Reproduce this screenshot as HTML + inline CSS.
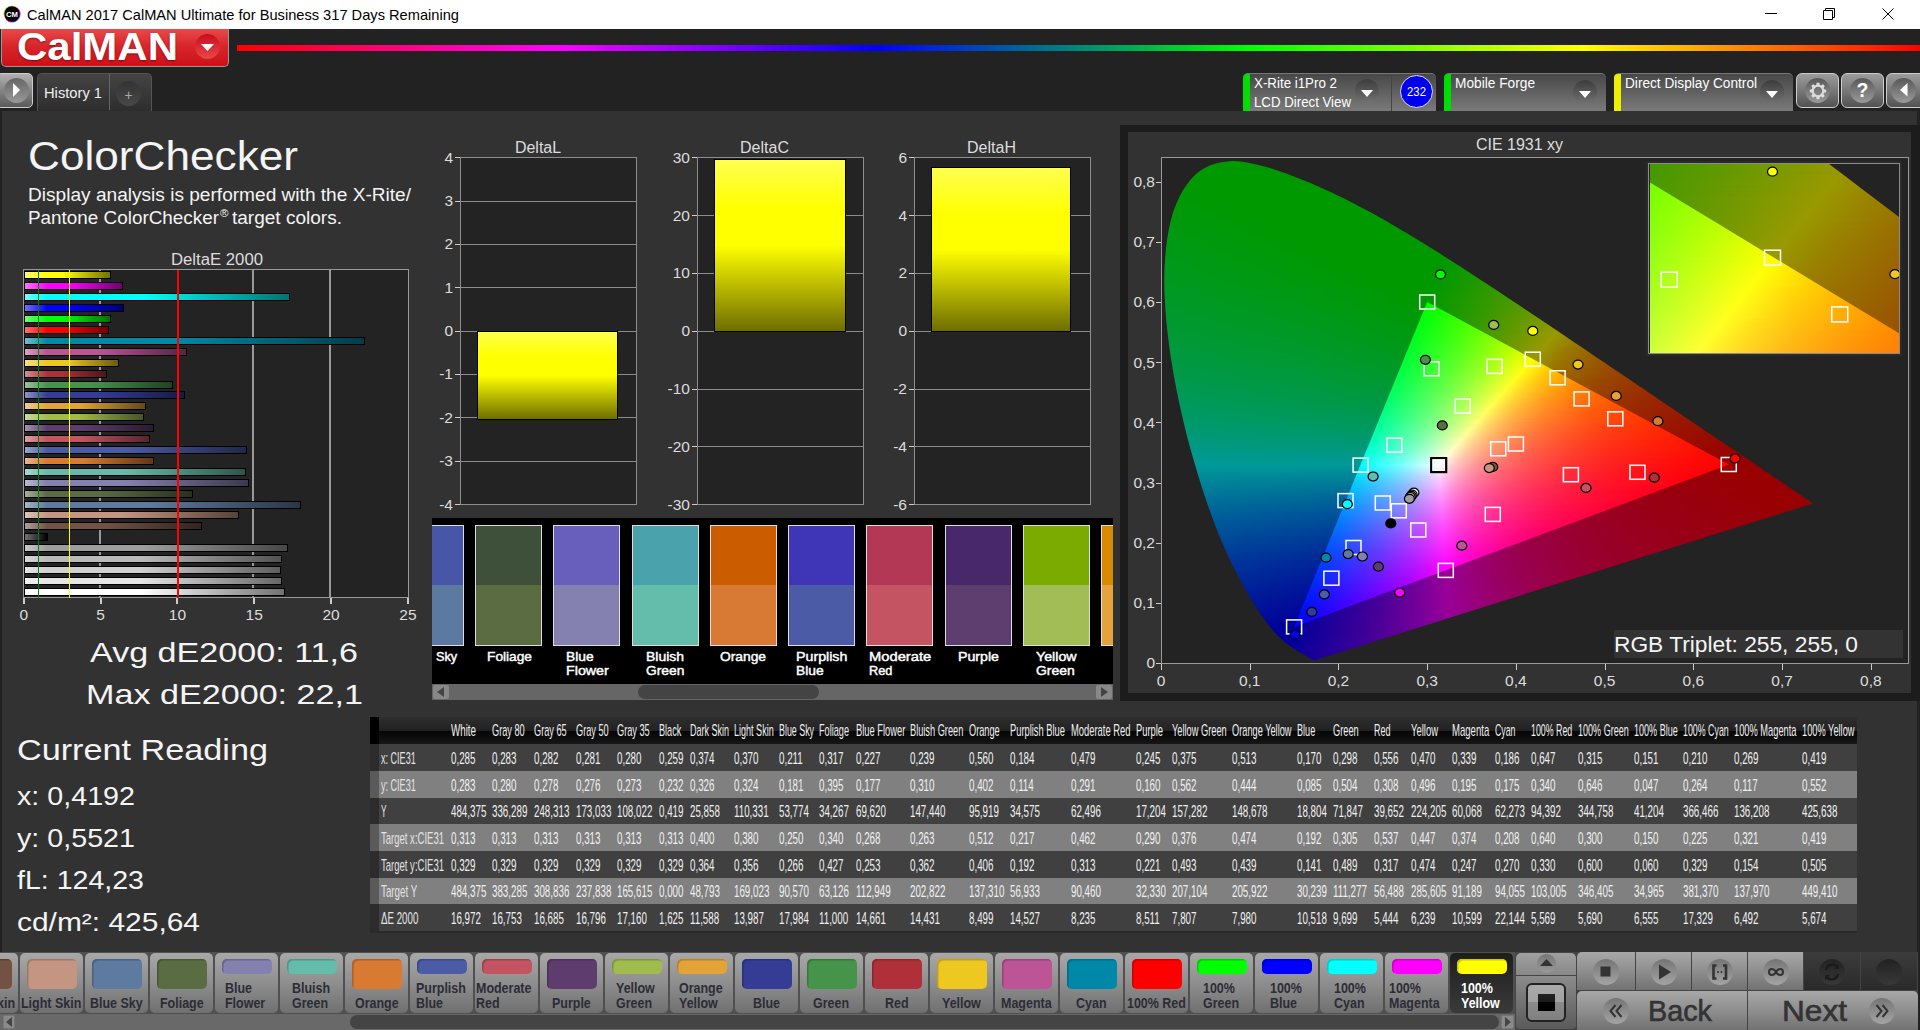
<!DOCTYPE html>
<html><head><meta charset="utf-8"><title>CalMAN</title><style>
html,body{margin:0;padding:0}
body{width:1920px;height:1030px;overflow:hidden;position:relative;background:#323232;font-family:"Liberation Sans",sans-serif}
div,span,svg{position:absolute;box-sizing:border-box}
.t{white-space:pre;line-height:1;transform-origin:0 0}
</style></head><body>
<div style="left:0px;top:0px;width:1920px;height:29px;background:#fff"></div>
<svg style="left:3px;top:5px" width="18" height="18" viewBox="0 0 21 21"><defs><linearGradient id="ic" x1="0" y1="0" x2="1" y2="1"><stop offset="0" stop-color="#3c3"/><stop offset=".35" stop-color="#ff0"/><stop offset=".6" stop-color="#f0f"/><stop offset="1" stop-color="#06f"/></linearGradient></defs><circle cx="10.5" cy="10.5" r="10" fill="url(#ic)"/><circle cx="10.5" cy="10.5" r="9" fill="#000"/><text x="10.5" y="14" font-family="Liberation Sans,sans-serif" font-size="9" font-weight="700" fill="#fff" text-anchor="middle">CM</text></svg>
<span class="t" style="left:27.00px;top:6.80px;font-size:15px;color:#000;transform:scaleX(0.9759);">CalMAN 2017 CalMAN Ultimate for Business 317 Days Remaining</span>
<svg style="left:1760px;top:0" width="160" height="29" viewBox="0 0 160 29"><g stroke="#000" stroke-width="1" fill="none"><path d="M5 13.5h12"/><path d="M63.5 10.5h9v9h-9z M65.5 10.5v-2h9v9h-2" /><path d="M122.500 8.5l11 11 M133.5 8.5l-11 11"/></g></svg>
<div style="left:0px;top:29px;width:1920px;height:82px;background:#222"></div>
<div style="left:237px;top:45px;width:1683px;height:6px;background:linear-gradient(90deg,#f00 0%,#f0f 19%,#00f 38%,#00a060 52%,#0f0 60%,#ff0 80%,#f00 100%)"></div>
<div style="left:1px;top:29px;width:228px;height:38px;background:linear-gradient(180deg,#e84a4a 0%,#d8262c 45%,#cc1118 100%);border:1px solid #999;border-top:none;border-radius:0 0 5px 5px"></div>
<span class="t" style="left:16.50px;top:28.41px;font-size:38.5px;color:#fff;font-weight:700;transform:scaleX(1.0908);text-shadow:0 1px 2px rgba(80,0,0,.6);">CalMAN</span>
<div style="left:195px;top:34px;width:25px;height:25px;border-radius:50%;background:linear-gradient(180deg,#c80d1c,#e8484a)"></div>
<svg style="left:201px;top:44px" width="13" height="8"><path d="M0 0h13l-6.500 7z" fill="#fff"/></svg>
<div style="left:-4px;top:73px;width:37px;height:35px;background:linear-gradient(180deg,#b0b0b0,#5a5a5a);border:1px solid #ccc;border-radius:5px"></div>
<div style="left:4px;top:78px;width:25px;height:25px;border-radius:50%;background:linear-gradient(180deg,#666,#999)"></div>
<svg style="left:13px;top:83px" width="8" height="14"><path d="M0 0l7 7-7 7z" fill="#fff"/></svg>
<div style="left:37px;top:73px;width:115px;height:38px;background:linear-gradient(180deg,#444,#2d2d2d);border:1px solid #555;border-bottom:none;border-radius:5px 5px 0 0"></div>
<div style="left:109px;top:74px;width:1px;height:36px;background:#666"></div>
<span class="t" style="left:44.00px;top:85.30px;font-size:15px;color:#eee;transform:scaleX(0.9799);">History 1</span>
<div style="left:116px;top:81px;width:25px;height:25px;border-radius:50%;background:linear-gradient(180deg,#333,#484848)"></div>
<span class="t" style="left:124.41px;top:88.15px;font-size:14px;color:#aaa;">+</span>
<div style="left:1243px;top:73px;width:193px;height:38px;background:linear-gradient(180deg,#484848 0%,#7a7a7a 100%);border-top:1px solid #777;border-radius:5px 5px 0 0;overflow:hidden"></div>
<div style="left:1243px;top:74px;width:7px;height:37px;background:#0d0;border-radius:4px 0 0 0"></div>
<span class="t" style="left:1254.00px;top:76.15px;font-size:14px;color:#fff;transform:scaleX(0.9523);">X-Rite i1Pro 2</span>
<span class="t" style="left:1254.00px;top:95.15px;font-size:14px;color:#fff;transform:scaleX(0.9469);">LCD Direct View</span>
<div style="left:1355px;top:79px;width:24px;height:24px;border-radius:50%;background:linear-gradient(180deg,#3c3c3c,#727272)"></div>
<svg style="left:1361px;top:90px" width="12" height="7"><path d="M0 0h12l-6 7z" fill="#fff"/></svg>
<div style="left:1391px;top:76px;width:1px;height:35px;background:#444"></div>
<div style="left:1400px;top:75px;width:33px;height:33px;border-radius:50%;background:#0000f0;border:1.500px solid #ddd"></div>
<span class="t" style="left:1407.00px;top:85.84px;font-size:12px;color:#fff;transform:scaleX(0.9485);">232</span>
<div style="left:1444px;top:73px;width:162px;height:38px;background:linear-gradient(180deg,#484848 0%,#7a7a7a 100%);border-top:1px solid #777;border-radius:5px 5px 0 0;overflow:hidden"></div>
<div style="left:1444px;top:74px;width:7px;height:37px;background:#0d0;border-radius:4px 0 0 0"></div>
<span class="t" style="left:1455.00px;top:76.15px;font-size:14px;color:#fff;transform:scaleX(0.9792);">Mobile Forge</span>
<div style="left:1573px;top:80px;width:24px;height:24px;border-radius:50%;background:linear-gradient(180deg,#3c3c3c,#727272)"></div>
<svg style="left:1579px;top:91px" width="12" height="7"><path d="M0 0h12l-6 7z" fill="#fff"/></svg>
<div style="left:1614px;top:73px;width:179px;height:38px;background:linear-gradient(180deg,#484848 0%,#7a7a7a 100%);border-top:1px solid #777;border-radius:5px 5px 0 0;overflow:hidden"></div>
<div style="left:1614px;top:74px;width:7px;height:37px;background:#ee0;border-radius:4px 0 0 0"></div>
<span class="t" style="left:1625.00px;top:76.15px;font-size:14px;color:#fff;transform:scaleX(0.9751);">Direct Display Control</span>
<div style="left:1760px;top:80px;width:24px;height:24px;border-radius:50%;background:linear-gradient(180deg,#3c3c3c,#727272)"></div>
<svg style="left:1766px;top:91px" width="12" height="7"><path d="M0 0h12l-6 7z" fill="#fff"/></svg>
<div style="left:1796px;top:72.5px;width:43px;height:35.5px;background:linear-gradient(180deg,#9c9c9c,#787878 50%,#525252);border:1px solid #ccc;border-radius:6px"></div>
<div style="left:1805px;top:78px;width:25px;height:25px;border-radius:50%;background:linear-gradient(180deg,#585858,#9a9a9a)"></div>
<div style="left:1841px;top:72.5px;width:43px;height:35.5px;background:linear-gradient(180deg,#9c9c9c,#787878 50%,#525252);border:1px solid #ccc;border-radius:6px"></div>
<div style="left:1850px;top:78px;width:25px;height:25px;border-radius:50%;background:linear-gradient(180deg,#585858,#9a9a9a)"></div>
<div style="left:1886px;top:72.5px;width:43px;height:35.5px;background:linear-gradient(180deg,#9c9c9c,#787878 50%,#525252);border:1px solid #ccc;border-radius:6px"></div>
<div style="left:1891.2px;top:78px;width:25px;height:25px;border-radius:50%;background:linear-gradient(180deg,#585858,#9a9a9a)"></div>
<svg style="left:1807.500px;top:80.500px" width="20" height="20" viewBox="-10 -10 20 20"><g fill="#ddd"><path d="M-1.300 -8.200h2.600l.7 3h-4z" transform="rotate(0)"/><path d="M-1.300 -8.200h2.600l.7 3h-4z" transform="rotate(45)"/><path d="M-1.300 -8.200h2.600l.7 3h-4z" transform="rotate(90)"/><path d="M-1.300 -8.200h2.600l.7 3h-4z" transform="rotate(135)"/><path d="M-1.300 -8.200h2.600l.7 3h-4z" transform="rotate(180)"/><path d="M-1.300 -8.200h2.600l.7 3h-4z" transform="rotate(225)"/><path d="M-1.300 -8.200h2.600l.7 3h-4z" transform="rotate(270)"/><path d="M-1.300 -8.200h2.600l.7 3h-4z" transform="rotate(315)"/></g><circle r="5.200" fill="none" stroke="#ddd" stroke-width="2"/></svg>
<span class="t" style="left:1856.54px;top:80.99px;font-size:19.5px;color:#fff;font-weight:700;">?</span>
<svg style="left:1900px;top:83px" width="8" height="14"><path d="M7.500 0v13.500l-7.500-6.500z" fill="#fff"/></svg>
<div style="left:0px;top:111px;width:1920px;height:919px;background:#323232"></div>
<div style="left:0px;top:110px;width:2px;height:920px;background:#222"></div>
<div style="left:1917px;top:110px;width:3px;height:15px;background:#222"></div>
<div style="left:1917px;top:700px;width:3px;height:330px;background:#222"></div>
<span class="t" style="left:28.00px;top:135.79px;font-size:41px;color:#f4f4f4;transform:scaleX(1.0772);">ColorChecker</span>
<span class="t" style="left:28.00px;top:185.76px;font-size:18px;color:#f4f4f4;transform:scaleX(1.0605);">Display analysis is performed with the X-Rite/</span>
<span class="t" style="left:28.00px;top:208.76px;font-size:18px;color:#f4f4f4;transform:scaleX(1.0488);">Pantone ColorChecker</span>
<span class="t" style="left:219.50px;top:208.53px;font-size:10px;color:#f4f4f4;transform:scaleX(1.1525);">®</span>
<span class="t" style="left:232.00px;top:208.76px;font-size:18px;color:#f4f4f4;transform:scaleX(1.0572);">target colors.</span>
<span class="t" style="left:170.50px;top:252.46px;font-size:16px;color:#ddd;transform:scaleX(1.0447);">DeltaE 2000</span>
<div style="left:23px;top:269px;width:386px;height:329px;background:#232323;border:1px solid #999"></div>
<div style="left:99.4px;top:270px;width:1.6px;height:327px;background:#999"></div>
<div style="left:252.4px;top:270px;width:1.6px;height:327px;background:#999"></div>
<div style="left:329.4px;top:270px;width:1.6px;height:327px;background:#999"></div>
<div style="left:24px;top:271px;width:86.7px;height:8px;background:#000"></div><div style="left:25px;top:272px;width:84.7px;height:6px;background:linear-gradient(90deg,rgb(255, 255, 114) 0,rgb(255, 255, 0) 22px,rgb(255, 255, 0) 45%,rgb(114, 114, 0) 100%)"></div>
<div style="left:24px;top:282px;width:99.3px;height:8px;background:#000"></div><div style="left:25px;top:283px;width:97.3px;height:6px;background:linear-gradient(90deg,rgb(255, 114, 255) 0,rgb(255, 0, 255) 22px,rgb(255, 0, 255) 45%,rgb(114, 0, 114) 100%)"></div>
<div style="left:24px;top:293px;width:266.4px;height:8px;background:#000"></div><div style="left:25px;top:294px;width:264.4px;height:6px;background:linear-gradient(90deg,rgb(114, 255, 255) 0,rgb(0, 255, 255) 22px,rgb(0, 255, 255) 45%,rgb(0, 114, 114) 100%)"></div>
<div style="left:24px;top:304px;width:100.3px;height:8px;background:#000"></div><div style="left:25px;top:305px;width:98.3px;height:6px;background:linear-gradient(90deg,rgb(114, 114, 255) 0,rgb(0, 0, 255) 22px,rgb(0, 0, 255) 45%,rgb(0, 0, 114) 100%)"></div>
<div style="left:24px;top:315px;width:86.9px;height:8px;background:#000"></div><div style="left:25px;top:316px;width:84.9px;height:6px;background:linear-gradient(90deg,rgb(114, 255, 114) 0,rgb(0, 255, 0) 22px,rgb(0, 255, 0) 45%,rgb(0, 114, 0) 100%)"></div>
<div style="left:24px;top:326px;width:85.1px;height:8px;background:#000"></div><div style="left:25px;top:327px;width:83.1px;height:6px;background:linear-gradient(90deg,rgb(255, 114, 114) 0,rgb(255, 0, 0) 22px,rgb(255, 0, 0) 45%,rgb(114, 0, 0) 100%)"></div>
<div style="left:24px;top:337px;width:340.7px;height:8px;background:#000"></div><div style="left:25px;top:338px;width:338.7px;height:6px;background:linear-gradient(90deg,rgb(114, 189, 207) 0,rgb(0, 136, 168) 22px,rgb(0, 136, 168) 45%,rgb(0, 61, 75) 100%)"></div>
<div style="left:24px;top:348px;width:162.6px;height:8px;background:#000"></div><div style="left:25px;top:349px;width:160.6px;height:6px;background:linear-gradient(90deg,rgb(218, 160, 197) 0,rgb(188, 84, 150) 22px,rgb(188, 84, 150) 45%,rgb(84, 37, 67) 100%)"></div>
<div style="left:24px;top:359px;width:95.4px;height:8px;background:#000"></div><div style="left:25px;top:360px;width:93.4px;height:6px;background:linear-gradient(90deg,rgb(245, 224, 132) 0,rgb(238, 200, 32) 22px,rgb(238, 200, 32) 45%,rgb(107, 90, 14) 100%)"></div>
<div style="left:24px;top:370px;width:83.1px;height:8px;background:#000"></div><div style="left:25px;top:371px;width:81.1px;height:6px;background:linear-gradient(90deg,rgb(211, 141, 146) 0,rgb(176, 48, 58) 22px,rgb(176, 48, 58) 45%,rgb(79, 21, 26) 100%)"></div>
<div style="left:24px;top:381px;width:148.8px;height:8px;background:#000"></div><div style="left:25px;top:382px;width:146.8px;height:6px;background:linear-gradient(90deg,rgb(153, 196, 156) 0,rgb(70, 148, 76) 22px,rgb(70, 148, 76) 45%,rgb(31, 66, 34) 100%)"></div>
<div style="left:24px;top:391px;width:161.4px;height:8px;background:#000"></div><div style="left:25px;top:392px;width:159.4px;height:6px;background:linear-gradient(90deg,rgb(143, 147, 197) 0,rgb(52, 60, 150) 22px,rgb(52, 60, 150) 45%,rgb(23, 27, 67) 100%)"></div>
<div style="left:24px;top:402px;width:122.3px;height:8px;background:#000"></div><div style="left:25px;top:403px;width:120.3px;height:6px;background:linear-gradient(90deg,rgb(240, 204, 145) 0,rgb(228, 163, 56) 22px,rgb(228, 163, 56) 45%,rgb(102, 73, 25) 100%)"></div>
<div style="left:24px;top:413px;width:119.6px;height:8px;background:#000"></div><div style="left:25px;top:414px;width:117.6px;height:6px;background:linear-gradient(90deg,rgb(202, 218, 157) 0,rgb(160, 188, 78) 22px,rgb(160, 188, 78) 45%,rgb(72, 84, 35) 100%)"></div>
<div style="left:24px;top:424px;width:130.4px;height:8px;background:#000"></div><div style="left:25px;top:425px;width:128.4px;height:6px;background:linear-gradient(90deg,rgb(166, 147, 175) 0,rgb(94, 60, 110) 22px,rgb(94, 60, 110) 45%,rgb(42, 27, 49) 100%)"></div>
<div style="left:24px;top:435px;width:126.2px;height:8px;background:#000"></div><div style="left:25px;top:436px;width:124.2px;height:6px;background:linear-gradient(90deg,rgb(222, 160, 168) 0,rgb(196, 84, 98) 22px,rgb(196, 84, 98) 45%,rgb(88, 37, 44) 100%)"></div>
<div style="left:24px;top:446px;width:223.2px;height:8px;background:#000"></div><div style="left:25px;top:447px;width:221.2px;height:6px;background:linear-gradient(90deg,rgb(156, 164, 206) 0,rgb(76, 91, 166) 22px,rgb(76, 91, 166) 45%,rgb(34, 40, 74) 100%)"></div>
<div style="left:24px;top:457px;width:130.3px;height:8px;background:#000"></div><div style="left:25px;top:458px;width:128.3px;height:6px;background:linear-gradient(90deg,rgb(234, 181, 142) 0,rgb(217, 122, 50) 22px,rgb(217, 122, 50) 45%,rgb(97, 54, 22) 100%)"></div>
<div style="left:24px;top:468px;width:221.7px;height:8px;background:#000"></div><div style="left:25px;top:469px;width:219.7px;height:6px;background:linear-gradient(90deg,rgb(169, 218, 208) 0,rgb(100, 189, 170) 22px,rgb(100, 189, 170) 45%,rgb(45, 85, 76) 100%)"></div>
<div style="left:24px;top:479px;width:225.3px;height:8px;background:#000"></div><div style="left:25px;top:480px;width:223.3px;height:6px;background:linear-gradient(90deg,rgb(187, 185, 211) 0,rgb(132, 128, 176) 22px,rgb(132, 128, 176) 45%,rgb(59, 57, 79) 100%)"></div>
<div style="left:24px;top:490px;width:168.8px;height:8px;background:#000"></div><div style="left:25px;top:491px;width:166.8px;height:6px;background:linear-gradient(90deg,rgb(164, 174, 151) 0,rgb(90, 108, 66) 22px,rgb(90, 108, 66) 45%,rgb(40, 48, 29) 100%)"></div>
<div style="left:24px;top:501px;width:276.5px;height:8px;background:#000"></div><div style="left:25px;top:502px;width:274.5px;height:6px;background:linear-gradient(90deg,rgb(165, 181, 202) 0,rgb(93, 122, 160) 22px,rgb(93, 122, 160) 45%,rgb(41, 54, 72) 100%)"></div>
<div style="left:24px;top:511px;width:214.9px;height:8px;background:#000"></div><div style="left:25px;top:512px;width:212.9px;height:6px;background:linear-gradient(90deg,rgb(222, 197, 186) 0,rgb(196, 150, 130) 22px,rgb(196, 150, 130) 45%,rgb(88, 67, 58) 100%)"></div>
<div style="left:24px;top:522px;width:177.9px;height:8px;background:#000"></div><div style="left:25px;top:523px;width:175.9px;height:6px;background:linear-gradient(90deg,rgb(178, 159, 152) 0,rgb(115, 82, 68) 22px,rgb(115, 82, 68) 45%,rgb(51, 36, 30) 100%)"></div>
<div style="left:24px;top:533px;width:24.3px;height:8px;background:#000"></div><div style="left:25px;top:534px;width:22.3px;height:6px;background:linear-gradient(90deg,rgb(114, 114, 114) 0,rgb(0, 0, 0) 22px,rgb(0, 0, 0) 45%,rgb(0, 0, 0) 100%)"></div>
<div style="left:24px;top:544px;width:263.8px;height:8px;background:#000"></div><div style="left:25px;top:545px;width:261.8px;height:6px;background:linear-gradient(90deg,rgb(201, 201, 201) 0,rgb(158, 158, 158) 22px,rgb(158, 158, 158) 45%,rgb(71, 71, 71) 100%)"></div>
<div style="left:24px;top:555px;width:258.2px;height:8px;background:#000"></div><div style="left:25px;top:556px;width:256.2px;height:6px;background:linear-gradient(90deg,rgb(217, 217, 217) 0,rgb(186, 186, 186) 22px,rgb(186, 186, 186) 45%,rgb(83, 83, 83) 100%)"></div>
<div style="left:24px;top:566px;width:256.5px;height:8px;background:#000"></div><div style="left:25px;top:567px;width:254.5px;height:6px;background:linear-gradient(90deg,rgb(229, 229, 229) 0,rgb(209, 209, 209) 22px,rgb(209, 209, 209) 45%,rgb(94, 94, 94) 100%)"></div>
<div style="left:24px;top:577px;width:257.5px;height:8px;background:#000"></div><div style="left:25px;top:578px;width:255.5px;height:6px;background:linear-gradient(90deg,rgb(241, 241, 241) 0,rgb(230, 230, 230) 22px,rgb(230, 230, 230) 45%,rgb(103, 103, 103) 100%)"></div>
<div style="left:24px;top:588px;width:260.9px;height:8px;background:#000"></div><div style="left:25px;top:589px;width:258.9px;height:6px;background:linear-gradient(90deg,rgb(255, 255, 255) 0,rgb(255, 255, 255) 22px,rgb(255, 255, 255) 45%,rgb(114, 114, 114) 100%)"></div>
<div style="left:37.7px;top:270px;width:1.6px;height:328px;background:#008000"></div>
<div style="left:68.6px;top:270px;width:1.7px;height:328px;background:#ff0"></div>
<div style="left:176.5px;top:270px;width:2px;height:328px;background:#f00"></div>
<div style="left:23px;top:598px;width:2px;height:6px;background:#ccc"></div>
<span class="t" style="left:19.39px;top:606.88px;font-size:15.5px;color:#ddd;">0</span>
<div style="left:100px;top:598px;width:2px;height:6px;background:#ccc"></div>
<span class="t" style="left:96.24px;top:606.88px;font-size:15.5px;color:#ddd;">5</span>
<div style="left:176px;top:598px;width:2px;height:6px;background:#ccc"></div>
<span class="t" style="left:168.77px;top:606.88px;font-size:15.5px;color:#ddd;">10</span>
<div style="left:253px;top:598px;width:2px;height:6px;background:#ccc"></div>
<span class="t" style="left:245.62px;top:606.88px;font-size:15.5px;color:#ddd;">15</span>
<div style="left:330px;top:598px;width:2px;height:6px;background:#ccc"></div>
<span class="t" style="left:322.47px;top:606.88px;font-size:15.5px;color:#ddd;">20</span>
<div style="left:407px;top:598px;width:2px;height:6px;background:#ccc"></div>
<span class="t" style="left:399.32px;top:606.88px;font-size:15.5px;color:#ddd;">25</span>
<span class="t" style="left:90.00px;top:638.80px;font-size:28px;color:#f4f4f4;transform:scaleX(1.2179);">Avg dE2000: 11,6</span>
<span class="t" style="left:85.50px;top:680.80px;font-size:28px;color:#f4f4f4;transform:scaleX(1.2188);">Max dE2000: 22,1</span>
<span class="t" style="left:17.00px;top:735.11px;font-size:30px;color:#f4f4f4;transform:scaleX(1.1403);">Current Reading</span>
<span class="t" style="left:17.00px;top:782.99px;font-size:26px;color:#f4f4f4;transform:scaleX(1.1030);">x: 0,4192</span>
<span class="t" style="left:17.00px;top:824.99px;font-size:26px;color:#f4f4f4;transform:scaleX(1.1030);">y: 0,5521</span>
<span class="t" style="left:17.00px;top:866.99px;font-size:26px;color:#f4f4f4;transform:scaleX(1.0981);">fL: 124,23</span>
<span class="t" style="left:17.00px;top:908.99px;font-size:26px;color:#f4f4f4;transform:scaleX(1.1511);">cd/m²: 425,64</span>
<div style="left:460px;top:157px;width:176.5px;height:347.5px;background:#232323;border:1.700px solid #8e8e8e"></div>
<div style="left:455px;top:503.75px;width:5px;height:1.5px;background:#ccc"></div>
<span class="t" style="left:439.20px;top:496.58px;font-size:15.5px;color:#ddd;">-4</span>
<div style="left:461px;top:460.75px;width:175px;height:1.25px;background:#8c8c8c"></div>
<div style="left:455px;top:460.75px;width:5px;height:1.5px;background:#ccc"></div>
<span class="t" style="left:439.20px;top:453.22px;font-size:15.5px;color:#ddd;">-3</span>
<div style="left:461px;top:416.75px;width:175px;height:1.25px;background:#8c8c8c"></div>
<div style="left:455px;top:416.75px;width:5px;height:1.5px;background:#ccc"></div>
<span class="t" style="left:439.20px;top:409.85px;font-size:15.5px;color:#ddd;">-2</span>
<div style="left:461px;top:373.75px;width:175px;height:1.25px;background:#8c8c8c"></div>
<div style="left:455px;top:373.75px;width:5px;height:1.5px;background:#ccc"></div>
<span class="t" style="left:439.20px;top:366.49px;font-size:15.5px;color:#ddd;">-1</span>
<div style="left:461px;top:330.75px;width:175px;height:1.25px;background:#8c8c8c"></div>
<div style="left:455px;top:330.75px;width:5px;height:1.5px;background:#ccc"></div>
<span class="t" style="left:444.38px;top:323.13px;font-size:15.5px;color:#ddd;">0</span>
<div style="left:461px;top:286.75px;width:175px;height:1.25px;background:#8c8c8c"></div>
<div style="left:455px;top:286.75px;width:5px;height:1.5px;background:#ccc"></div>
<span class="t" style="left:444.38px;top:279.77px;font-size:15.5px;color:#ddd;">1</span>
<div style="left:461px;top:243.75px;width:175px;height:1.25px;background:#8c8c8c"></div>
<div style="left:455px;top:243.75px;width:5px;height:1.5px;background:#ccc"></div>
<span class="t" style="left:444.38px;top:236.40px;font-size:15.5px;color:#ddd;">2</span>
<div style="left:461px;top:200.75px;width:175px;height:1.25px;background:#8c8c8c"></div>
<div style="left:455px;top:200.75px;width:5px;height:1.5px;background:#ccc"></div>
<span class="t" style="left:444.38px;top:193.04px;font-size:15.5px;color:#ddd;">3</span>
<div style="left:455px;top:156.75px;width:5px;height:1.5px;background:#ccc"></div>
<span class="t" style="left:444.38px;top:149.68px;font-size:15.5px;color:#ddd;">4</span>
<span class="t" style="left:514.88px;top:139.96px;font-size:16px;color:#ddd;">DeltaL</span>
<div style="left:477px;top:330.75px;width:141px;height:89.45949999999999px;background:linear-gradient(180deg,#ffff50 0%,#ff0 28%,#ff0 50%,#6e6e00 100%);border:1px solid #000"></div>
<div style="left:697px;top:157px;width:166.5px;height:347.5px;background:#232323;border:1.700px solid #8e8e8e"></div>
<div style="left:692px;top:503.75px;width:5px;height:1.5px;background:#ccc"></div>
<span class="t" style="left:667.59px;top:496.58px;font-size:15.5px;color:#ddd;">-30</span>
<div style="left:698px;top:445.75px;width:165px;height:1.25px;background:#8c8c8c"></div>
<div style="left:692px;top:445.75px;width:5px;height:1.5px;background:#ccc"></div>
<span class="t" style="left:667.59px;top:438.76px;font-size:15.5px;color:#ddd;">-20</span>
<div style="left:698px;top:388.75px;width:165px;height:1.25px;background:#8c8c8c"></div>
<div style="left:692px;top:388.75px;width:5px;height:1.5px;background:#ccc"></div>
<span class="t" style="left:667.59px;top:380.95px;font-size:15.5px;color:#ddd;">-10</span>
<div style="left:698px;top:330.75px;width:165px;height:1.25px;background:#8c8c8c"></div>
<div style="left:692px;top:330.75px;width:5px;height:1.5px;background:#ccc"></div>
<span class="t" style="left:681.38px;top:323.13px;font-size:15.5px;color:#ddd;">0</span>
<div style="left:698px;top:272.75px;width:165px;height:1.25px;background:#8c8c8c"></div>
<div style="left:692px;top:272.75px;width:5px;height:1.5px;background:#ccc"></div>
<span class="t" style="left:672.75px;top:265.31px;font-size:15.5px;color:#ddd;">10</span>
<div style="left:698px;top:214.75px;width:165px;height:1.25px;background:#8c8c8c"></div>
<div style="left:692px;top:214.75px;width:5px;height:1.5px;background:#ccc"></div>
<span class="t" style="left:672.75px;top:207.50px;font-size:15.5px;color:#ddd;">20</span>
<div style="left:692px;top:156.75px;width:5px;height:1.5px;background:#ccc"></div>
<span class="t" style="left:672.75px;top:149.68px;font-size:15.5px;color:#ddd;">30</span>
<span class="t" style="left:740.05px;top:139.96px;font-size:16px;color:#ddd;">DeltaC</span>
<div style="left:714px;top:159.0345px;width:132px;height:172.7155px;background:linear-gradient(180deg,#ffff50 0%,#ff0 28%,#ff0 50%,#6e6e00 100%);border:1px solid #000"></div>
<div style="left:914px;top:157px;width:176.5px;height:347.5px;background:#232323;border:1.700px solid #8e8e8e"></div>
<div style="left:909px;top:503.75px;width:5px;height:1.5px;background:#ccc"></div>
<span class="t" style="left:893.20px;top:496.58px;font-size:15.5px;color:#ddd;">-6</span>
<div style="left:915px;top:445.75px;width:175px;height:1.25px;background:#8c8c8c"></div>
<div style="left:909px;top:445.75px;width:5px;height:1.5px;background:#ccc"></div>
<span class="t" style="left:893.20px;top:438.76px;font-size:15.5px;color:#ddd;">-4</span>
<div style="left:915px;top:388.75px;width:175px;height:1.25px;background:#8c8c8c"></div>
<div style="left:909px;top:388.75px;width:5px;height:1.5px;background:#ccc"></div>
<span class="t" style="left:893.20px;top:380.95px;font-size:15.5px;color:#ddd;">-2</span>
<div style="left:915px;top:330.75px;width:175px;height:1.25px;background:#8c8c8c"></div>
<div style="left:909px;top:330.75px;width:5px;height:1.5px;background:#ccc"></div>
<span class="t" style="left:898.38px;top:323.13px;font-size:15.5px;color:#ddd;">0</span>
<div style="left:915px;top:272.75px;width:175px;height:1.25px;background:#8c8c8c"></div>
<div style="left:909px;top:272.75px;width:5px;height:1.5px;background:#ccc"></div>
<span class="t" style="left:898.38px;top:265.31px;font-size:15.5px;color:#ddd;">2</span>
<div style="left:915px;top:214.75px;width:175px;height:1.25px;background:#8c8c8c"></div>
<div style="left:909px;top:214.75px;width:5px;height:1.5px;background:#ccc"></div>
<span class="t" style="left:898.38px;top:207.50px;font-size:15.5px;color:#ddd;">4</span>
<div style="left:909px;top:156.75px;width:5px;height:1.5px;background:#ccc"></div>
<span class="t" style="left:898.38px;top:149.68px;font-size:15.5px;color:#ddd;">6</span>
<span class="t" style="left:967.05px;top:139.96px;font-size:16px;color:#ddd;">DeltaH</span>
<div style="left:930.8px;top:166.83975px;width:140.70000000000005px;height:164.91025px;background:linear-gradient(180deg,#ffff50 0%,#ff0 28%,#ff0 50%,#6e6e00 100%);border:1px solid #000"></div>
<div style="left:432px;top:518px;width:681px;height:168px;background:#000"></div>
<div style="left:432px;top:518px;width:681px;height:166px;overflow:hidden">
<div style="left:-35.4px;top:7px;width:67px;height:121px;border:1px solid #ddd;background:linear-gradient(180deg,rgb(72, 86, 168) 0,rgb(72, 86, 168) 49.500%,rgb(92, 122, 160) 49.500%,rgb(92, 122, 160) 100%)"></div>
<div style="left:42.9px;top:7px;width:67px;height:121px;border:1px solid #ddd;background:linear-gradient(180deg,rgb(62, 80, 58) 0,rgb(62, 80, 58) 49.500%,rgb(92, 108, 66) 49.500%,rgb(92, 108, 66) 100%)"></div>
<div style="left:121.2px;top:7px;width:67px;height:121px;border:1px solid #ddd;background:linear-gradient(180deg,rgb(104, 94, 188) 0,rgb(104, 94, 188) 49.500%,rgb(132, 128, 176) 49.500%,rgb(132, 128, 176) 100%)"></div>
<div style="left:199.5px;top:7px;width:67px;height:121px;border:1px solid #ddd;background:linear-gradient(180deg,rgb(74, 162, 172) 0,rgb(74, 162, 172) 49.500%,rgb(100, 189, 170) 49.500%,rgb(100, 189, 170) 100%)"></div>
<div style="left:277.8px;top:7px;width:67px;height:121px;border:1px solid #ddd;background:linear-gradient(180deg,rgb(204, 92, 0) 0,rgb(204, 92, 0) 49.500%,rgb(217, 122, 52) 49.500%,rgb(217, 122, 52) 100%)"></div>
<div style="left:356.1px;top:7px;width:67px;height:121px;border:1px solid #ddd;background:linear-gradient(180deg,rgb(62, 54, 183) 0,rgb(62, 54, 183) 49.500%,rgb(76, 91, 166) 49.500%,rgb(76, 91, 166) 100%)"></div>
<div style="left:434.4px;top:7px;width:67px;height:121px;border:1px solid #ddd;background:linear-gradient(180deg,rgb(178, 56, 86) 0,rgb(178, 56, 86) 49.500%,rgb(196, 84, 98) 49.500%,rgb(196, 84, 98) 100%)"></div>
<div style="left:512.7px;top:7px;width:67px;height:121px;border:1px solid #ddd;background:linear-gradient(180deg,rgb(72, 40, 106) 0,rgb(72, 40, 106) 49.500%,rgb(94, 62, 110) 49.500%,rgb(94, 62, 110) 100%)"></div>
<div style="left:591.0px;top:7px;width:67px;height:121px;border:1px solid #ddd;background:linear-gradient(180deg,rgb(124, 171, 0) 0,rgb(124, 171, 0) 49.500%,rgb(163, 189, 86) 49.500%,rgb(163, 189, 86) 100%)"></div>
<div style="left:669.3px;top:7px;width:67px;height:121px;border:1px solid #ddd;background:linear-gradient(180deg,rgb(214, 138, 0) 0,rgb(214, 138, 0) 49.500%,rgb(228, 163, 60) 49.500%,rgb(228, 163, 60) 100%)"></div>
</div>
<span class="t" style="left:436.00px;top:649.57px;font-size:13.5px;color:#fff;transform:scaleX(0.9416);-webkit-text-stroke:.45px #fff;">Sky</span>
<span class="t" style="left:486.50px;top:649.57px;font-size:13.5px;color:#fff;transform:scaleX(1.0162);-webkit-text-stroke:.45px #fff;">Foliage</span>
<span class="t" style="left:565.80px;top:649.57px;font-size:13.5px;color:#fff;transform:scaleX(1.0247);-webkit-text-stroke:.45px #fff;">Blue</span>
<span class="t" style="left:565.80px;top:663.57px;font-size:13.5px;color:#fff;transform:scaleX(1.0564);-webkit-text-stroke:.45px #fff;">Flower</span>
<span class="t" style="left:646.00px;top:649.57px;font-size:13.5px;color:#fff;transform:scaleX(1.0331);-webkit-text-stroke:.45px #fff;">Bluish</span>
<span class="t" style="left:646.00px;top:663.57px;font-size:13.5px;color:#fff;transform:scaleX(1.0231);-webkit-text-stroke:.45px #fff;">Green</span>
<span class="t" style="left:720.30px;top:649.57px;font-size:13.5px;color:#fff;transform:scaleX(1.0215);-webkit-text-stroke:.45px #fff;">Orange</span>
<span class="t" style="left:796.20px;top:649.57px;font-size:13.5px;color:#fff;transform:scaleX(1.0537);-webkit-text-stroke:.45px #fff;">Purplish</span>
<span class="t" style="left:796.20px;top:663.57px;font-size:13.5px;color:#fff;transform:scaleX(1.0247);-webkit-text-stroke:.45px #fff;">Blue</span>
<span class="t" style="left:869.00px;top:649.57px;font-size:13.5px;color:#fff;transform:scaleX(1.0903);-webkit-text-stroke:.45px #fff;">Moderate</span>
<span class="t" style="left:869.00px;top:663.57px;font-size:13.5px;color:#fff;transform:scaleX(0.9449);-webkit-text-stroke:.45px #fff;">Red</span>
<span class="t" style="left:957.80px;top:649.57px;font-size:13.5px;color:#fff;transform:scaleX(1.0504);-webkit-text-stroke:.45px #fff;">Purple</span>
<span class="t" style="left:1036.20px;top:649.57px;font-size:13.5px;color:#fff;transform:scaleX(1.0537);-webkit-text-stroke:.45px #fff;">Yellow</span>
<span class="t" style="left:1036.20px;top:663.57px;font-size:13.5px;color:#fff;transform:scaleX(1.0338);-webkit-text-stroke:.45px #fff;">Green</span>
<div style="left:432px;top:684px;width:681px;height:16px;background:#666"></div>
<div style="left:638px;top:685px;width:181px;height:14px;background:#444;border-radius:7px"></div>
<div style="left:433px;top:685px;width:16px;height:14px;background:#888;border-radius:2px"></div>
<div style="left:1096px;top:685px;width:16px;height:14px;background:#888;border-radius:2px"></div>
<svg style="left:437px;top:687px" width="8" height="10"><path d="M7 0v10l-7-5z" fill="#444"/></svg>
<svg style="left:1100px;top:687px" width="8" height="10"><path d="M1 0v10l7-5z" fill="#444"/></svg>
<div style="left:1120px;top:125px;width:800px;height:575.5px;background:#1c1c1c"></div>
<div style="left:1128px;top:132px;width:783px;height:561px;background:#323232"></div>
<span class="t" style="left:1475.92px;top:137.46px;font-size:16px;color:#ddd;">CIE 1931 xy</span>
<div style="left:1160.5px;top:156.5px;width:748px;height:507px;background:#232323;border:1.500px solid #999"></div>
<div style="left:1162px;top:158px;width:744px;height:504px;clip-path:path('M153.5 502.0 153.4 502.0 153.4 502.0 153.4 502.0 153.3 502.0 153.3 502.0 153.2 502.1 153.1 502.1 153.1 502.1 153.0 502.1 152.9 502.1 152.8 502.1 152.8 502.1 152.7 502.1 152.6 502.1 152.5 502.1 152.4 502.1 152.3 502.1 152.1 502.1 152.0 502.1 151.8 502.1 151.6 502.0 151.4 502.0 151.3 502.0 151.1 501.9 150.9 501.9 150.8 501.8 150.6 501.8 150.4 501.7 150.3 501.6 150.1 501.5 149.9 501.4 149.7 501.3 149.5 501.2 149.3 501.1 149.1 501.0 148.9 500.8 148.6 500.7 148.3 500.5 148.0 500.4 147.7 500.2 147.4 500.0 147.1 499.8 146.7 499.6 146.4 499.4 146.0 499.2 145.7 498.9 145.3 498.7 144.9 498.4 144.4 498.2 144.0 497.9 143.5 497.6 143.0 497.3 142.5 497.0 141.9 496.7 141.3 496.3 140.7 496.0 140.1 495.6 139.4 495.2 138.7 494.8 137.9 494.4 137.2 493.9 136.4 493.4 135.6 493.0 134.8 492.5 133.9 491.9 133.0 491.3 132.0 490.7 131.0 490.1 130.0 489.4 129.0 488.7 127.9 488.0 126.8 487.1 125.6 486.3 124.4 485.4 123.2 484.5 122.0 483.5 120.6 482.3 119.2 481.0 117.7 479.5 116.1 478.0 114.5 476.3 112.8 474.5 111.0 472.5 109.1 470.2 107.2 467.8 105.1 465.3 103.1 462.6 100.9 459.6 98.6 456.4 96.2 452.8 93.8 448.9 91.2 444.8 88.6 440.4 85.8 435.7 83.0 430.7 80.0 425.2 76.9 419.3 73.6 413.1 70.3 406.5 66.8 399.6 63.4 392.1 60.0 384.3 56.5 375.9 53.1 367.0 49.6 357.8 46.1 348.1 42.7 338.0 39.3 327.5 35.9 316.6 32.5 305.1 29.1 293.3 25.8 281.2 22.7 269.0 19.9 256.7 17.1 244.3 14.5 231.7 12.1 218.9 9.9 206.1 7.9 193.4 6.3 181.1 4.9 169.0 3.8 156.9 3.0 144.9 2.4 133.3 2.2 121.9 2.5 111.1 3.1 100.5 4.0 90.3 5.3 80.3 6.9 70.8 8.9 61.9 11.3 53.7 14.2 46.0 17.4 38.9 21.0 32.3 24.9 26.4 29.1 21.1 33.5 16.5 38.2 12.7 43.2 9.7 48.4 7.3 53.8 5.6 59.4 4.3 64.9 3.4 70.6 3.0 76.4 3.3 82.3 4.1 88.3 5.2 94.3 6.5 100.3 8.0 106.3 9.5 112.3 11.4 118.4 13.4 124.4 15.6 130.4 17.9 136.3 20.2 142.0 22.4 147.8 24.8 153.4 27.2 159.0 29.7 164.6 32.2 170.2 34.8 175.7 37.4 181.1 40.1 186.5 42.8 191.9 45.6 197.3 48.4 202.7 51.2 208.1 54.1 213.5 57.1 218.8 60.1 224.2 63.1 229.5 66.2 234.8 69.3 240.1 72.4 245.4 75.6 250.7 78.8 256.0 82.0 261.3 85.2 266.6 88.5 271.9 91.8 277.2 95.1 282.4 98.5 287.7 101.8 293.0 105.2 298.3 108.6 303.6 112.0 308.9 115.4 314.2 118.9 319.5 122.4 324.7 125.8 330.0 129.3 335.3 132.8 340.6 136.3 345.8 139.8 351.1 143.3 356.4 146.8 361.6 150.3 366.9 153.8 372.1 157.3 377.4 160.8 382.6 164.3 387.8 167.8 393.0 171.3 398.2 174.8 403.4 178.2 408.5 181.7 413.6 185.2 418.7 188.6 423.8 192.0 428.9 195.5 433.9 198.9 438.9 202.2 443.9 205.6 448.8 208.9 453.7 212.3 458.6 215.6 463.4 218.8 468.2 222.1 473.0 225.3 477.7 228.5 482.4 231.6 487.0 234.7 491.6 237.8 496.1 240.9 500.6 243.9 505.0 246.9 509.3 249.8 513.6 252.7 517.8 255.5 522.0 258.4 526.1 261.1 530.0 263.8 533.9 266.5 537.7 269.0 541.4 271.5 545.0 273.9 548.5 276.3 551.9 278.6 555.3 280.9 558.6 283.1 561.9 285.3 565.1 287.5 568.2 289.6 571.2 291.6 574.1 293.6 576.9 295.5 579.7 297.3 582.3 299.1 584.9 300.8 587.3 302.5 589.7 304.1 592.0 305.6 594.3 307.1 596.4 308.6 598.5 310.0 600.5 311.4 602.4 312.7 604.3 313.9 606.1 315.1 607.8 316.3 609.4 317.4 611.0 318.5 612.5 319.5 614.0 320.5 615.4 321.5 616.8 322.4 618.1 323.3 619.4 324.1 620.6 324.9 621.8 325.7 622.9 326.5 624.0 327.2 625.1 328.0 626.1 328.7 627.1 329.3 628.1 330.0 629.0 330.6 629.9 331.3 630.8 331.9 631.7 332.4 632.5 333.0 633.3 333.5 634.1 334.1 634.8 334.6 635.6 335.1 636.3 335.6 636.9 336.0 637.6 336.4 638.2 336.9 638.8 337.3 639.4 337.6 640.0 338.0 640.5 338.4 641.0 338.7 641.5 339.0 641.9 339.3 642.3 339.6 642.7 339.9 643.1 340.2 643.5 340.4 643.9 340.7 644.2 340.9 644.6 341.1 644.9 341.3 645.2 341.5 645.5 341.7 645.7 341.9 646.0 342.1 646.2 342.2 646.4 342.4 646.7 342.6 647.0 342.8 647.3 343.0 647.6 343.2 647.9 343.4 648.2 343.6 648.5 343.8 648.7 343.9 648.9 344.1 649.1 344.2 649.3 344.4 649.5 344.5 649.7 344.6 649.9 344.8 650.1 344.9 650.4 345.1 650.6 345.2 650.7 345.3 650.9 345.4Z')">
<div style="left:0;top:2px;width:744px;height:2px;background:linear-gradient(90deg,#009900 59px,#009900 84px)"></div>
<div style="left:0;top:4px;width:744px;height:2px;background:linear-gradient(90deg,#009900 50px,#009900 94px)"></div>
<div style="left:0;top:6px;width:744px;height:2px;background:linear-gradient(90deg,#009900 44px,#009900 103px)"></div>
<div style="left:0;top:8px;width:744px;height:2px;background:linear-gradient(90deg,#009900 40px,#009900 110px)"></div>
<div style="left:0;top:10px;width:744px;height:2px;background:linear-gradient(90deg,#009900 37px,#009900 117px)"></div>
<div style="left:0;top:12px;width:744px;height:2px;background:linear-gradient(90deg,#009900 34px,#009900 122px)"></div>
<div style="left:0;top:14px;width:744px;height:2px;background:linear-gradient(90deg,#009900 32px,#009900 128px)"></div>
<div style="left:0;top:16px;width:744px;height:2px;background:linear-gradient(90deg,#009900 30px,#009900 133px)"></div>
<div style="left:0;top:18px;width:744px;height:2px;background:linear-gradient(90deg,#009901 28px,#009900 138px)"></div>
<div style="left:0;top:20px;width:744px;height:2px;background:linear-gradient(90deg,#009901 26px,#009900 143px)"></div>
<div style="left:0;top:22px;width:744px;height:2px;background:linear-gradient(90deg,#009902 24px,#009900 148px)"></div>
<div style="left:0;top:24px;width:744px;height:2px;background:linear-gradient(90deg,#009902 23px,#009900 153px)"></div>
<div style="left:0;top:26px;width:744px;height:2px;background:linear-gradient(90deg,#009903 21px,#009900 158px)"></div>
<div style="left:0;top:28px;width:744px;height:2px;background:linear-gradient(90deg,#009904 20px,#009900 48px,#009900 162px)"></div>
<div style="left:0;top:30px;width:744px;height:2px;background:linear-gradient(90deg,#009904 19px,#009900 52px,#009900 167px)"></div>
<div style="left:0;top:32px;width:744px;height:2px;background:linear-gradient(90deg,#009905 18px,#009900 55px,#009900 171px)"></div>
<div style="left:0;top:34px;width:744px;height:2px;background:linear-gradient(90deg,#009906 16px,#009900 59px,#009900 175px)"></div>
<div style="left:0;top:36px;width:744px;height:2px;background:linear-gradient(90deg,#009906 15px,#009900 63px,#009900 179px)"></div>
<div style="left:0;top:38px;width:744px;height:2px;background:linear-gradient(90deg,#009907 14px,#009900 67px,#009900 183px)"></div>
<div style="left:0;top:40px;width:744px;height:2px;background:linear-gradient(90deg,#009907 13px,#009900 70px,#009900 187px)"></div>
<div style="left:0;top:42px;width:744px;height:2px;background:linear-gradient(90deg,#009908 13px,#009900 74px,#009900 191px)"></div>
<div style="left:0;top:44px;width:744px;height:2px;background:linear-gradient(90deg,#009908 12px,#009900 78px,#009900 195px)"></div>
<div style="left:0;top:46px;width:744px;height:2px;background:linear-gradient(90deg,#009909 11px,#009900 82px,#009900 199px)"></div>
<div style="left:0;top:48px;width:744px;height:2px;background:linear-gradient(90deg,#00990a 10px,#009900 85px,#009900 203px)"></div>
<div style="left:0;top:50px;width:744px;height:2px;background:linear-gradient(90deg,#00990a 9px,#009900 89px,#009900 207px)"></div>
<div style="left:0;top:52px;width:744px;height:2px;background:linear-gradient(90deg,#00990b 9px,#009900 93px,#009900 210px)"></div>
<div style="left:0;top:54px;width:744px;height:2px;background:linear-gradient(90deg,#00990b 8px,#009900 97px,#009900 214px)"></div>
<div style="left:0;top:56px;width:744px;height:2px;background:linear-gradient(90deg,#00990c 8px,#009900 100px,#009900 218px)"></div>
<div style="left:0;top:58px;width:744px;height:2px;background:linear-gradient(90deg,#00990c 7px,#009900 104px,#009900 221px)"></div>
<div style="left:0;top:60px;width:744px;height:2px;background:linear-gradient(90deg,#00990d 6px,#009900 108px,#009900 225px)"></div>
<div style="left:0;top:62px;width:744px;height:2px;background:linear-gradient(90deg,#00990e 6px,#009900 112px,#009900 228px)"></div>
<div style="left:0;top:64px;width:744px;height:2px;background:linear-gradient(90deg,#00990e 6px,#009900 115px,#009900 232px)"></div>
<div style="left:0;top:66px;width:744px;height:2px;background:linear-gradient(90deg,#00990f 5px,#009900 119px,#009900 235px)"></div>
<div style="left:0;top:68px;width:744px;height:2px;background:linear-gradient(90deg,#00990f 5px,#009900 123px,#009900 239px)"></div>
<div style="left:0;top:70px;width:744px;height:2px;background:linear-gradient(90deg,#009910 4px,#009900 126px,#009900 242px)"></div>
<div style="left:0;top:72px;width:744px;height:2px;background:linear-gradient(90deg,#009910 4px,#009900 130px,#009900 245px)"></div>
<div style="left:0;top:74px;width:744px;height:2px;background:linear-gradient(90deg,#009911 4px,#009900 134px,#009900 249px)"></div>
<div style="left:0;top:76px;width:744px;height:2px;background:linear-gradient(90deg,#009912 3px,#009900 138px,#009900 252px)"></div>
<div style="left:0;top:78px;width:744px;height:2px;background:linear-gradient(90deg,#009912 3px,#009900 141px,#009900 255px)"></div>
<div style="left:0;top:80px;width:744px;height:2px;background:linear-gradient(90deg,#009913 3px,#009900 145px,#009900 259px)"></div>
<div style="left:0;top:82px;width:744px;height:2px;background:linear-gradient(90deg,#009914 2px,#009900 149px,#009900 262px)"></div>
<div style="left:0;top:84px;width:744px;height:2px;background:linear-gradient(90deg,#009914 2px,#009900 153px,#009900 265px)"></div>
<div style="left:0;top:86px;width:744px;height:2px;background:linear-gradient(90deg,#009915 2px,#009900 156px,#009900 268px)"></div>
<div style="left:0;top:88px;width:744px;height:2px;background:linear-gradient(90deg,#009915 2px,#009900 160px,#009900 271px)"></div>
<div style="left:0;top:90px;width:744px;height:2px;background:linear-gradient(90deg,#009916 1px,#009900 164px,#009900 275px)"></div>
<div style="left:0;top:92px;width:744px;height:2px;background:linear-gradient(90deg,#009917 1px,#009900 168px,#009900 278px)"></div>
<div style="left:0;top:94px;width:744px;height:2px;background:linear-gradient(90deg,#009917 1px,#009900 171px,#009900 281px)"></div>
<div style="left:0;top:96px;width:744px;height:2px;background:linear-gradient(90deg,#009918 1px,#009900 175px,#009900 284px)"></div>
<div style="left:0;top:98px;width:744px;height:2px;background:linear-gradient(90deg,#009918 1px,#009900 179px,#029900 287px)"></div>
<div style="left:0;top:100px;width:744px;height:2px;background:linear-gradient(90deg,#009919 0px,#009900 183px,#009900 283px,#059900 290px)"></div>
<div style="left:0;top:102px;width:744px;height:2px;background:linear-gradient(90deg,#00991a 0px,#009900 186px,#009900 282px,#089900 294px)"></div>
<div style="left:0;top:104px;width:744px;height:2px;background:linear-gradient(90deg,#00991a 0px,#009900 190px,#009900 281px,#0b9900 297px)"></div>
<div style="left:0;top:106px;width:744px;height:2px;background:linear-gradient(90deg,#00991b 0px,#009900 194px,#009900 281px,#0e9900 300px)"></div>
<div style="left:0;top:108px;width:744px;height:2px;background:linear-gradient(90deg,#00991c 0px,#009900 198px,#009900 280px,#119900 303px)"></div>
<div style="left:0;top:110px;width:744px;height:2px;background:linear-gradient(90deg,#00991c 0px,#009900 201px,#009900 279px,#149900 306px)"></div>
<div style="left:0;top:112px;width:744px;height:2px;background:linear-gradient(90deg,#00991d 0px,#009900 205px,#009900 278px,#179900 309px)"></div>
<div style="left:0;top:114px;width:744px;height:2px;background:linear-gradient(90deg,#00991e 0px,#009900 209px,#009900 277px,#1a9900 312px)"></div>
<div style="left:0;top:116px;width:744px;height:2px;background:linear-gradient(90deg,#00991e 0px,#009900 213px,#009900 276px,#1d9900 315px)"></div>
<div style="left:0;top:118px;width:744px;height:2px;background:linear-gradient(90deg,#00991f 0px,#009900 216px,#009900 276px,#209900 318px)"></div>
<div style="left:0;top:120px;width:744px;height:2px;background:linear-gradient(90deg,#009920 0px,#009900 220px,#009900 275px,#239900 321px)"></div>
<div style="left:0;top:122px;width:744px;height:2px;background:linear-gradient(90deg,#009920 0px,#009900 224px,#009900 274px,#279900 324px)"></div>
<div style="left:0;top:124px;width:744px;height:2px;background:linear-gradient(90deg,#009921 0px,#009900 228px,#009900 273px,#2b9900 328px)"></div>
<div style="left:0;top:126px;width:744px;height:2px;background:linear-gradient(90deg,#009922 0px,#009900 231px,#009900 272px,#2f9900 331px)"></div>
<div style="left:0;top:128px;width:744px;height:2px;background:linear-gradient(90deg,#009923 0px,#009900 235px,#009900 272px,#329900 334px)"></div>
<div style="left:0;top:130px;width:744px;height:2px;background:linear-gradient(90deg,#009923 0px,#009912 137px,#009900 239px,#009900 271px,#369900 337px)"></div>
<div style="left:0;top:132px;width:744px;height:2px;background:linear-gradient(90deg,#009924 0px,#009912 142px,#009900 243px,#009900 270px,#3a9900 340px)"></div>
<div style="left:0;top:134px;width:744px;height:2px;background:linear-gradient(90deg,#009925 0px,#009913 140px,#009900 246px,#009900 269px,#3d9900 343px)"></div>
<div style="left:0;top:136px;width:744px;height:2px;background:linear-gradient(90deg,#009925 0px,#009900 268px,#419900 346px)"></div>
<div style="left:0;top:138px;width:744px;height:2px;background:linear-gradient(90deg,#009926 0px,#009900 267px,#459900 349px)"></div>
<div style="left:0;top:140px;width:744px;height:2px;background:linear-gradient(90deg,#009927 0px,#009900 267px,#4a9900 352px)"></div>
<div style="left:0;top:142px;width:744px;height:2px;background:linear-gradient(90deg,#009928 0px,#009917 134px,#009900 266px,#4e9900 355px)"></div>
<div style="left:0;top:144px;width:744px;height:2px;background:linear-gradient(90deg,#009929 0px,#009913 165px,#009900 265px,#529900 358px)"></div>
<div style="left:0;top:146px;width:744px;height:2px;background:linear-gradient(90deg,#009929 1px,#009918 138px,#009901 264px,#2b9900 316px,#579900 361px)"></div>
<div style="left:0;top:148px;width:744px;height:2px;background:linear-gradient(90deg,#00992a 1px,#009918 143px,#009902 263px,#2c9900 316px,#5b9900 364px)"></div>
<div style="left:0;top:150px;width:744px;height:2px;background:linear-gradient(90deg,#00992b 1px,#009919 142px,#009903 262px,#2e9900 317px,#609900 367px)"></div>
<div style="left:0;top:152px;width:744px;height:2px;background:linear-gradient(90deg,#00992c 1px,#00991a 141px,#009904 262px,#309900 318px,#659900 370px)"></div>
<div style="left:0;top:154px;width:744px;height:2px;background:linear-gradient(90deg,#00992c 1px,#00991b 140px,#009905 261px,#139900 284px,#339900 320px,#6a9900 373px)"></div>
<div style="left:0;top:156px;width:744px;height:2px;background:linear-gradient(90deg,#00992d 1px,#00991c 139px,#009906 260px,#179900 288px,#379900 323px,#6f9900 376px)"></div>
<div style="left:0;top:158px;width:744px;height:2px;background:linear-gradient(90deg,#00992e 1px,#00991d 138px,#009907 259px,#299900 307px,#759900 379px)"></div>
<div style="left:0;top:160px;width:744px;height:2px;background:linear-gradient(90deg,#00992f 2px,#00991e 137px,#009908 258px,#2b9900 308px,#7a9900 382px)"></div>
<div style="left:0;top:162px;width:744px;height:2px;background:linear-gradient(90deg,#009930 2px,#00991e 143px,#009909 258px,#249900 299px,#4b9900 339px,#809900 385px)"></div>
<div style="left:0;top:164px;width:744px;height:2px;background:linear-gradient(90deg,#009931 2px,#00991e 149px,#00990a 257px,#289900 302px,#429900 329px,#859900 388px)"></div>
<div style="left:0;top:166px;width:744px;height:2px;background:linear-gradient(90deg,#009931 2px,#009921 135px,#00990b 256px,#2d9900 306px,#4f9900 340px,#8b9900 391px)"></div>
<div style="left:0;top:168px;width:744px;height:2px;background:linear-gradient(90deg,#009932 2px,#009920 148px,#00990d 255px,#329900 310px,#4a9900 334px,#929900 394px)"></div>
<div style="left:0;top:170px;width:744px;height:2px;background:linear-gradient(90deg,#009933 3px,#009923 134px,#00990e 254px,#449900 327px,#989900 397px)"></div>
<div style="left:0;top:172px;width:744px;height:2px;background:linear-gradient(90deg,#009934 3px,#009925 127px,#00990f 253px,#3b9900 317px,#679900 357px,#999900 396px,#999400 400px)"></div>
<div style="left:0;top:174px;width:744px;height:2px;background:linear-gradient(90deg,#009935 3px,#009923 147px,#009910 253px,#499900 329px,#999900 394px,#998e00 403px)"></div>
<div style="left:0;top:176px;width:744px;height:2px;background:linear-gradient(90deg,#009936 3px,#009925 140px,#009911 252px,#459901 324px,#989900 392px,#998900 405px)"></div>
<div style="left:0;top:178px;width:744px;height:2px;background:linear-gradient(90deg,#009937 3px,#009926 140px,#009912 251px,#4d9900 330px,#999900 391px,#998400 408px)"></div>
<div style="left:0;top:180px;width:744px;height:2px;background:linear-gradient(90deg,#009938 4px,#009927 140px,#009913 250px,#499902 325px,#999900 389px,#997e00 411px)"></div>
<div style="left:0;top:182px;width:744px;height:2px;background:linear-gradient(90deg,#009939 4px,#009915 249px,#469904 321px,#589900 336px,#999900 387px,#997900 414px)"></div>
<div style="left:0;top:184px;width:744px;height:2px;background:linear-gradient(90deg,#00993a 4px,#009928 147px,#009916 248px,#429907 316px,#5e9900 340px,#989900 385px,#997500 417px)"></div>
<div style="left:0;top:186px;width:744px;height:2px;background:linear-gradient(90deg,#00993b 4px,#009928 154px,#009917 248px,#499906 321px,#659900 344px,#989900 383px,#997000 420px)"></div>
<div style="left:0;top:188px;width:744px;height:2px;background:linear-gradient(90deg,#00993b 5px,#00992b 141px,#009918 247px,#469909 317px,#6a9900 347px,#999900 382px,#997c00 405px,#996c00 423px)"></div>
<div style="left:0;top:190px;width:744px;height:2px;background:linear-gradient(90deg,#00993c 5px,#009931 106px,#00991a 246px,#43990b 313px,#719900 351px,#999900 380px,#997b00 404px,#996700 426px)"></div>
<div style="left:0;top:192px;width:744px;height:2px;background:linear-gradient(90deg,#00993d 5px,#009931 114px,#00991b 245px,#49990b 317px,#799900 355px,#999900 378px,#997a00 403px,#996300 429px)"></div>
<div style="left:0;top:194px;width:744px;height:2px;background:linear-gradient(90deg,#00993f 5px,#00992e 143px,#00991c 244px,#46990d 313px,#809900 359px,#999800 377px,#997900 402px,#995f00 432px)"></div>
<div style="left:0;top:196px;width:744px;height:2px;background:linear-gradient(90deg,#00993f 6px,#009931 130px,#00991d 244px,#4b990d 316px,#999800 375px,#997800 401px,#995c00 435px)"></div>
<div style="left:0;top:198px;width:744px;height:2px;background:linear-gradient(90deg,#009941 6px,#00991f 243px,#4f990e 318px,#999900 373px,#997500 402px,#995800 438px)"></div>
<div style="left:0;top:200px;width:744px;height:2px;background:linear-gradient(90deg,#009942 6px,#009932 139px,#009920 242px,#469911 309px,#999900 371px,#997300 402px,#995500 441px)"></div>
<div style="left:0;top:202px;width:744px;height:2px;background:linear-gradient(90deg,#009943 7px,#009922 241px,#449913 306px,#999902 369px,#997200 401px,#995100 444px)"></div>
<div style="left:0;top:204px;width:744px;height:2px;background:linear-gradient(90deg,#009944 7px,#009937 120px,#009923 240px,#429915 303px,#999803 368px,#997100 400px,#994e00 447px)"></div>
<div style="left:0;top:206px;width:744px;height:2px;background:linear-gradient(90deg,#009945 7px,#009925 239px,#4c9915 310px,#999905 366px,#997000 399px,#994b00 450px)"></div>
<div style="left:0;top:208px;width:744px;height:2px;background:linear-gradient(90deg,#009946 8px,#009926 239px,#459918 303px,#999907 364px,#996f00 398px,#994800 453px)"></div>
<div style="left:0;top:210px;width:744px;height:2px;background:linear-gradient(90deg,#009947 8px,#009939 132px,#009927 238px,#43991a 300px,#999909 362px,#996e00 397px,#995800 424px,#994500 456px)"></div>
<div style="left:0;top:212px;width:744px;height:2px;background:linear-gradient(90deg,#009948 8px,#00993a 134px,#009929 237px,#41991c 297px,#99980b 361px,#997e04 380px,#996500 405px,#994300 459px)"></div>
<div style="left:0;top:214px;width:744px;height:2px;background:linear-gradient(90deg,#009949 9px,#00993b 136px,#00992a 236px,#45991d 299px,#99980d 359px,#997e05 378px,#996400 404px,#994000 462px)"></div>
<div style="left:0;top:216px;width:744px;height:2px;background:linear-gradient(90deg,#00994a 9px,#00993f 116px,#00992c 235px,#4d991d 304px,#99990f 357px,#997e07 376px,#996300 403px,#993d00 465px)"></div>
<div style="left:0;top:218px;width:744px;height:2px;background:linear-gradient(90deg,#00994c 9px,#00992e 234px,#479920 298px,#999911 355px,#997506 382px,#995e00 407px,#993b00 468px)"></div>
<div style="left:0;top:220px;width:744px;height:2px;background:linear-gradient(90deg,#00994d 10px,#00992f 234px,#4a9921 299px,#999913 353px,#997d0a 373px,#996202 400px,#994c00 431px,#993900 471px)"></div>
<div style="left:0;top:222px;width:744px;height:2px;background:linear-gradient(90deg,#00994e 10px,#009931 233px,#449924 293px,#999815 352px,#997c0c 372px,#996103 399px,#994a00 432px,#993600 474px)"></div>
<div style="left:0;top:224px;width:744px;height:2px;background:linear-gradient(90deg,#00994f 11px,#009944 119px,#009932 232px,#479926 294px,#989917 349px,#99750b 376px,#995c03 403px,#994800 433px,#993400 477px)"></div>
<div style="left:0;top:226px;width:744px;height:2px;background:linear-gradient(90deg,#009951 11px,#009934 231px,#419928 288px,#999919 348px,#99750d 374px,#995b04 402px,#994600 434px,#993200 479px)"></div>
<div style="left:0;top:228px;width:744px;height:2px;background:linear-gradient(90deg,#009952 11px,#009936 230px,#40992b 286px,#659924 313px,#99991b 346px,#99750f 372px,#995a05 401px,#994200 439px,#993000 482px)"></div>
<div style="left:0;top:230px;width:744px;height:2px;background:linear-gradient(90deg,#009953 12px,#009947 129px,#009937 230px,#4b992b 293px,#98991d 344px,#997511 370px,#995d08 395px,#994900 425px,#992e00 485px)"></div>
<div style="left:0;top:232px;width:744px;height:2px;background:linear-gradient(90deg,#009954 12px,#009949 125px,#009939 229px,#51992c 296px,#989920 342px,#997512 368px,#995306 406px,#994600 428px,#992c00 488px)"></div>
<div style="left:0;top:234px;width:744px;height:2px;background:linear-gradient(90deg,#009956 13px,#00993b 228px,#4c992e 291px,#999922 341px,#997514 366px,#995207 405px,#994200 432px,#992a00 491px)"></div>
<div style="left:0;top:236px;width:744px;height:2px;background:linear-gradient(90deg,#009957 13px,#00993d 227px,#479931 286px,#999924 339px,#997516 364px,#995409 400px,#993f00 436px,#992800 494px)"></div>
<div style="left:0;top:238px;width:744px;height:2px;background:linear-gradient(90deg,#009958 13px,#00993f 226px,#469934 284px,#999927 337px,#997518 362px,#99530a 399px,#993c00 439px,#992600 497px)"></div>
<div style="left:0;top:240px;width:744px;height:2px;background:linear-gradient(90deg,#00995a 14px,#009941 225px,#419936 279px,#989929 335px,#99751a 360px,#99520b 398px,#993900 443px,#992400 500px)"></div>
<div style="left:0;top:242px;width:744px;height:2px;background:linear-gradient(90deg,#00995b 14px,#009942 225px,#4e9937 287px,#98992c 333px,#996c18 366px,#994f0b 400px,#993600 447px,#992300 503px)"></div>
<div style="left:0;top:244px;width:744px;height:2px;background:linear-gradient(90deg,#00995d 15px,#009944 224px,#46993a 280px,#99992e 332px,#998224 346px,#996d1a 363px,#994e0d 399px,#993300 450px,#992100 506px)"></div>
<div style="left:0;top:246px;width:744px;height:2px;background:linear-gradient(90deg,#00995e 15px,#009946 223px,#45993c 278px,#999930 330px,#997520 354px,#995210 391px,#993100 454px,#991f00 509px)"></div>
<div style="left:0;top:248px;width:744px;height:2px;background:linear-gradient(90deg,#009960 15px,#009948 222px,#47993e 278px,#999933 328px,#996e1f 358px,#994f10 393px,#992e00 458px,#991e00 512px)"></div>
<div style="left:0;top:250px;width:744px;height:2px;background:linear-gradient(90deg,#009961 16px,#00994a 221px,#469941 276px,#989936 326px,#996e21 356px,#99480e 401px,#992c00 461px,#991c00 515px)"></div>
<div style="left:0;top:252px;width:744px;height:2px;background:linear-gradient(90deg,#009963 16px,#00994d 220px,#459943 274px,#989938 324px,#996f23 353px,#99470f 400px,#992900 465px,#991b00 518px)"></div>
<div style="left:0;top:254px;width:744px;height:2px;background:linear-gradient(90deg,#009964 17px,#00994f 220px,#419946 270px,#99993b 323px,#996f26 351px,#994811 396px,#993608 429px,#992700 469px,#991900 521px)"></div>
<div style="left:0;top:256px;width:744px;height:2px;background:linear-gradient(90deg,#009966 17px,#009951 219px,#4f9947 278px,#99993e 321px,#997d2f 338px,#996522 358px,#994713 395px,#993308 433px,#992500 472px,#991800 524px)"></div>
<div style="left:0;top:258px;width:744px;height:2px;background:linear-gradient(90deg,#009967 18px,#009953 218px,#4e994a 276px,#989941 319px,#998033 334px,#996726 354px,#994815 391px,#99340a 428px,#992300 476px,#991600 527px)"></div>
<div style="left:0;top:260px;width:744px;height:2px;background:linear-gradient(90deg,#009969 18px,#009955 217px,#4d994c 274px,#989943 317px,#997932 337px,#996828 351px,#994716 390px,#99310a 432px,#992100 480px,#991500 530px)"></div>
<div style="left:0;top:262px;width:744px;height:2px;background:linear-gradient(90deg,#00996b 19px,#009958 216px,#4c994f 272px,#999946 316px,#99883d 325px,#99692b 348px,#994315 394px,#99310b 429px,#991f00 483px,#991400 533px)"></div>
<div style="left:0;top:264px;width:744px;height:2px;background:linear-gradient(90deg,#00996c 19px,#00995a 216px,#4b9952 270px,#999949 314px,#99853e 325px,#996a2e 345px,#995723 364px,#994216 393px,#992b09 441px,#991d00 487px,#991200 536px)"></div>
<div style="left:0;top:266px;width:744px;height:2px;background:linear-gradient(90deg,#00996e 20px,#00995c 215px,#4a9955 268px,#99994c 312px,#99823f 325px,#996b31 342px,#995624 363px,#994117 392px,#992b0a 438px,#991d01 484px,#991100 539px)"></div>
<div style="left:0;top:268px;width:744px;height:2px;background:linear-gradient(90deg,#009970 20px,#00995f 214px,#499957 266px,#98994f 310px,#997c3e 327px,#99612d 349px,#993f18 393px,#992b0c 435px,#991d02 481px,#991000 542px)"></div>
<div style="left:0;top:270px;width:744px;height:2px;background:linear-gradient(90deg,#009972 20px,#009961 213px,#40995b 259px,#6f9957 287px,#989953 308px,#99753c 330px,#996431 344px,#993e19 392px,#99280b 440px,#991901 491px,#990f00 545px)"></div>
<div style="left:0;top:272px;width:744px;height:2px;background:linear-gradient(90deg,#009973 21px,#009964 212px,#4a995d 264px,#999956 307px,#998448 318px,#996534 341px,#995127 362px,#993d1a 391px,#99280c 437px,#991902 488px,#990d00 548px)"></div>
<div style="left:0;top:274px;width:744px;height:2px;background:linear-gradient(90deg,#009975 22px,#009966 211px,#499960 262px,#999959 305px,#998149 318px,#996637 338px,#994f28 362px,#993f1d 385px,#992008 458px,#991500 505px,#990c00 551px)"></div>
<div style="left:0;top:276px;width:744px;height:2px;background:linear-gradient(90deg,#009977 22px,#009969 211px,#439963 257px,#98995c 303px,#997e4a 318px,#99673a 335px,#99522c 356px,#993a1c 391px,#992910 428px,#991c06 471px,#991300 509px,#990b00 554px)"></div>
<div style="left:0;top:278px;width:744px;height:2px;background:linear-gradient(90deg,#009979 23px,#00996c 210px,#519965 264px,#989960 301px,#997547 322px,#995f37 340px,#994c2a 361px,#99381c 392px,#991a06 474px,#991100 513px,#990a00 556px)"></div>
<div style="left:0;top:280px;width:744px;height:2px;background:linear-gradient(90deg,#00997b 23px,#00996e 209px,#499969 258px,#979963 299px,#997b4e 316px,#99613b 336px,#994b2b 360px,#99371d 391px,#992711 427px,#991705 483px,#990900 559px)"></div>
<div style="left:0;top:282px;width:744px;height:2px;background:linear-gradient(90deg,#00997d 24px,#009971 208px,#4d996c 259px,#999967 298px,#997b51 314px,#99623e 333px,#994d2f 355px,#993a21 383px,#992713 424px,#991b09 464px,#990f00 520px,#990800 562px)"></div>
<div style="left:0;top:284px;width:744px;height:2px;background:linear-gradient(90deg,#00997f 24px,#009974 207px,#459970 253px,#99996b 296px,#998058 309px,#996443 329px,#994b30 355px,#993922 382px,#991b0b 458px,#990d00 524px,#990700 565px)"></div>
<div style="left:0;top:286px;width:744px;height:2px;background:linear-gradient(90deg,#009981 25px,#009977 206px,#499973 254px,#99986d 295px,#997855 312px,#995b3e 335px,#993823 381px,#991a0c 458px,#990c00 527px,#990600 568px)"></div>
<div style="left:0;top:288px;width:744px;height:2px;background:linear-gradient(90deg,#009983 25px,#00997a 206px,#4f9976 256px,#999871 293px,#997556 312px,#995e43 330px,#994832 354px,#993724 380px,#99180c 462px,#990b00 531px,#990500 571px)"></div>
<div style="left:0;top:290px;width:744px;height:2px;background:linear-gradient(90deg,#009985 26px,#00997d 205px,#45997a 249px,#999976 291px,#997d5f 305px,#996048 326px,#994a36 349px,#993525 381px,#992215 425px,#991308 481px,#990900 535px,#990400 574px)"></div>
<div style="left:0;top:292px;width:744px;height:2px;background:linear-gradient(90deg,#009988 26px,#009980 204px,#42997e 246px,#99997a 289px,#99755c 308px,#99614b 323px,#994534 353px,#993426 380px,#992317 419px,#99140a 473px,#990800 538px,#990300 577px)"></div>
<div style="left:0;top:294px;width:744px;height:2px;background:linear-gradient(90deg,#00998a 27px,#009984 203px,#469981 247px,#99977d 288px,#997560 306px,#995a48 327px,#994738 348px,#993327 379px,#992217 421px,#99120a 476px,#990700 542px,#990200 580px)"></div>
<div style="left:0;top:296px;width:744px;height:2px;background:linear-gradient(90deg,#00998c 27px,#009987 202px,#439985 244px,#999881 286px,#997563 304px,#995c4d 323px,#994539 348px,#993228 378px,#991e16 427px,#99110a 479px,#990600 546px,#990100 583px)"></div>
<div style="left:0;top:298px;width:744px;height:2px;background:linear-gradient(90deg,#00998e 28px,#00998a 202px,#4b9988 247px,#999886 284px,#997969 300px,#995e52 319px,#99463b 345px,#993028 379px,#991c16 430px,#99120c 471px,#990500 549px,#990000 586px)"></div>
<div style="left:0;top:300px;width:744px;height:2px;background:linear-gradient(90deg,#009991 29px,#00998e 201px,#46998c 243px,#99998b 282px,#99756a 300px,#99554c 325px,#993b34 357px,#992924 391px,#990f0b 479px,#990300 553px,#990000 589px)"></div>
<div style="left:0;top:302px;width:744px;height:2px;background:linear-gradient(90deg,#009993 29px,#009991 200px,#419990 239px,#6d9990 261px,#999990 280px,#99756e 298px,#995953 319px,#993e39 350px,#992926 388px,#991715 440px,#990d0a 487px,#990200 557px,#990000 592px)"></div>
<div style="left:0;top:304px;width:744px;height:2px;background:linear-gradient(90deg,#009996 30px,#009995 199px,#219995 220px,#4f9994 245px,#999792 279px,#997572 296px,#995b58 315px,#994340 341px,#992827 387px,#991c1a 421px,#990e0c 479px,#990100 560px,#990000 595px)"></div>
<div style="left:0;top:306px;width:744px;height:2px;background:linear-gradient(90deg,#009998 30px,#009999 198px,#429999 237px,#999898 277px,#997575 294px,#995253 321px,#994040 342px,#992829 384px,#991a1a 423px,#990b0b 487px,#990001 562px,#990000 598px)"></div>
<div style="left:0;top:308px;width:744px;height:2px;background:linear-gradient(90deg,#009799 31px,#009699 197px,#3f9599 235px,#999398 277px,#997174 295px,#995558 316px,#993e41 342px,#99292b 379px,#99191a 425px,#990a0c 487px,#990002 556px,#990000 601px)"></div>
<div style="left:0;top:310px;width:744px;height:2px;background:linear-gradient(90deg,#009599 31px,#009299 197px,#4f9199 243px,#998f98 277px,#996d75 295px,#99565c 313px,#993b40 344px,#992529 385px,#991518 434px,#99090c 488px,#990003 551px,#990000 604px)"></div>
<div style="left:0;top:312px;width:744px;height:2px;background:linear-gradient(90deg,#009299 32px,#008f99 196px,#468d99 238px,#998b99 277px,#996f7a 292px,#99565f 311px,#993b42 342px,#99242a 384px,#991418 436px,#990509 508px,#990004 546px,#990000 607px)"></div>
<div style="left:0;top:314px;width:744px;height:2px;background:linear-gradient(90deg,#009099 33px,#008b99 195px,#418999 235px,#998799 277px,#996674 296px,#994e5a 316px,#993842 343px,#99242c 381px,#991218 438px,#99060c 497px,#990005 540px,#990000 610px)"></div>
<div style="left:0;top:316px;width:744px;height:2px;background:linear-gradient(90deg,#008d99 33px,#008899 194px,#498599 239px,#998399 277px,#99687b 292px,#994f5e 313px,#993643 343px,#99242e 378px,#99131b 429px,#99040b 505px,#990000 582px,#990000 613px)"></div>
<div style="left:0;top:318px;width:744px;height:2px;background:linear-gradient(90deg,#008b99 34px,#008499 193px,#3d8299 232px,#997d97 278px,#99647a 293px,#994657 320px,#99303f 350px,#99202b 386px,#991019 438px,#99030b 507px,#990000 586px,#990000 616px)"></div>
<div style="left:0;top:320px;width:744px;height:2px;background:linear-gradient(90deg,#008899 34px,#008199 193px,#437e99 235px,#997998 278px,#996079 294px,#99485d 315px,#993344 343px,#991f2c 385px,#990f19 440px,#99020b 509px,#990000 619px)"></div>
<div style="left:0;top:322px;width:744px;height:2px;background:linear-gradient(90deg,#008699 35px,#007e99 192px,#407b99 233px,#997598 278px,#995e7b 293px,#994961 312px,#993246 341px,#991f2e 382px,#990d19 442px,#99000a 519px,#990000 622px)"></div>
<div style="left:0;top:324px;width:744px;height:2px;background:linear-gradient(90deg,#008399 36px,#007b99 191px,#4d7799 240px,#997298 278px,#995271 300px,#993c55 324px,#992a3f 352px,#991b2c 388px,#990c19 444px,#99000b 514px,#990000 625px)"></div>
<div style="left:0;top:326px;width:744px;height:2px;background:linear-gradient(90deg,#008199 36px,#007899 190px,#437499 234px,#996e99 278px,#994f70 301px,#993751 329px,#99283f 353px,#991a2d 387px,#990b19 446px,#99000c 509px,#990000 628px)"></div>
<div style="left:0;top:328px;width:744px;height:2px;background:linear-gradient(90deg,#007f99 37px,#007599 189px,#477099 236px,#996b99 278px,#994d72 300px,#993350 331px,#99192e 386px,#990c1c 437px,#99000e 503px,#990001 594px,#990000 631px)"></div>
<div style="left:0;top:330px;width:744px;height:2px;background:linear-gradient(90deg,#007d99 38px,#007299 188px,#4b6d99 238px,#996799 278px,#994c74 299px,#993454 327px,#99243f 355px,#99182f 385px,#99091a 446px,#99000f 498px,#990000 634px)"></div>
<div style="left:0;top:332px;width:744px;height:2px;background:linear-gradient(90deg,#007a99 38px,#006f99 188px,#486a99 236px,#996297 279px,#994873 300px,#993052 330px,#99223f 356px,#99152d 391px,#990a1d 437px,#990011 493px,#990004 574px,#990000 636px)"></div>
<div style="left:0;top:334px;width:744px;height:2px;background:linear-gradient(90deg,#007899 39px,#006c99 187px,#3d6799 229px,#995f98 279px,#994775 299px,#993258 324px,#992342 352px,#99122b 397px,#990012 487px,#990005 569px,#990000 639px)"></div>
<div style="left:0;top:336px;width:744px;height:2px;background:linear-gradient(90deg,#007699 40px,#006a99 186px,#3c6499 228px,#995c98 279px,#994374 300px,#992d54 329px,#991d3c 363px,#99122c 396px,#990014 482px,#990007 556px,#990000 642px)"></div>
<div style="left:0;top:338px;width:744px;height:2px;background:linear-gradient(90deg,#007499 40px,#006799 185px,#436199 232px,#995998 279px,#994276 299px,#99305c 321px,#991f42 354px,#99122f 390px,#990015 477px,#990007 559px,#990000 645px)"></div>
<div style="left:0;top:340px;width:744px;height:2px;background:linear-gradient(90deg,#007199 41px,#006499 184px,#425e99 231px,#995699 279px,#993e75 300px,#992b57 327px,#991c40 358px,#991130 389px,#990017 472px,#990007 562px,#990000 648px)"></div>
<div style="left:0;top:342px;width:744px;height:2px;background:linear-gradient(90deg,#006f99 42px,#006299 184px,#495a99 235px,#995299 279px,#99386f 305px,#992754 331px,#991a40 359px,#990f2e 395px,#990018 466px,#990007 565px,#990000 651px)"></div>
<div style="left:0;top:344px;width:744px;height:2px;background:linear-gradient(90deg,#006d99 42px,#005f99 183px,#4b5799 236px,#994f99 279px,#993a76 300px,#992859 326px,#991a43 355px,#990e2f 394px,#99001a 461px,#990009 553px,#990000 653px)"></div>
<div style="left:0;top:346px;width:744px;height:2px;background:linear-gradient(90deg,#006b99 43px,#005d99 182px,#425699 230px,#6d5199 256px,#994c99 279px,#993775 301px,#992456 330px,#991843 356px,#990d30 393px,#99001c 456px,#990013 494px,#990000 651px)"></div>
<div style="left:0;top:348px;width:744px;height:2px;background:linear-gradient(90deg,#006999 44px,#005a99 181px,#415399 229px,#994898 280px,#99387b 297px,#99255b 325px,#991846 352px,#990b30 394px,#99001e 450px,#990014 491px,#990000 645px)"></div>
<div style="left:0;top:350px;width:744px;height:2px;background:linear-gradient(90deg,#006799 44px,#005899 180px,#265499 210px,#4e4f99 237px,#994698 280px,#993276 301px,#992158 329px,#991644 356px,#990b31 393px,#990020 445px,#990012 504px,#990001 639px)"></div>
<div style="left:0;top:352px;width:744px;height:2px;background:linear-gradient(90deg,#006599 45px,#005699 179px,#245199 208px,#504c99 238px,#994398 280px,#99337c 297px,#99215c 325px,#991444 357px,#99082f 399px,#990022 440px,#990012 506px,#990002 632px)"></div>
<div style="left:0;top:354px;width:744px;height:2px;background:linear-gradient(90deg,#006399 46px,#005399 179px,#554999 241px,#994099 280px,#992c73 304px,#991e59 329px,#991447 353px,#990932 393px,#990024 434px,#990017 483px,#990003 626px)"></div>
<div style="left:0;top:356px;width:744px;height:2px;background:linear-gradient(90deg,#006199 46px,#005199 178px,#4b4899 234px,#993d99 280px,#992d7a 299px,#991e5e 324px,#991145 357px,#990833 392px,#990026 429px,#990017 485px,#990004 620px)"></div>
<div style="left:0;top:358px;width:744px;height:2px;background:linear-gradient(90deg,#005f99 47px,#004f99 177px,#3b4799 223px,#644299 250px,#993b99 280px,#992874 304px,#991a5a 329px,#991045 358px,#990734 391px,#990028 424px,#990017 487px,#990005 613px)"></div>
<div style="left:0;top:360px;width:744px;height:2px;background:linear-gradient(90deg,#005d99 48px,#004d99 176px,#474399 231px,#993899 280px,#992777 302px,#991b5f 324px,#991048 354px,#990634 392px,#99002a 419px,#990017 489px,#990006 607px)"></div>
<div style="left:0;top:362px;width:744px;height:2px;background:linear-gradient(90deg,#005b99 49px,#004b99 175px,#464199 230px,#993598 281px,#99267a 300px,#99185c 328px,#990d46 358px,#990535 391px,#99002d 413px,#99001a 477px,#990007 601px)"></div>
<div style="left:0;top:364px;width:744px;height:2px;background:linear-gradient(90deg,#005999 49px,#004999 175px,#483e99 231px,#993298 281px,#992479 301px,#991860 324px,#99063a 381px,#99002f 408px,#99001d 466px,#990008 594px)"></div>
<div style="left:0;top:366px;width:744px;height:2px;background:linear-gradient(90deg,#005799 50px,#004799 174px,#473c99 230px,#993098 281px,#99237c 299px,#99145c 329px,#99053b 380px,#990031 403px,#99001c 472px,#990009 588px)"></div>
<div style="left:0;top:368px;width:744px;height:2px;background:linear-gradient(90deg,#005599 51px,#004599 173px,#463a99 229px,#992d99 281px,#99207a 301px,#991561 324px,#99043b 381px,#990034 397px,#99001c 474px,#99000a 582px)"></div>
<div style="left:0;top:370px;width:744px;height:2px;background:linear-gradient(90deg,#005399 52px,#004399 172px,#453899 228px,#992b99 281px,#991d79 302px,#99115d 329px,#99033c 380px,#990023 448px,#99000b 575px)"></div>
<div style="left:0;top:372px;width:744px;height:2px;background:linear-gradient(90deg,#005199 53px,#004199 171px,#403799 224px,#722f99 258px,#992999 281px,#991d7c 300px,#991161 325px,#99023c 381px,#99001f 465px,#99000d 569px)"></div>
<div style="left:0;top:374px;width:744px;height:2px;background:linear-gradient(90deg,#005099 53px,#003f99 171px,#463499 228px,#992699 281px,#991a7b 301px,#990e5e 329px,#99003c 382px,#990022 455px,#99000e 563px)"></div>
<div style="left:0;top:376px;width:744px;height:2px;background:linear-gradient(90deg,#004e99 54px,#003d99 170px,#453299 227px,#992398 282px,#99197e 299px,#990e62 325px,#990141 373px,#990023 453px,#99000f 556px)"></div>
<div style="left:0;top:378px;width:744px;height:2px;background:linear-gradient(90deg,#004c99 55px,#003b99 169px,#4b2f99 231px,#992198 282px,#991881 297px,#990e67 320px,#990042 372px,#990024 451px,#990010 550px)"></div>
<div style="left:0;top:380px;width:744px;height:2px;background:linear-gradient(90deg,#004a99 56px,#003999 168px,#4a2d99 230px,#991f98 282px,#99147b 302px,#990b62 326px,#990042 373px,#990023 456px,#990012 543px)"></div>
<div style="left:0;top:382px;width:744px;height:2px;background:linear-gradient(90deg,#004899 57px,#003899 167px,#412c99 223px,#991d99 282px,#991583 296px,#990b66 322px,#990043 372px,#990028 440px,#990013 537px)"></div>
<div style="left:0;top:384px;width:744px;height:2px;background:linear-gradient(90deg,#004799 57px,#003699 166px,#3f2b99 221px,#991b99 282px,#99117d 301px,#990862 327px,#990044 371px,#990029 438px,#990014 531px)"></div>
<div style="left:0;top:386px;width:744px;height:2px;background:linear-gradient(90deg,#004599 58px,#003499 166px,#422899 223px,#991999 282px,#990f7b 303px,#990766 323px,#990045 370px,#99002a 436px,#990016 524px)"></div>
<div style="left:0;top:388px;width:744px;height:2px;background:linear-gradient(90deg,#004399 59px,#003299 165px,#452699 225px,#991799 282px,#990c79 305px,#990562 328px,#990056 344px,#990046 369px,#99002d 428px,#990017 518px)"></div>
<div style="left:0;top:390px;width:744px;height:2px;background:linear-gradient(90deg,#004199 60px,#003199 164px,#482399 227px,#991499 282px,#990c7e 301px,#990466 324px,#990047 368px,#99002a 439px,#990019 512px)"></div>
<div style="left:0;top:392px;width:744px;height:2px;background:linear-gradient(90deg,#004099 61px,#002f99 163px,#422399 222px,#991298 283px,#990a7c 303px,#99046a 320px,#990048 367px,#99002b 437px,#99001b 505px)"></div>
<div style="left:0;top:394px;width:744px;height:2px;background:linear-gradient(90deg,#003e99 62px,#002e99 162px,#452099 224px,#991098 283px,#99077a 305px,#990165 326px,#990049 366px,#990030 423px,#99001c 499px)"></div>
<div style="left:0;top:396px;width:744px;height:2px;background:linear-gradient(90deg,#003c99 63px,#002c99 162px,#4d1d99 230px,#990e98 283px,#990884 297px,#990169 322px,#99004d 360px,#990034 413px,#99001e 493px)"></div>
<div style="left:0;top:398px;width:744px;height:2px;background:linear-gradient(90deg,#003a99 64px,#002a99 161px,#471c99 225px,#990c99 283px,#99057d 303px,#990065 327px,#99004e 359px,#990033 417px,#990020 486px)"></div>
<div style="left:0;top:400px;width:744px;height:2px;background:linear-gradient(90deg,#003999 65px,#002999 160px,#401c99 219px,#6f1399 255px,#990a99 283px,#990175 311px,#990051 355px,#990036 410px,#990022 480px)"></div>
<div style="left:0;top:402px;width:744px;height:2px;background:linear-gradient(90deg,#003799 66px,#002799 159px,#491899 226px,#990999 283px,#990077 309px,#990052 354px,#990038 406px,#990023 474px)"></div>
<div style="left:0;top:404px;width:744px;height:2px;background:linear-gradient(90deg,#003599 67px,#002699 158px,#471799 224px,#990799 283px,#990080 302px,#990068 325px,#990050 358px,#990038 407px,#990026 467px)"></div>
<div style="left:0;top:406px;width:744px;height:2px;background:linear-gradient(90deg,#003499 67px,#012499 159px,#4b1599 227px,#990598 284px,#990086 297px,#99006b 322px,#990051 357px,#99003a 403px,#990027 461px)"></div>
<div style="left:0;top:408px;width:744px;height:2px;background:linear-gradient(90deg,#003299 69px,#002399 157px,#4f1299 230px,#990398 284px,#990070 317px,#990052 356px,#99003d 397px,#99002a 455px)"></div>
<div style="left:0;top:410px;width:744px;height:2px;background:linear-gradient(90deg,#003199 70px,#002199 156px,#411499 218px,#990198 284px,#99007f 303px,#99006a 324px,#990055 352px,#99003d 398px,#99002c 448px)"></div>
<div style="left:0;top:412px;width:744px;height:2px;background:linear-gradient(90deg,#002f99 71px,#002099 155px,#451199 221px,#990099 284px,#99007c 306px,#990058 348px,#990040 392px,#99002e 442px)"></div>
<div style="left:0;top:414px;width:744px;height:2px;background:linear-gradient(90deg,#002d99 72px,#001f99 154px,#4a0f99 225px,#990099 284px,#990076 312px,#99005e 340px,#990045 382px,#990031 435px)"></div>
<div style="left:0;top:416px;width:744px;height:2px;background:linear-gradient(90deg,#002c99 73px,#021d99 156px,#480e99 223px,#850099 270px,#990099 284px,#990080 303px,#99005d 342px,#990044 385px,#990033 429px)"></div>
<div style="left:0;top:418px;width:744px;height:2px;background:linear-gradient(90deg,#002a99 74px,#001c99 153px,#460c99 221px,#7e0099 265px,#990099 284px,#99007d 306px,#990061 337px,#99004c 370px,#990035 423px)"></div>
<div style="left:0;top:420px;width:744px;height:2px;background:linear-gradient(90deg,#002999 75px,#001b99 152px,#4b0a99 225px,#760099 259px,#990099 284px,#990083 301px,#990060 339px,#99004d 369px,#990038 416px)"></div>
<div style="left:0;top:422px;width:744px;height:2px;background:linear-gradient(90deg,#002799 76px,#001999 151px,#480999 222px,#6f0099 254px,#980099 284px,#990081 303px,#99005f 341px,#99003b 410px)"></div>
<div style="left:0;top:424px;width:744px;height:2px;background:linear-gradient(90deg,#002699 77px,#001899 150px,#460899 220px,#680099 248px,#980099 284px,#99007f 305px,#990066 332px,#990050 365px,#99003e 404px)"></div>
<div style="left:0;top:426px;width:744px;height:2px;background:linear-gradient(90deg,#002499 78px,#021699 152px,#4c0599 225px,#620099 243px,#990099 285px,#990085 300px,#990068 330px,#990051 364px,#990041 397px)"></div>
<div style="left:0;top:428px;width:744px;height:2px;background:linear-gradient(90deg,#002399 79px,#001699 149px,#490599 222px,#5c0099 238px,#990099 285px,#990083 302px,#99006a 328px,#990044 391px)"></div>
<div style="left:0;top:430px;width:744px;height:2px;background:linear-gradient(90deg,#002199 80px,#001499 148px,#460499 219px,#550099 232px,#990099 285px,#990081 304px,#99006c 326px,#990047 385px)"></div>
<div style="left:0;top:432px;width:744px;height:2px;background:linear-gradient(90deg,#002099 81px,#001399 147px,#430399 216px,#990099 285px,#99006e 324px,#99004b 378px)"></div>
<div style="left:0;top:434px;width:744px;height:2px;background:linear-gradient(90deg,#001e99 82px,#031199 150px,#4a0099 222px,#990099 285px,#990071 321px,#99004f 372px)"></div>
<div style="left:0;top:436px;width:744px;height:2px;background:linear-gradient(90deg,#001d99 83px,#021099 148px,#470099 219px,#980099 285px,#990074 318px,#990052 366px)"></div>
<div style="left:0;top:438px;width:744px;height:2px;background:linear-gradient(90deg,#001b99 85px,#010f99 146px,#4f0099 226px,#980099 285px,#990070 323px,#990057 359px)"></div>
<div style="left:0;top:440px;width:744px;height:2px;background:linear-gradient(90deg,#001a99 86px,#000e99 144px,#390099 205px,#4c0099 223px,#990099 286px,#990072 321px,#99005b 353px)"></div>
<div style="left:0;top:442px;width:744px;height:2px;background:linear-gradient(90deg,#001899 87px,#000d99 143px,#350099 200px,#480099 219px,#990099 286px,#990075 318px,#99005f 347px)"></div>
<div style="left:0;top:444px;width:744px;height:2px;background:linear-gradient(90deg,#001799 88px,#030b99 146px,#300099 195px,#510099 227px,#990099 286px,#990079 314px,#990064 340px)"></div>
<div style="left:0;top:446px;width:744px;height:2px;background:linear-gradient(90deg,#001599 89px,#020b99 144px,#2b0099 189px,#4e0099 224px,#990099 286px,#990069 334px)"></div>
<div style="left:0;top:448px;width:744px;height:2px;background:linear-gradient(90deg,#001499 91px,#010a99 142px,#270099 184px,#490099 219px,#990099 286px,#99006f 327px)"></div>
<div style="left:0;top:450px;width:744px;height:2px;background:linear-gradient(90deg,#001299 92px,#000999 140px,#220099 178px,#410099 211px,#980099 286px,#990074 321px)"></div>
<div style="left:0;top:452px;width:744px;height:2px;background:linear-gradient(90deg,#001199 93px,#000899 139px,#1e0099 173px,#510099 226px,#980099 286px,#99007a 315px)"></div>
<div style="left:0;top:454px;width:744px;height:2px;background:linear-gradient(90deg,#000f99 95px,#000799 138px,#1a0099 168px,#4c0099 221px,#990099 287px,#990081 308px)"></div>
<div style="left:0;top:456px;width:744px;height:2px;background:linear-gradient(90deg,#000e99 96px,#020599 140px,#150099 162px,#590099 233px,#990099 287px,#990087 302px)"></div>
<div style="left:0;top:458px;width:744px;height:2px;background:linear-gradient(90deg,#000d99 97px,#010499 138px,#110099 157px,#560099 230px,#990099 287px,#99008e 296px)"></div>
<div style="left:0;top:460px;width:744px;height:2px;background:linear-gradient(90deg,#000b99 99px,#000499 135px,#090199 147px,#510099 225px,#990097 289px)"></div>
<div style="left:0;top:462px;width:744px;height:2px;background:linear-gradient(90deg,#000a99 100px,#000399 135px,#080199 145px,#2f0099 190px,#5f0099 238px,#940099 283px)"></div>
<div style="left:0;top:464px;width:744px;height:2px;background:linear-gradient(90deg,#000899 102px,#000299 134px,#070099 143px,#360099 197px,#8c0099 277px)"></div>
<div style="left:0;top:466px;width:744px;height:2px;background:linear-gradient(90deg,#000799 103px,#020099 136px,#3d0099 204px,#840099 270px)"></div>
<div style="left:0;top:468px;width:744px;height:2px;background:linear-gradient(90deg,#000599 105px,#000099 132px,#050099 139px,#480099 215px,#7d0099 264px)"></div>
<div style="left:0;top:470px;width:744px;height:2px;background:linear-gradient(90deg,#000499 106px,#000099 131px,#040099 137px,#390099 199px,#760099 258px)"></div>
<div style="left:0;top:472px;width:744px;height:2px;background:linear-gradient(90deg,#000399 108px,#000099 131px,#330099 192px,#6e0099 251px)"></div>
<div style="left:0;top:474px;width:744px;height:2px;background:linear-gradient(90deg,#000199 110px,#000099 130px,#060099 138px,#370099 196px,#680099 245px)"></div>
<div style="left:0;top:476px;width:744px;height:2px;background:linear-gradient(90deg,#000099 112px,#020099 132px,#320099 190px,#620099 239px)"></div>
<div style="left:0;top:478px;width:744px;height:2px;background:linear-gradient(90deg,#000099 114px,#000099 128px,#080099 139px,#360099 194px,#5b0099 232px)"></div>
<div style="left:0;top:480px;width:744px;height:2px;background:linear-gradient(90deg,#000099 116px,#000099 127px,#070099 137px,#550099 226px)"></div>
<div style="left:0;top:482px;width:744px;height:2px;background:linear-gradient(90deg,#000099 118px,#000099 126px,#0d0099 144px,#4e0099 219px)"></div>
<div style="left:0;top:484px;width:744px;height:2px;background:linear-gradient(90deg,#000099 120px,#000099 126px,#130099 151px,#490099 213px)"></div>
<div style="left:0;top:486px;width:744px;height:2px;background:linear-gradient(90deg,#000099 123px,#1e0099 164px,#440099 207px)"></div>
<div style="left:0;top:488px;width:744px;height:2px;background:linear-gradient(90deg,#010099 125px,#3e0099 200px)"></div>
<div style="left:0;top:490px;width:744px;height:2px;background:linear-gradient(90deg,#040099 128px,#390099 194px)"></div>
<div style="left:0;top:492px;width:744px;height:2px;background:linear-gradient(90deg,#070099 132px,#340099 188px)"></div>
<div style="left:0;top:494px;width:744px;height:2px;background:linear-gradient(90deg,#0a0099 135px,#2e0099 181px)"></div>
<div style="left:0;top:496px;width:744px;height:2px;background:linear-gradient(90deg,#0d0099 138px,#2a0099 175px)"></div>
<div style="left:0;top:498px;width:744px;height:2px;background:linear-gradient(90deg,#100099 142px,#250099 169px)"></div>
<div style="left:0;top:500px;width:744px;height:2px;background:linear-gradient(90deg,#130099 145px,#200099 162px)"></div>
<div style="left:0;top:502px;width:744px;height:2px;background:linear-gradient(90deg,#170099 149px,#1c0099 156px)"></div>
</div>
<div style="left:1162px;top:158px;width:744px;height:504px;clip-path:path('M566.8 306.5 265.2 144.0 132.1 468.9Z')">
<div style="left:0;top:144px;width:744px;height:2px;background:linear-gradient(90deg,#00ff02 262px,#08ff00 271px)"></div>
<div style="left:0;top:146px;width:744px;height:2px;background:linear-gradient(90deg,#00ff03 261px,#0eff00 275px)"></div>
<div style="left:0;top:148px;width:744px;height:2px;background:linear-gradient(90deg,#00ff05 260px,#02ff03 265px,#15ff00 279px)"></div>
<div style="left:0;top:150px;width:744px;height:2px;background:linear-gradient(90deg,#00ff07 259px,#02ff05 264px,#1aff00 282px)"></div>
<div style="left:0;top:152px;width:744px;height:2px;background:linear-gradient(90deg,#00ff08 259px,#03ff06 264px,#21ff00 286px)"></div>
<div style="left:0;top:154px;width:744px;height:2px;background:linear-gradient(90deg,#00ff0a 258px,#00ff09 261px,#29ff00 290px)"></div>
<div style="left:0;top:156px;width:744px;height:2px;background:linear-gradient(90deg,#00ff0b 257px,#00ff0a 260px,#30ff00 294px)"></div>
<div style="left:0;top:158px;width:744px;height:2px;background:linear-gradient(90deg,#00ff0d 256px,#01ff0c 260px,#36ff00 297px)"></div>
<div style="left:0;top:160px;width:744px;height:2px;background:linear-gradient(90deg,#00ff0f 255px,#06ff0c 263px,#3eff00 301px)"></div>
<div style="left:0;top:162px;width:744px;height:2px;background:linear-gradient(90deg,#00ff11 254px,#0aff0d 265px,#46ff00 305px)"></div>
<div style="left:0;top:164px;width:744px;height:2px;background:linear-gradient(90deg,#00ff12 254px,#0eff0e 267px,#4cff00 308px)"></div>
<div style="left:0;top:166px;width:744px;height:2px;background:linear-gradient(90deg,#00ff14 253px,#0bff10 264px,#54ff00 312px)"></div>
<div style="left:0;top:168px;width:744px;height:2px;background:linear-gradient(90deg,#00ff16 252px,#01ff15 256px,#12ff10 268px,#5dff00 316px)"></div>
<div style="left:0;top:170px;width:744px;height:2px;background:linear-gradient(90deg,#00ff18 251px,#01ff17 255px,#0fff13 265px,#66ff00 320px)"></div>
<div style="left:0;top:172px;width:744px;height:2px;background:linear-gradient(90deg,#00ff1a 250px,#0cff16 262px,#6dff00 323px)"></div>
<div style="left:0;top:174px;width:744px;height:2px;background:linear-gradient(90deg,#00ff1b 250px,#02ff1a 254px,#1fff13 274px,#77ff00 327px)"></div>
<div style="left:0;top:176px;width:744px;height:2px;background:linear-gradient(90deg,#00ff1d 249px,#00ff1c 252px,#30ff11 284px,#80ff00 331px)"></div>
<div style="left:0;top:178px;width:744px;height:2px;background:linear-gradient(90deg,#00ff1f 248px,#00ff1e 251px,#2dff14 281px,#89ff00 334px)"></div>
<div style="left:0;top:180px;width:744px;height:2px;background:linear-gradient(90deg,#00ff21 247px,#01ff20 251px,#35ff14 285px,#93ff00 338px)"></div>
<div style="left:0;top:182px;width:744px;height:2px;background:linear-gradient(90deg,#00ff24 246px,#01ff22 250px,#35ff16 284px,#9eff00 342px)"></div>
<div style="left:0;top:184px;width:744px;height:2px;background:linear-gradient(90deg,#00ff26 245px,#02ff24 250px,#4bff13 296px,#a9ff00 346px)"></div>
<div style="left:0;top:186px;width:744px;height:2px;background:linear-gradient(90deg,#00ff27 245px,#02ff26 249px,#46ff17 292px,#b2ff00 349px)"></div>
<div style="left:0;top:188px;width:744px;height:2px;background:linear-gradient(90deg,#00ff29 244px,#00ff28 247px,#48ff18 292px,#8cff09 329px,#beff00 353px)"></div>
<div style="left:0;top:190px;width:744px;height:2px;background:linear-gradient(90deg,#00ff2c 243px,#00ff2b 246px,#12ff27 258px,#51ff19 296px,#83ff0d 323px,#caff00 357px)"></div>
<div style="left:0;top:192px;width:744px;height:2px;background:linear-gradient(90deg,#00ff2e 242px,#0aff2b 252px,#4cff1c 292px,#7aff12 317px,#d4ff00 360px)"></div>
<div style="left:0;top:194px;width:744px;height:2px;background:linear-gradient(90deg,#00ff30 241px,#01ff2f 245px,#0dff2c 253px,#57ff1c 297px,#a3ff0b 336px,#e1ff00 364px)"></div>
<div style="left:0;top:196px;width:744px;height:2px;background:linear-gradient(90deg,#00ff32 241px,#02ff31 245px,#20ff2a 264px,#6aff1a 306px,#b3ff0b 342px,#efff00 368px)"></div>
<div style="left:0;top:198px;width:744px;height:2px;background:linear-gradient(90deg,#00ff34 240px,#02ff33 244px,#13ff2f 255px,#63ff1e 301px,#b2ff0d 340px,#fdff00 372px)"></div>
<div style="left:0;top:200px;width:744px;height:2px;background:linear-gradient(90deg,#00ff37 239px,#00ff36 242px,#0eff33 251px,#5aff23 295px,#b1ff10 338px,#ffff00 371px,#fff500 375px)"></div>
<div style="left:0;top:202px;width:744px;height:2px;background:linear-gradient(90deg,#00ff39 238px,#00ff38 241px,#11ff34 252px,#62ff23 298px,#b0ff13 336px,#feff03 369px,#ffe800 379px)"></div>
<div style="left:0;top:204px;width:744px;height:2px;background:linear-gradient(90deg,#00ff3b 237px,#01ff3a 241px,#0cff38 248px,#59ff28 292px,#a4ff18 329px,#feff06 367px,#ffdc00 383px)"></div>
<div style="left:0;top:206px;width:744px;height:2px;background:linear-gradient(90deg,#00ff3e 236px,#01ff3d 240px,#14ff39 252px,#61ff29 295px,#a5ff1b 328px,#fdff09 365px,#ffd200 386px)"></div>
<div style="left:0;top:208px;width:744px;height:2px;background:linear-gradient(90deg,#00ff40 236px,#0aff3d 245px,#54ff2e 287px,#a4ff1e 326px,#ffff0c 364px,#ffc700 390px)"></div>
<div style="left:0;top:210px;width:744px;height:2px;background:linear-gradient(90deg,#00ff42 235px,#00ff42 238px,#1eff3c 256px,#74ff2a 302px,#aeff1f 329px,#ffff0f 362px,#ffdc06 377px,#ffbd00 394px)"></div>
<div style="left:0;top:212px;width:744px;height:2px;background:linear-gradient(90deg,#00ff45 234px,#03ff43 239px,#2cff3b 263px,#7dff2c 305px,#c9ff1d 339px,#feff12 360px,#ffd707 378px,#ffb300 398px)"></div>
<div style="left:0;top:214px;width:744px;height:2px;background:linear-gradient(90deg,#00ff48 233px,#01ff46 237px,#10ff43 246px,#69ff32 294px,#a5ff27 322px,#fffe15 359px,#ffc706 384px,#ffac00 401px)"></div>
<div style="left:0;top:216px;width:744px;height:2px;background:linear-gradient(90deg,#00ff4a 232px,#01ff49 236px,#1cff44 252px,#76ff33 299px,#b4ff27 327px,#fffe19 357px,#ffc709 382px,#ffa300 405px)"></div>
<div style="left:0;top:218px;width:744px;height:2px;background:linear-gradient(90deg,#00ff4d 232px,#04ff4b 237px,#23ff45 255px,#64ff39 289px,#b3ff2a 325px,#ffff1c 355px,#ffc70b 380px,#ff9b00 409px)"></div>
<div style="left:0;top:220px;width:744px;height:2px;background:linear-gradient(90deg,#00ff4f 231px,#02ff4e 235px,#1aff4a 249px,#71ff39 294px,#b9ff2c 326px,#feff1f 353px,#ffc70e 378px,#ff9400 412px)"></div>
<div style="left:0;top:222px;width:744px;height:2px;background:linear-gradient(90deg,#00ff52 230px,#00ff51 233px,#1aff4c 248px,#63ff3f 286px,#acff32 319px,#feff23 351px,#ffd917 367px,#ffbe0e 381px,#ff8d00 416px)"></div>
<div style="left:0;top:224px;width:744px;height:2px;background:linear-gradient(90deg,#00ff55 229px,#00ff54 232px,#18ff4f 246px,#6cff40 289px,#b7ff33 322px,#fffe26 350px,#ffe01c 362px,#ffbe11 379px,#ff9f07 399px,#ff8600 420px)"></div>
<div style="left:0;top:226px;width:744px;height:2px;background:linear-gradient(90deg,#00ff58 228px,#01ff56 232px,#0fff54 240px,#62ff45 283px,#b1ff37 318px,#ffff2a 348px,#ffd31b 366px,#ffb711 381px,#ff9807 402px,#ff7f00 424px)"></div>
<div style="left:0;top:228px;width:744px;height:2px;background:linear-gradient(90deg,#00ff5a 227px,#01ff59 231px,#16ff56 243px,#6bff47 286px,#abff3c 314px,#ffff2d 346px,#ffcf1d 366px,#ffb212 382px,#ff8f06 407px,#ff7a00 427px)"></div>
<div style="left:0;top:230px;width:744px;height:2px;background:linear-gradient(90deg,#00ff5d 227px,#04ff5c 232px,#21ff57 248px,#70ff49 287px,#a5ff40 310px,#feff31 344px,#ffda24 359px,#ffad13 383px,#ff8b07 408px,#ff7400 431px)"></div>
<div style="left:0;top:232px;width:744px;height:2px;background:linear-gradient(90deg,#00ff60 226px,#00ff5f 229px,#1fff5a 246px,#68ff4e 282px,#abff43 311px,#fffe34 343px,#ffda27 357px,#ffa513 386px,#ff8608 410px,#ff6e00 435px)"></div>
<div style="left:0;top:234px;width:744px;height:2px;background:linear-gradient(90deg,#00ff63 225px,#00ff62 228px,#10ff60 237px,#62ff52 278px,#a0ff48 305px,#fffe38 341px,#ffd82a 356px,#ffab18 380px,#ff890b 405px,#ff6900 438px)"></div>
<div style="left:0;top:236px;width:744px;height:2px;background:linear-gradient(90deg,#00ff66 224px,#00ff65 227px,#0eff63 235px,#67ff55 279px,#bdff47 315px,#ffff3c 339px,#ffd62c 355px,#ffae1c 376px,#ff830b 408px,#ff6400 442px)"></div>
<div style="left:0;top:238px;width:744px;height:2px;background:linear-gradient(90deg,#00ff69 223px,#01ff68 227px,#0aff67 232px,#63ff59 276px,#afff4d 308px,#feff40 337px,#ffd42f 354px,#ff9d18 385px,#ff7b0a 413px,#ff5f00 446px)"></div>
<div style="left:0;top:240px;width:744px;height:2px;background:linear-gradient(90deg,#00ff6c 223px,#01ff6b 226px,#17ff68 238px,#6fff5a 280px,#c0ff4e 313px,#feff44 335px,#ffd231 353px,#ffb827 366px,#ff9a1a 385px,#ff6e07 424px,#ff5a00 450px)"></div>
<div style="left:0;top:242px;width:744px;height:2px;background:linear-gradient(90deg,#00ff6f 222px,#01ff6f 225px,#13ff6c 235px,#6bff5e 277px,#aaff55 303px,#fffe48 334px,#ffd235 351px,#ff9b1d 382px,#ff760d 413px,#ff5600 453px)"></div>
<div style="left:0;top:244px;width:744px;height:2px;background:linear-gradient(90deg,#00ff73 221px,#00ff72 224px,#0fff70 232px,#67ff63 274px,#aeff58 303px,#ffff4c 332px,#ffd038 350px,#ffaf29 367px,#ff911b 387px,#ff6d0b 420px,#ff5100 457px)"></div>
<div style="left:0;top:246px;width:744px;height:2px;background:linear-gradient(90deg,#00ff76 220px,#00ff75 223px,#09ff74 228px,#6aff66 274px,#aaff5d 300px,#ffff51 330px,#ffd03b 348px,#ffaf2c 365px,#ff921f 384px,#ff680b 423px,#ff4d00 461px)"></div>
<div style="left:0;top:248px;width:744px;height:2px;background:linear-gradient(90deg,#00ff79 219px,#03ff78 224px,#5fff6b 268px,#aeff60 300px,#feff55 328px,#ffce3e 347px,#ffad2e 364px,#ff9322 381px,#ff6b0f 417px,#ff4900 464px)"></div>
<div style="left:0;top:250px;width:744px;height:2px;background:linear-gradient(90deg,#00ff7d 218px,#01ff7c 222px,#69ff6e 271px,#b5ff63 301px,#feff59 326px,#ffd545 342px,#ffb234 359px,#ff8c22 384px,#ff610d 426px,#ff4500 468px)"></div>
<div style="left:0;top:252px;width:744px;height:2px;background:linear-gradient(90deg,#00ff80 218px,#01ff7f 221px,#2fff79 244px,#6cff71 271px,#b1ff68 298px,#fffe5d 325px,#ffda4b 338px,#ffb237 357px,#ff8923 384px,#ff6310 421px,#ff4100 472px)"></div>
<div style="left:0;top:254px;width:744px;height:2px;background:linear-gradient(90deg,#00ff84 217px,#02ff83 221px,#16ff80 231px,#74ff74 273px,#b8ff6b 299px,#ffff62 323px,#ffcc48 342px,#ffa936 360px,#ff8a26 381px,#ff731a 401px,#ff5c0f 427px,#ff3e00 476px)"></div>
<div style="left:0;top:256px;width:744px;height:2px;background:linear-gradient(90deg,#00ff87 216px,#00ff87 219px,#1aff83 232px,#6bff79 268px,#b4ff70 296px,#ffff67 321px,#ffd350 337px,#ffae3c 355px,#ff8225 385px,#ff590f 428px,#ff3a00 479px)"></div>
<div style="left:0;top:258px;width:744px;height:2px;background:linear-gradient(90deg,#00ff8b 215px,#00ff8a 218px,#1cff87 232px,#62ff7e 263px,#adff75 292px,#fffd6a 320px,#ffd153 336px,#ffac3f 354px,#ff8429 381px,#ff5a12 424px,#ff3700 483px)"></div>
<div style="left:0;top:260px;width:744px;height:2px;background:linear-gradient(90deg,#00ff8f 214px,#03ff8e 219px,#60ff83 261px,#a9ff7a 289px,#fffe6f 318px,#ffe05f 328px,#ffb547 347px,#ff9837 364px,#ff7a26 387px,#ff5210 432px,#ff3400 487px)"></div>
<div style="left:0;top:262px;width:744px;height:2px;background:linear-gradient(90deg,#00ff93 214px,#01ff92 217px,#0dff90 223px,#57ff88 256px,#a2ff80 285px,#fffe75 316px,#ffd65e 330px,#ffb34a 346px,#ff7d2b 382px,#ff5212 429px,#ff3100 490px)"></div>
<div style="left:0;top:264px;width:744px;height:2px;background:linear-gradient(90deg,#00ff96 213px,#01ff96 216px,#20ff92 231px,#73ff89 266px,#a9ff83 286px,#ffff7a 314px,#ffde67 325px,#ffaf4b 346px,#ff9039 365px,#ff792c 383px,#ff5013 429px,#ff2e00 494px)"></div>
<div style="left:0;top:266px;width:744px;height:2px;background:linear-gradient(90deg,#00ff9a 212px,#00ff9a 215px,#15ff98 225px,#6cff8e 262px,#b6ff87 289px,#fffc7e 313px,#ffcf62 329px,#ffad4e 345px,#ff913d 362px,#ff742c 385px,#ff4811 438px,#ff2a00 498px)"></div>
<div style="left:0;top:268px;width:744px;height:2px;background:linear-gradient(90deg,#00ff9f 211px,#00ff9e 214px,#17ff9c 225px,#65ff94 258px,#a9ff8d 283px,#fffd83 311px,#ffcf67 327px,#ffab51 344px,#ff9241 359px,#ff7831 379px,#ff5f22 404px,#ff4813 435px,#ff2800 502px)"></div>
<div style="left:0;top:270px;width:744px;height:2px;background:linear-gradient(90deg,#00ffa3 210px,#00ffa2 213px,#0cffa1 219px,#5eff99 254px,#9cff93 277px,#fffe89 309px,#ffc867 328px,#ffa752 344px,#ff893f 363px,#ff7432 380px,#ff5b22 406px,#ff4614 435px,#ff2500 505px)"></div>
<div style="left:0;top:272px;width:744px;height:2px;background:linear-gradient(90deg,#00ffa7 209px,#01ffa6 213px,#0effa5 219px,#69ff9d 257px,#acff97 281px,#ffff8f 307px,#ffd775 320px,#ffa555 343px,#ff8a43 360px,#ff6e31 383px,#ff4617 432px,#ff2200 509px)"></div>
<div style="left:0;top:274px;width:744px;height:2px;background:linear-gradient(90deg,#00ffab 209px,#05ffaa 214px,#5affa3 250px,#96ff9e 272px,#ffff94 305px,#ffd277 320px,#ffb060 335px,#ff974f 349px,#ff7438 375px,#ff5926 403px,#ff4116 437px,#ff2000 513px)"></div>
<div style="left:0;top:276px;width:744px;height:2px;background:linear-gradient(90deg,#00ffb0 208px,#09ffae 215px,#58ffa8 248px,#89ffa4 266px,#fffd98 304px,#ffcd78 320px,#ffaa60 336px,#ff8949 356px,#ff6f37 377px,#ff5526 405px,#ff3e16 439px,#ff1d00 516px)"></div>
<div style="left:0;top:278px;width:744px;height:2px;background:linear-gradient(90deg,#00ffb4 207px,#00ffb4 210px,#14ffb2 219px,#6effab 255px,#b4ffa6 279px,#fffd9f 302px,#ffd582 315px,#ffb86e 327px,#ff9052 349px,#ff743e 370px,#ff5629 401px,#ff3b16 441px,#ff1b00 520px)"></div>
<div style="left:0;top:280px;width:744px;height:2px;background:linear-gradient(90deg,#00ffb9 206px,#00ffb8 209px,#0dffb7 215px,#6cffb0 253px,#bcffaa 280px,#fffea5 300px,#ffd88a 312px,#ffb470 327px,#ff8e54 348px,#ff703f 371px,#ff5229 403px,#ff3c19 436px,#ff1800 524px)"></div>
<div style="left:0;top:282px;width:744px;height:2px;background:linear-gradient(90deg,#00ffbd 205px,#00ffbd 208px,#08ffbc 212px,#6affb6 251px,#aeffb1 274px,#ffffab 298px,#ffd089 313px,#ff9e64 336px,#ff6c3f 372px,#ff4f2a 404px,#ff3819 440px,#ff2409 485px,#ff1600 528px)"></div>
<div style="left:0;top:284px;width:744px;height:2px;background:linear-gradient(90deg,#00ffc2 205px,#01ffc2 208px,#11ffc1 215px,#68ffbb 249px,#a3ffb7 269px,#fffcaf 297px,#ffcb8a 313px,#ff9c67 335px,#ff774b 360px,#ff5833 390px,#ff4021 423px,#ff2c12 461px,#ff1400 531px)"></div>
<div style="left:0;top:286px;width:744px;height:2px;background:linear-gradient(90deg,#00ffc7 204px,#01ffc6 207px,#0cffc6 212px,#66ffc1 247px,#abffbd 270px,#fffdb6 295px,#ffcb90 311px,#ffa16f 330px,#ff7950 356px,#ff5a38 385px,#ff4326 415px,#ff2e16 453px,#ff1200 535px)"></div>
<div style="left:0;top:288px;width:744px;height:2px;background:linear-gradient(90deg,#00ffcc 203px,#00ffcc 206px,#07ffcb 209px,#64ffc6 245px,#a3ffc3 266px,#fffdbd 293px,#ffcb95 309px,#ff9d70 330px,#ff7752 355px,#ff5c3d 380px,#ff4127 415px,#ff2b15 456px,#ff0f00 539px)"></div>
<div style="left:0;top:290px;width:744px;height:2px;background:linear-gradient(90deg,#00ffd1 202px,#02ffd1 206px,#5fffcc 242px,#abffc9 267px,#fffec4 291px,#ffc696 309px,#ff9972 330px,#ff7453 355px,#ff563b 384px,#ff3f28 415px,#ff2d19 448px,#ff0e00 542px)"></div>
<div style="left:0;top:292px;width:744px;height:2px;background:linear-gradient(90deg,#00ffd6 201px,#04ffd6 206px,#57ffd2 238px,#b0ffcf 267px,#ffffcb 289px,#ffcea3 304px,#ffa07c 324px,#ff7659 351px,#ff573f 380px,#ff3d29 415px,#ff2a19 451px,#ff0c00 546px)"></div>
<div style="left:0;top:294px;width:744px;height:2px;background:linear-gradient(90deg,#00ffdc 200px,#06ffdb 206px,#6cffd7 244px,#b2ffd5 266px,#fffcd0 288px,#ffc6a2 305px,#ff9a7c 325px,#ff745b 350px,#ff5843 376px,#ff412e 407px,#ff2c1d 443px,#ff170a 500px,#ff0900 550px)"></div>
<div style="left:0;top:296px;width:744px;height:2px;background:linear-gradient(90deg,#00ffe1 200px,#01ffe1 203px,#0dffe0 208px,#61ffde 239px,#adffdc 263px,#fffdd7 286px,#ffc6a7 303px,#ff967d 325px,#ff725d 349px,#ff5b49 370px,#ff3e30 407px,#ff291d 446px,#ff1309 507px,#ff0800 554px)"></div>
<div style="left:0;top:298px;width:744px;height:2px;background:linear-gradient(90deg,#00ffe7 199px,#03ffe6 203px,#53ffe4 233px,#a8ffe2 260px,#fffedf 284px,#ffc6ad 301px,#ff9d88 319px,#ff7463 345px,#ff5345 376px,#ff3c31 407px,#ff231a 456px,#ff0600 557px)"></div>
<div style="left:0;top:300px;width:744px;height:2px;background:linear-gradient(90deg,#00ffec 198px,#00ffec 201px,#0fffec 207px,#75ffea 243px,#b4ffe9 262px,#ffffe7 282px,#ffe1cc 290px,#ffc6b3 299px,#ff9788 320px,#ff7265 344px,#ff544a 372px,#ff3930 409px,#ff241d 450px,#ff130d 498px,#ff0400 561px)"></div>
<div style="left:0;top:302px;width:744px;height:2px;background:linear-gradient(90deg,#00fff2 197px,#00fff2 200px,#14fff2 208px,#76fff1 242px,#b6fff0 261px,#ffffef 280px,#ffdfd0 289px,#ffbeb2 300px,#ff9187 321px,#ff7068 343px,#ff554e 368px,#ff3731 409px,#ff221e 451px,#ff110d 501px,#ff0200 565px)"></div>
<div style="left:0;top:304px;width:744px;height:2px;background:linear-gradient(90deg,#00fff8 196px,#04fff8 201px,#64fff8 235px,#b8fff7 260px,#fffcf4 279px,#ffc9c3 294px,#ff9691 316px,#ff706b 341px,#ff4e4b 373px,#ff3431 411px,#ff1e1c 457px,#ff0f0d 504px,#ff0100 568px)"></div>
<div style="left:0;top:306px;width:744px;height:2px;background:linear-gradient(90deg,#00fffe 196px,#01fffe 199px,#68fffe 235px,#a8ffff 254px,#fffdfd 277px,#ffc7c6 293px,#ffa8a8 305px,#ff9090 317px,#ff6b6b 342px,#ff4f50 369px,#ff3939 399px,#ff2222 444px,#ff0e0f 502px,#ff0000 569px)"></div>
<div style="left:0;top:308px;width:744px;height:2px;background:linear-gradient(90deg,#00faff 195px,#01f9ff 198px,#0bf9ff 202px,#60f9ff 232px,#b7f8ff 258px,#fff6fd 277px,#ffc1c7 293px,#ff979d 311px,#ff6e73 337px,#ff4f52 367px,#ff3236 407px,#ff1e21 449px,#ff0d10 501px,#ff0001 565px)"></div>
<div style="left:0;top:310px;width:744px;height:2px;background:linear-gradient(90deg,#00f4ff 194px,#01f3ff 197px,#1af3ff 207px,#74f2ff 238px,#bbf1ff 259px,#ffeffe 277px,#ffbcc8 293px,#ffa3af 303px,#ff8c96 315px,#ff6770 340px,#ff4d54 366px,#ff3238 404px,#ff1e24 445px,#ff1014 488px,#ff0003 560px)"></div>
<div style="left:0;top:312px;width:744px;height:2px;background:linear-gradient(90deg,#00eeff 193px,#00eeff 196px,#14edff 204px,#75ebff 238px,#c6e9ff 262px,#ffe8fe 277px,#ffbbcf 291px,#ffa1b2 302px,#ff8897 315px,#ff6573 339px,#ff4b56 365px,#ff323c 400px,#ff1c23 448px,#ff0b12 499px,#ff0005 555px)"></div>
<div style="left:0;top:314px;width:744px;height:2px;background:linear-gradient(90deg,#00e8ff 192px,#02e8ff 196px,#4fe6ff 225px,#a0e3ff 251px,#ffe1ff 277px,#ffaec7 294px,#ff859a 314px,#ff6172 340px,#ff4a58 364px,#ff303d 400px,#ff1c26 443px,#ff0a13 498px,#ff0007 549px)"></div>
<div style="left:0;top:316px;width:744px;height:2px;background:linear-gradient(90deg,#00e2ff 191px,#00e2ff 194px,#0be2ff 199px,#59dfff 228px,#9addff 249px,#ffd7fc 278px,#ffa9c8 294px,#ff819b 314px,#ff6177 337px,#ff485a 363px,#ff3140 396px,#ff1e2b 434px,#ff0c18 486px,#ff0008 544px)"></div>
<div style="left:0;top:318px;width:744px;height:2px;background:linear-gradient(90deg,#00ddff 191px,#08dcff 197px,#63d9ff 231px,#a1d6ff 251px,#ffd0fc 278px,#ffa4c9 294px,#ff7d9c 314px,#ff627c 334px,#ff465c 362px,#ff2f41 396px,#ff1b2a 438px,#ff0b19 485px,#ff000a 538px)"></div>
<div style="left:0;top:320px;width:744px;height:2px;background:linear-gradient(90deg,#00d7ff 190px,#01d7ff 193px,#0ad7ff 197px,#67d3ff 232px,#b2cfff 256px,#ffcafd 278px,#ff9dc7 295px,#ff7b9f 313px,#ff6180 332px,#ff445e 361px,#ff2b40 399px,#ff192a 440px,#ff0a1a 484px,#ff000c 533px)"></div>
<div style="left:0;top:322px;width:744px;height:2px;background:linear-gradient(90deg,#00d2ff 189px,#00d2ff 192px,#13d1ff 200px,#6bccff 233px,#afc9ff 255px,#ffc4fd 278px,#ff98c8 295px,#ff77a0 313px,#ff5e81 332px,#ff4360 360px,#ff2941 399px,#ff162a 442px,#ff000e 528px)"></div>
<div style="left:0;top:324px;width:744px;height:2px;background:linear-gradient(90deg,#00cdff 188px,#02cdff 192px,#5bc8ff 227px,#a9c3ff 253px,#ffbefe 278px,#ff98ce 293px,#ff6c98 318px,#ff4c70 346px,#ff3857 371px,#ff182f 433px,#ff0010 522px)"></div>
<div style="left:0;top:326px;width:744px;height:2px;background:linear-gradient(90deg,#00c8ff 187px,#00c8ff 190px,#0dc7ff 196px,#6dc1ff 233px,#b3bdff 256px,#ffb8fe 278px,#ff8dc7 296px,#ff6999 318px,#ff4d76 342px,#ff3658 371px,#ff2441 402px,#ff152e 437px,#ff0012 517px)"></div>
<div style="left:0;top:328px;width:744px;height:2px;background:linear-gradient(90deg,#00c3ff 186px,#01c3ff 190px,#1dc1ff 202px,#6ebbff 233px,#bdb6ff 259px,#ffb2ff 278px,#ff94d8 290px,#ff78b3 305px,#ff5e90 324px,#ff4671 347px,#ff2d50 382px,#ff1a38 419px,#ff0821 472px,#ff0014 512px)"></div>
<div style="left:0;top:330px;width:744px;height:2px;background:linear-gradient(90deg,#00beff 186px,#01beff 189px,#1abcff 200px,#6fb6ff 233px,#bab1ff 258px,#ffacff 278px,#ff8ed6 291px,#ff76b6 304px,#ff5a91 324px,#ff4372 347px,#ff2d55 377px,#ff1c3e 410px,#ff0e2a 450px,#ff0017 506px)"></div>
<div style="left:0;top:332px;width:744px;height:2px;background:linear-gradient(90deg,#00baff 185px,#01b9ff 188px,#10b8ff 195px,#65b1ff 229px,#b4abff 256px,#ffa4fc 279px,#ff87d4 292px,#ff72b7 304px,#ff5792 324px,#ff4073 347px,#ff2b55 378px,#ff193c 415px,#ff0b2a 452px,#ff0019 501px)"></div>
<div style="left:0;top:334px;width:744px;height:2px;background:linear-gradient(90deg,#00b5ff 184px,#00b4ff 187px,#0db3ff 193px,#66acff 229px,#aba7ff 253px,#ff9efd 279px,#ff88dd 289px,#ff6fba 303px,#ff5493 324px,#ff3e74 347px,#ff2956 378px,#ff183e 413px,#ff092a 454px,#ff001b 496px)"></div>
<div style="left:0;top:336px;width:744px;height:2px;background:linear-gradient(90deg,#00b1ff 183px,#00b0ff 186px,#08afff 190px,#5fa8ff 226px,#c19fff 260px,#ff99fd 279px,#ff7cd3 293px,#ff61ad 310px,#ff5194 324px,#ff3b75 347px,#ff2a5c 372px,#ff1a45 403px,#ff0c30 442px,#ff001e 490px)"></div>
<div style="left:0;top:338px;width:744px;height:2px;background:linear-gradient(90deg,#00acff 182px,#01abff 186px,#0caaff 191px,#68a2ff 229px,#bb9bff 258px,#ff94fe 279px,#ff76d1 294px,#ff58a4 315px,#ff4589 332px,#ff316a 358px,#ff1541 411px,#ff0020 485px)"></div>
<div style="left:0;top:340px;width:744px;height:2px;background:linear-gradient(90deg,#00a8ff 182px,#01a7ff 185px,#12a5ff 193px,#699dff 229px,#9299ff 244px,#ff8ffe 279px,#ff6bc8 298px,#ff54a5 315px,#ff438a 332px,#ff306d 356px,#ff2258 379px,#ff113f 416px,#ff0023 480px)"></div>
<div style="left:0;top:342px;width:744px;height:2px;background:linear-gradient(90deg,#00a3ff 181px,#01a3ff 184px,#21a0ff 199px,#6a98ff 229px,#9e93ff 248px,#ff89ff 279px,#ff6fd5 293px,#ff5bb5 307px,#ff499a 322px,#ff3479 346px,#ff235e 373px,#ff1649 401px,#ff0026 474px)"></div>
<div style="left:0;top:344px;width:744px;height:2px;background:linear-gradient(90deg,#009fff 180px,#009fff 183px,#119dff 191px,#6b94ff 229px,#a78dff 251px,#ff84ff 279px,#ff6edb 291px,#ff52ae 311px,#ff327a 346px,#ff205e 374px,#ff144a 401px,#ff0028 469px)"></div>
<div style="left:0;top:346px;width:744px;height:2px;background:linear-gradient(90deg,#009bff 179px,#009bff 182px,#1998ff 194px,#718eff 231px,#b387ff 255px,#ff7efc 280px,#ff62cf 296px,#ff4ead 312px,#ff3d91 329px,#ff2b73 353px,#ff1047 407px,#ff002b 464px)"></div>
<div style="left:0;top:348px;width:744px;height:2px;background:linear-gradient(90deg,#0097ff 178px,#0097ff 181px,#1494ff 191px,#4f8eff 217px,#a584ff 250px,#ff79fd 280px,#ff5ccb 298px,#ff49ac 313px,#ff2d7d 345px,#ff2066 367px,#ff124f 396px,#ff002e 458px)"></div>
<div style="left:0;top:350px;width:744px;height:2px;background:linear-gradient(90deg,#0093ff 177px,#0192ff 181px,#0992ff 185px,#5589ff 219px,#a080ff 248px,#ff74fd 280px,#ff59ce 297px,#ff46ad 313px,#ff2b7e 345px,#ff1252 393px,#ff0031 453px)"></div>
<div style="left:0;top:352px;width:744px;height:2px;background:linear-gradient(90deg,#008fff 177px,#018fff 180px,#158cff 190px,#6782ff 226px,#b179ff 254px,#ff6ffe 280px,#ff59d6 294px,#ff42ac 314px,#ff2980 344px,#ff1155 390px,#ff0035 447px)"></div>
<div style="left:0;top:354px;width:744px;height:2px;background:linear-gradient(90deg,#008cff 176px,#048aff 181px,#637fff 224px,#a976ff 251px,#ff6bfe 280px,#ff53d2 296px,#ff44b6 309px,#ff2781 344px,#ff1866 370px,#ff0e53 394px,#ff0038 442px)"></div>
<div style="left:0;top:356px;width:744px;height:2px;background:linear-gradient(90deg,#0088ff 175px,#0087ff 178px,#1a84ff 191px,#647aff 224px,#ba6fff 257px,#ff66ff 280px,#ff50d5 295px,#ff3fb3 311px,#ff2583 343px,#ff105c 383px,#ff003b 437px)"></div>
<div style="left:0;top:358px;width:744px;height:2px;background:linear-gradient(90deg,#0084ff 174px,#0084ff 177px,#267fff 196px,#7175ff 229px,#b26cff 254px,#ff62ff 280px,#ff46c8 301px,#ff37ab 316px,#ff288e 335px,#ff1161 378px,#ff003f 431px)"></div>
<div style="left:0;top:360px;width:744px;height:2px;background:linear-gradient(90deg,#0081ff 173px,#0180ff 177px,#217bff 193px,#6d71ff 227px,#b567ff 255px,#fe5dff 280px,#ff52e8 288px,#ff3fc3 304px,#ff30a5 320px,#ff238b 338px,#ff0e61 379px,#ff0042 426px)"></div>
<div style="left:0;top:362px;width:744px;height:2px;background:linear-gradient(90deg,#007dff 173px,#017cff 176px,#626fff 222px,#b863ff 256px,#fe59ff 280px,#ff46d7 295px,#ff38bb 308px,#ff1f88 341px,#ff0c61 380px,#ff0046 421px)"></div>
<div style="left:0;top:364px;width:744px;height:2px;background:linear-gradient(90deg,#007aff 172px,#0478ff 177px,#2c73ff 197px,#7169ff 228px,#bb5eff 257px,#fe55ff 280px,#ff3cca 301px,#ff2faf 315px,#ff2192 334px,#ff106e 366px,#ff004a 415px)"></div>
<div style="left:0;top:366px;width:744px;height:2px;background:linear-gradient(90deg,#0076ff 171px,#0076ff 174px,#1572ff 185px,#5d68ff 219px,#b35bff 254px,#ff50fe 281px,#ff3acf 299px,#ff2097 331px,#ff0d6d 368px,#ff004e 410px)"></div>
<div style="left:0;top:368px;width:744px;height:2px;background:linear-gradient(90deg,#0073ff 170px,#0771ff 177px,#6763ff 223px,#ae58ff 252px,#ff4cfe 281px,#ff38d2 298px,#ff2bb4 313px,#ff1d95 333px,#ff0b6d 369px,#ff0052 405px)"></div>
<div style="left:0;top:370px;width:744px;height:2px;background:linear-gradient(90deg,#0070ff 169px,#016fff 173px,#126cff 182px,#685fff 223px,#b154ff 253px,#ff48ff 281px,#ff32cc 301px,#ff1c9a 330px,#ff086c 371px,#ff0057 399px)"></div>
<div style="left:0;top:372px;width:744px;height:2px;background:linear-gradient(90deg,#006dff 168px,#016cff 172px,#1f67ff 188px,#6b5bff 224px,#b94fff 256px,#ff44ff 281px,#ff31d1 299px,#ff1b9f 327px,#ff1084 348px,#ff005b 394px)"></div>
<div style="left:0;top:374px;width:744px;height:2px;background:linear-gradient(90deg,#0069ff 168px,#0169ff 171px,#1166ff 180px,#6e57ff 225px,#af4dff 252px,#ff40ff 281px,#ff2fd6 297px,#ff24ba 311px,#ff189d 329px,#ff0a7b 357px,#ff005f 389px)"></div>
<div style="left:0;top:376px;width:744px;height:2px;background:linear-gradient(90deg,#0066ff 167px,#0065ff 170px,#1a61ff 184px,#6655ff 221px,#bc47ff 257px,#fe3cff 281px,#ff29ce 301px,#ff1bad 319px,#ff0d89 345px,#ff0065 383px)"></div>
<div style="left:0;top:378px;width:744px;height:2px;background:linear-gradient(90deg,#0063ff 166px,#0062ff 169px,#125fff 179px,#6951ff 222px,#b245ff 253px,#fe38ff 281px,#ff27d3 299px,#ff18ac 320px,#ff0883 351px,#ff006a 378px)"></div>
<div style="left:0;top:380px;width:744px;height:2px;background:linear-gradient(90deg,#0060ff 165px,#0060ff 168px,#175cff 181px,#6c4dff 223px,#a144ff 246px,#ff34fe 282px,#ff26d8 297px,#ff17b0 318px,#ff0a8d 343px,#ff006f 373px)"></div>
<div style="left:0;top:382px;width:744px;height:2px;background:linear-gradient(90deg,#005eff 164px,#015cff 168px,#115aff 177px,#644bff 219px,#b53dff 254px,#ff30fe 282px,#ff20d2 300px,#ff15b4 316px,#ff088f 342px,#ff0075 367px)"></div>
<div style="left:0;top:384px;width:744px;height:2px;background:linear-gradient(90deg,#005aff 164px,#0459ff 169px,#2154ff 185px,#6747ff 220px,#a93cff 249px,#ff2dff 282px,#ff20d9 297px,#ff11b0 319px,#ff0896 337px,#ff007a 362px)"></div>
<div style="left:0;top:386px;width:744px;height:2px;background:linear-gradient(90deg,#0058ff 163px,#0256ff 167px,#1952ff 180px,#6a44ff 221px,#b337ff 253px,#ff29ff 282px,#ff1ede 295px,#ff13be 311px,#ff089c 333px,#ff0081 356px)"></div>
<div style="left:0;top:388px;width:744px;height:2px;background:linear-gradient(90deg,#0055ff 162px,#0054ff 165px,#1e4eff 182px,#6f40ff 223px,#c231ff 259px,#ff26ff 282px,#ff19d8 298px,#ff10bd 312px,#ff07a1 330px,#ff0087 351px)"></div>
<div style="left:0;top:390px;width:744px;height:2px;background:linear-gradient(90deg,#0052ff 161px,#0051ff 164px,#184dff 178px,#613fff 216px,#aa32ff 249px,#fe22ff 282px,#ff0fc3 309px,#ff05a3 329px,#ff008e 346px)"></div>
<div style="left:0;top:392px;width:744px;height:2px;background:linear-gradient(90deg,#004fff 160px,#014eff 164px,#1b49ff 179px,#683bff 219px,#af2eff 251px,#fe1fff 282px,#ff12d7 299px,#ff0bc0 311px,#ff0096 340px)"></div>
<div style="left:0;top:394px;width:744px;height:2px;background:linear-gradient(90deg,#004dff 159px,#014cff 163px,#1e46ff 180px,#6f37ff 222px,#b429ff 253px,#fe1bff 282px,#ff0ac6 308px,#ff009d 335px)"></div>
<div style="left:0;top:396px;width:744px;height:2px;background:linear-gradient(90deg,#004aff 159px,#0249ff 163px,#2143ff 181px,#7632ff 225px,#b925ff 255px,#ff18fe 283px,#ff07c5 309px,#ff00a4 330px)"></div>
<div style="left:0;top:398px;width:744px;height:2px;background:linear-gradient(90deg,#0047ff 158px,#0046ff 161px,#243fff 182px,#7d2eff 228px,#c520ff 260px,#ff14ff 283px,#ff0bdd 297px,#ff00ad 324px)"></div>
<div style="left:0;top:400px;width:744px;height:2px;background:linear-gradient(90deg,#0045ff 157px,#0044ff 160px,#1240ff 171px,#6b2fff 219px,#b021ff 251px,#ff11ff 283px,#ff0ae4 294px,#ff00b6 319px)"></div>
<div style="left:0;top:402px;width:744px;height:2px;background:linear-gradient(90deg,#0043ff 156px,#0141ff 160px,#213bff 179px,#7a29ff 226px,#ae1eff 250px,#ff0eff 283px,#ff06de 297px,#ff00bf 314px)"></div>
<div style="left:0;top:404px;width:744px;height:2px;background:linear-gradient(90deg,#0040ff 155px,#043eff 161px,#552eff 207px,#ac1cff 249px,#fe0bff 283px,#ff00ca 308px)"></div>
<div style="left:0;top:406px;width:744px;height:2px;background:linear-gradient(90deg,#003dff 155px,#0f39ff 167px,#542bff 206px,#b318ff 252px,#fe08ff 283px,#ff00d3 303px)"></div>
<div style="left:0;top:408px;width:744px;height:2px;background:linear-gradient(90deg,#003bff 154px,#023aff 158px,#2133ff 177px,#6625ff 215px,#b115ff 251px,#fe05ff 283px,#ff00de 298px)"></div>
<div style="left:0;top:410px;width:744px;height:2px;background:linear-gradient(90deg,#0039ff 153px,#0038ff 156px,#1d32ff 174px,#6123ff 212px,#a215ff 244px,#fd02ff 283px,#ff00eb 292px)"></div>
<div style="left:0;top:412px;width:744px;height:2px;background:linear-gradient(90deg,#0036ff 152px,#0933ff 161px,#5e21ff 210px,#ab11ff 248px,#fd00ff 283px,#ff00f7 287px)"></div>
<div style="left:0;top:414px;width:744px;height:2px;background:linear-gradient(90deg,#0034ff 151px,#0133ff 155px,#1c2dff 172px,#6c1cff 217px,#b40cff 252px,#fa00ff 282px)"></div>
<div style="left:0;top:416px;width:744px;height:2px;background:linear-gradient(90deg,#0032ff 150px,#0131ff 154px,#152cff 167px,#671aff 214px,#a30dff 244px,#eb00ff 276px)"></div>
<div style="left:0;top:418px;width:744px;height:2px;background:linear-gradient(90deg,#0030ff 150px,#022eff 154px,#1b29ff 170px,#6419ff 212px,#9d0cff 241px,#df00ff 271px)"></div>
<div style="left:0;top:420px;width:744px;height:2px;background:linear-gradient(90deg,#002dff 149px,#002cff 152px,#1129ff 163px,#5619ff 204px,#ac06ff 248px,#d200ff 265px)"></div>
<div style="left:0;top:422px;width:744px;height:2px;background:linear-gradient(90deg,#002bff 148px,#002aff 151px,#0f27ff 161px,#5517ff 203px,#c700ff 260px)"></div>
<div style="left:0;top:424px;width:744px;height:2px;background:linear-gradient(90deg,#0029ff 147px,#0a26ff 157px,#4d17ff 198px,#9207ff 235px,#bc00ff 255px)"></div>
<div style="left:0;top:426px;width:744px;height:2px;background:linear-gradient(90deg,#0027ff 146px,#0126ff 150px,#4716ff 194px,#af00ff 249px)"></div>
<div style="left:0;top:428px;width:744px;height:2px;background:linear-gradient(90deg,#0025ff 146px,#0224ff 150px,#4115ff 190px,#a500ff 244px)"></div>
<div style="left:0;top:430px;width:744px;height:2px;background:linear-gradient(90deg,#0023ff 145px,#0321ff 150px,#3316ff 181px,#9c00ff 239px)"></div>
<div style="left:0;top:432px;width:744px;height:2px;background:linear-gradient(90deg,#0021ff 144px,#0020ff 147px,#3414ff 181px,#9000ff 233px)"></div>
<div style="left:0;top:434px;width:744px;height:2px;background:linear-gradient(90deg,#001fff 143px,#011eff 147px,#2d13ff 176px,#8700ff 228px)"></div>
<div style="left:0;top:436px;width:744px;height:2px;background:linear-gradient(90deg,#001dff 142px,#011cff 146px,#2313ff 169px,#7e00ff 223px)"></div>
<div style="left:0;top:438px;width:744px;height:2px;background:linear-gradient(90deg,#001bff 141px,#021aff 146px,#2411ff 169px,#7400ff 217px)"></div>
<div style="left:0;top:440px;width:744px;height:2px;background:linear-gradient(90deg,#0019ff 141px,#0218ff 145px,#250fff 169px,#6c00ff 212px)"></div>
<div style="left:0;top:442px;width:744px;height:2px;background:linear-gradient(90deg,#0017ff 140px,#0016ff 143px,#1711ff 159px,#6400ff 207px)"></div>
<div style="left:0;top:444px;width:744px;height:2px;background:linear-gradient(90deg,#0015ff 139px,#0014ff 142px,#180eff 159px,#5a00ff 201px)"></div>
<div style="left:0;top:446px;width:744px;height:2px;background:linear-gradient(90deg,#0014ff 138px,#0112ff 142px,#0f0fff 152px,#5300ff 196px)"></div>
<div style="left:0;top:448px;width:744px;height:2px;background:linear-gradient(90deg,#0012ff 137px,#0210ff 142px,#4b00ff 191px)"></div>
<div style="left:0;top:450px;width:744px;height:2px;background:linear-gradient(90deg,#0010ff 137px,#0a0cff 147px,#4300ff 185px)"></div>
<div style="left:0;top:452px;width:744px;height:2px;background:linear-gradient(90deg,#000eff 136px,#070bff 144px,#3c00ff 180px)"></div>
<div style="left:0;top:454px;width:744px;height:2px;background:linear-gradient(90deg,#000cff 135px,#000bff 138px,#3400ff 174px)"></div>
<div style="left:0;top:456px;width:744px;height:2px;background:linear-gradient(90deg,#000bff 134px,#0109ff 138px,#2d00ff 169px)"></div>
<div style="left:0;top:458px;width:744px;height:2px;background:linear-gradient(90deg,#0009ff 133px,#0207ff 138px,#2700ff 164px)"></div>
<div style="left:0;top:460px;width:744px;height:2px;background:linear-gradient(90deg,#0008ff 132px,#0206ff 137px,#1f00ff 158px)"></div>
<div style="left:0;top:462px;width:744px;height:2px;background:linear-gradient(90deg,#0006ff 132px,#1900ff 153px)"></div>
<div style="left:0;top:464px;width:744px;height:2px;background:linear-gradient(90deg,#0004ff 131px,#0003ff 134px,#1300ff 148px)"></div>
<div style="left:0;top:466px;width:744px;height:2px;background:linear-gradient(90deg,#0003ff 130px,#0c00ff 142px)"></div>
<div style="left:0;top:468px;width:744px;height:2px;background:linear-gradient(90deg,#0001ff 130px,#0600ff 137px)"></div>
</div>
<div style="left:1160.5px;top:663.5px;width:1.5px;height:6px;background:#ccc"></div>
<div style="left:1156px;top:662.5px;width:5px;height:1.5px;background:#ccc"></div>
<span class="t" style="left:1156.69px;top:672.88px;font-size:15.5px;color:#ddd;">0</span>
<span class="t" style="left:1146.38px;top:655.38px;font-size:15.5px;color:#ddd;">0</span>
<div style="left:1249.5px;top:663.5px;width:1.5px;height:6px;background:#ccc"></div>
<div style="left:1156px;top:602.5px;width:5px;height:1.5px;background:#ccc"></div>
<span class="t" style="left:1238.94px;top:672.88px;font-size:15.5px;color:#ddd;">0,1</span>
<span class="t" style="left:1133.44px;top:595.22px;font-size:15.5px;color:#ddd;">0,1</span>
<div style="left:1337.5px;top:663.5px;width:1.5px;height:6px;background:#ccc"></div>
<div style="left:1156px;top:542.5px;width:5px;height:1.5px;background:#ccc"></div>
<span class="t" style="left:1327.67px;top:672.88px;font-size:15.5px;color:#ddd;">0,2</span>
<span class="t" style="left:1133.44px;top:535.06px;font-size:15.5px;color:#ddd;">0,2</span>
<div style="left:1426.5px;top:663.5px;width:1.5px;height:6px;background:#ccc"></div>
<div style="left:1156px;top:482.5px;width:5px;height:1.5px;background:#ccc"></div>
<span class="t" style="left:1416.39px;top:672.88px;font-size:15.5px;color:#ddd;">0,3</span>
<span class="t" style="left:1133.44px;top:474.90px;font-size:15.5px;color:#ddd;">0,3</span>
<div style="left:1515.5px;top:663.5px;width:1.5px;height:6px;background:#ccc"></div>
<div style="left:1156px;top:421.5px;width:5px;height:1.5px;background:#ccc"></div>
<span class="t" style="left:1505.12px;top:672.88px;font-size:15.5px;color:#ddd;">0,4</span>
<span class="t" style="left:1133.44px;top:414.74px;font-size:15.5px;color:#ddd;">0,4</span>
<div style="left:1604.5px;top:663.5px;width:1.5px;height:6px;background:#ccc"></div>
<div style="left:1156px;top:361.5px;width:5px;height:1.5px;background:#ccc"></div>
<span class="t" style="left:1593.84px;top:672.88px;font-size:15.5px;color:#ddd;">0,5</span>
<span class="t" style="left:1133.44px;top:354.58px;font-size:15.5px;color:#ddd;">0,5</span>
<div style="left:1692.5px;top:663.5px;width:1.5px;height:6px;background:#ccc"></div>
<div style="left:1156px;top:301.5px;width:5px;height:1.5px;background:#ccc"></div>
<span class="t" style="left:1682.57px;top:672.88px;font-size:15.5px;color:#ddd;">0,6</span>
<span class="t" style="left:1133.44px;top:294.42px;font-size:15.5px;color:#ddd;">0,6</span>
<div style="left:1781.5px;top:663.5px;width:1.5px;height:6px;background:#ccc"></div>
<div style="left:1156px;top:241.5px;width:5px;height:1.5px;background:#ccc"></div>
<span class="t" style="left:1771.29px;top:672.88px;font-size:15.5px;color:#ddd;">0,7</span>
<span class="t" style="left:1133.44px;top:234.26px;font-size:15.5px;color:#ddd;">0,7</span>
<div style="left:1870.5px;top:663.5px;width:1.5px;height:6px;background:#ccc"></div>
<div style="left:1156px;top:181.5px;width:5px;height:1.5px;background:#ccc"></div>
<span class="t" style="left:1860.02px;top:672.88px;font-size:15.5px;color:#ddd;">0,8</span>
<span class="t" style="left:1133.44px;top:174.10px;font-size:15.5px;color:#ddd;">0,8</span>
<svg style="left:1160px;top:156px" width="748" height="508" viewBox="1160 156 748 508"><rect x="1431.2" y="458.1" width="15" height="14" fill="none" stroke="#000" stroke-width="2.2"/><rect x="1433.0" y="459.8" width="11.5" height="10.5" fill="none" stroke="#fff" stroke-width="1"/><rect x="1508.4" y="437.0" width="15" height="14" fill="none" stroke="#fff" stroke-width="1.5"/><rect x="1490.7" y="441.8" width="15" height="14" fill="none" stroke="#fff" stroke-width="1.5"/><rect x="1375.3" y="496.0" width="15" height="14" fill="none" stroke="#fff" stroke-width="1.5"/><rect x="1455.2" y="399.1" width="15" height="14" fill="none" stroke="#fff" stroke-width="1.5"/><rect x="1391.3" y="503.8" width="15" height="14" fill="none" stroke="#fff" stroke-width="1.5"/><rect x="1386.8" y="438.2" width="15" height="14" fill="none" stroke="#fff" stroke-width="1.5"/><rect x="1607.8" y="411.8" width="15" height="14" fill="none" stroke="#fff" stroke-width="1.5"/><rect x="1346.0" y="540.5" width="15" height="14" fill="none" stroke="#fff" stroke-width="1.5"/><rect x="1563.4" y="467.7" width="15" height="14" fill="none" stroke="#fff" stroke-width="1.5"/><rect x="1410.8" y="523.0" width="15" height="14" fill="none" stroke="#fff" stroke-width="1.5"/><rect x="1487.1" y="359.4" width="15" height="14" fill="none" stroke="#fff" stroke-width="1.5"/><rect x="1574.1" y="391.9" width="15" height="14" fill="none" stroke="#fff" stroke-width="1.5"/><rect x="1323.9" y="571.2" width="15" height="14" fill="none" stroke="#fff" stroke-width="1.5"/><rect x="1424.1" y="361.8" width="15" height="14" fill="none" stroke="#fff" stroke-width="1.5"/><rect x="1630.0" y="465.3" width="15" height="14" fill="none" stroke="#fff" stroke-width="1.5"/><rect x="1550.1" y="370.8" width="15" height="14" fill="none" stroke="#fff" stroke-width="1.5"/><rect x="1485.3" y="507.4" width="15" height="14" fill="none" stroke="#fff" stroke-width="1.5"/><rect x="1338.0" y="493.6" width="15" height="14" fill="none" stroke="#fff" stroke-width="1.5"/><rect x="1721.3" y="457.5" width="15" height="14" fill="none" stroke="#fff" stroke-width="1.5"/><rect x="1419.7" y="295.0" width="15" height="14" fill="none" stroke="#fff" stroke-width="1.5"/><rect x="1286.6" y="619.9" width="15" height="14" fill="none" stroke="#fff" stroke-width="1.5"/><rect x="1353.1" y="458.1" width="15" height="14" fill="none" stroke="#fff" stroke-width="1.5"/><rect x="1438.3" y="563.4" width="15" height="14" fill="none" stroke="#fff" stroke-width="1.5"/><rect x="1525.3" y="352.2" width="15" height="14" fill="none" stroke="#fff" stroke-width="1.5"/><ellipse cx="1413.9" cy="492.7" rx="5" ry="4.500" fill="rgb(255, 255, 255)" stroke="#000" stroke-width="1.200"/><ellipse cx="1412.1" cy="494.6" rx="5" ry="4.500" fill="rgb(230, 230, 230)" stroke="#000" stroke-width="1.200"/><ellipse cx="1411.2" cy="495.8" rx="5" ry="4.500" fill="rgb(209, 209, 209)" stroke="#000" stroke-width="1.200"/><ellipse cx="1410.3" cy="497.0" rx="5" ry="4.500" fill="rgb(186, 186, 186)" stroke="#000" stroke-width="1.200"/><ellipse cx="1409.4" cy="498.8" rx="5" ry="4.500" fill="rgb(158, 158, 158)" stroke="#000" stroke-width="1.200"/><ellipse cx="1390.8" cy="523.4" rx="5" ry="4.500" fill="rgb(0, 0, 0)" stroke="#000" stroke-width="1.200"/><ellipse cx="1492.8" cy="466.9" rx="5" ry="4.500" fill="rgb(115, 82, 68)" stroke="#000" stroke-width="1.200"/><ellipse cx="1489.3" cy="468.1" rx="5" ry="4.500" fill="rgb(196, 150, 130)" stroke="#000" stroke-width="1.200"/><ellipse cx="1348.2" cy="554.1" rx="5" ry="4.500" fill="rgb(93, 122, 160)" stroke="#000" stroke-width="1.200"/><ellipse cx="1442.3" cy="425.4" rx="5" ry="4.500" fill="rgb(90, 108, 66)" stroke="#000" stroke-width="1.200"/><ellipse cx="1362.4" cy="556.5" rx="5" ry="4.500" fill="rgb(132, 128, 176)" stroke="#000" stroke-width="1.200"/><ellipse cx="1373.1" cy="476.5" rx="5" ry="4.500" fill="rgb(100, 189, 170)" stroke="#000" stroke-width="1.200"/><ellipse cx="1657.9" cy="421.2" rx="5" ry="4.500" fill="rgb(217, 122, 50)" stroke="#000" stroke-width="1.200"/><ellipse cx="1324.3" cy="594.4" rx="5" ry="4.500" fill="rgb(76, 91, 166)" stroke="#000" stroke-width="1.200"/><ellipse cx="1586.0" cy="487.9" rx="5" ry="4.500" fill="rgb(196, 84, 98)" stroke="#000" stroke-width="1.200"/><ellipse cx="1378.4" cy="566.7" rx="5" ry="4.500" fill="rgb(94, 60, 110)" stroke="#000" stroke-width="1.200"/><ellipse cx="1493.7" cy="324.9" rx="5" ry="4.500" fill="rgb(160, 188, 78)" stroke="#000" stroke-width="1.200"/><ellipse cx="1616.2" cy="395.9" rx="5" ry="4.500" fill="rgb(228, 163, 56)" stroke="#000" stroke-width="1.200"/><ellipse cx="1311.8" cy="611.9" rx="5" ry="4.500" fill="rgb(52, 60, 150)" stroke="#000" stroke-width="1.200"/><ellipse cx="1425.4" cy="359.8" rx="5" ry="4.500" fill="rgb(70, 148, 76)" stroke="#000" stroke-width="1.200"/><ellipse cx="1654.3" cy="477.7" rx="5" ry="4.500" fill="rgb(176, 48, 58)" stroke="#000" stroke-width="1.200"/><ellipse cx="1578.0" cy="364.6" rx="5" ry="4.500" fill="rgb(238, 200, 32)" stroke="#000" stroke-width="1.200"/><ellipse cx="1461.8" cy="545.7" rx="5" ry="4.500" fill="rgb(188, 84, 150)" stroke="#000" stroke-width="1.200"/><ellipse cx="1326.0" cy="557.7" rx="5" ry="4.500" fill="rgb(0, 136, 168)" stroke="#000" stroke-width="1.200"/><ellipse cx="1735.1" cy="458.5" rx="5" ry="4.500" fill="rgb(255, 0, 0)" stroke="#000" stroke-width="1.200"/><ellipse cx="1440.5" cy="274.4" rx="5" ry="4.500" fill="rgb(0, 255, 0)" stroke="#000" stroke-width="1.200"/><ellipse cx="1295.0" cy="634.7" rx="5" ry="4.500" fill="rgb(0, 0, 255)" stroke="#000" stroke-width="1.200"/><ellipse cx="1347.3" cy="504.2" rx="5" ry="4.500" fill="rgb(0, 255, 255)" stroke="#000" stroke-width="1.200"/><ellipse cx="1399.7" cy="592.6" rx="5" ry="4.500" fill="rgb(255, 0, 255)" stroke="#000" stroke-width="1.200"/><ellipse cx="1532.8" cy="330.9" rx="5" ry="4.500" fill="rgb(255, 255, 0)" stroke="#000" stroke-width="1.200"/></svg>
<div style="left:1646px;top:160.5px;width:256px;height:195.5px;background:#2a2a2a"></div>
<div style="left:1648px;top:162.5px;width:252px;height:191.5px;background:#232323;border:1.500px solid #8c8c8c"></div>
<div style="left:1650px;top:164px;width:249px;height:189px;overflow:hidden">
<div style="left:0px;top:0px;width:249px;height:189px;clip-path:path('M-465.3 1008.7 -465.3 1008.7 -465.4 1008.7 -465.5 1008.8 -465.7 1008.8 -465.8 1008.9 -466.0 1008.9 -466.1 1008.9 -466.3 1009.0 -466.5 1009.0 -466.7 1009.0 -466.9 1009.0 -467.2 1009.1 -467.4 1009.1 -467.7 1009.1 -467.9 1009.1 -468.2 1009.1 -468.5 1009.1 -468.9 1009.1 -469.3 1009.0 -469.7 1009.0 -470.2 1008.9 -470.8 1008.8 -471.3 1008.7 -471.7 1008.5 -472.2 1008.4 -472.6 1008.2 -473.0 1008.0 -473.5 1007.7 -473.9 1007.5 -474.4 1007.2 -474.9 1007.0 -475.4 1006.7 -475.9 1006.3 -476.5 1006.0 -477.1 1005.6 -477.7 1005.2 -478.4 1004.8 -479.2 1004.3 -480.0 1003.8 -480.8 1003.3 -481.7 1002.7 -482.5 1002.1 -483.4 1001.5 -484.4 1000.8 -485.3 1000.1 -486.4 999.4 -487.4 998.7 -488.5 997.9 -489.7 997.1 -490.9 996.3 -492.2 995.4 -493.5 994.5 -495.0 993.6 -496.5 992.6 -498.1 991.5 -499.7 990.4 -501.5 989.3 -503.4 988.1 -505.3 986.8 -507.3 985.5 -509.3 984.1 -511.4 982.7 -513.6 981.2 -515.9 979.7 -518.2 978.1 -520.7 976.3 -523.3 974.5 -525.9 972.5 -528.7 970.5 -531.5 968.3 -534.5 966.0 -537.5 963.5 -540.6 960.9 -543.8 958.2 -547.0 955.4 -550.5 952.3 -554.1 948.8 -557.9 944.8 -562.0 940.4 -566.2 935.7 -570.7 930.6 -575.3 925.0 -580.2 918.9 -585.3 912.1 -590.5 904.8 -596.0 897.0 -601.6 888.7 -607.5 879.7 -613.6 869.9 -620.1 859.0 -626.7 847.3 -633.6 834.8 -640.8 821.5 -648.2 807.1 -656.0 791.7 -664.0 775.0 -672.4 757.2 -681.2 738.3 -690.3 718.3 -699.6 697.1 -709.0 674.6 -718.2 650.6 -727.5 625.1 -736.9 598.2 -746.3 570.0 -755.7 540.5 -765.0 509.8 -774.1 478.0 -783.3 444.7 -792.5 409.9 -801.6 373.9 -810.5 337.1 -818.9 299.9 -826.7 262.6 -834.0 224.9 -841.1 186.4 -847.7 147.4 -853.7 108.5 -859.0 70.1 -863.4 32.6 -867.1 -4.4 -870.1 -41.1 -872.4 -77.4 -873.8 -112.9 -874.3 -147.4 -873.7 -180.4 -872.1 -212.5 -869.6 -243.8 -866.1 -274.0 -861.7 -302.8 -856.2 -329.9 -849.7 -355.0 -842.1 -378.3 -833.3 -400.0 -823.5 -420.0 -812.9 -438.1 -801.6 -454.2 -789.7 -468.1 -777.1 -479.6 -763.7 -488.8 -749.5 -496.0 -734.8 -501.4 -719.9 -505.3 -704.8 -508.0 -689.5 -509.1 -673.7 -508.2 -657.7 -505.9 -641.4 -502.4 -625.2 -498.4 -609.0 -494.1 -592.8 -489.3 -576.5 -483.7 -560.2 -477.4 -543.9 -470.7 -527.7 -463.8 -511.8 -456.9 -496.2 -450.0 -480.7 -442.9 -465.4 -435.5 -450.2 -428.0 -435.1 -420.3 -420.1 -412.5 -405.2 -404.5 -390.5 -396.4 -375.8 -388.2 -361.2 -379.7 -346.6 -371.2 -332.1 -362.5 -317.5 -353.7 -303.0 -344.7 -288.5 -335.6 -274.0 -326.4 -259.6 -317.0 -245.2 -307.6 -230.8 -298.1 -216.5 -288.5 -202.1 -278.7 -187.8 -268.9 -173.6 -259.0 -159.3 -249.1 -145.0 -239.0 -130.7 -228.9 -116.4 -218.8 -102.1 -208.5 -87.9 -198.3 -73.6 -187.9 -59.3 -177.6 -44.9 -167.1 -30.6 -156.6 -16.3 -146.1 -2.0 -135.6 12.3 -125.0 26.6 -114.4 40.9 -103.8 55.1 -93.1 69.4 -82.4 83.6 -71.8 97.8 -61.1 112.0 -50.5 126.2 -39.8 140.4 -29.1 154.6 -18.5 168.7 -7.9 182.7 2.7 196.7 13.3 210.7 23.9 224.6 34.5 238.5 45.0 252.3 55.5 266.0 65.9 279.7 76.3 293.3 86.6 306.8 96.9 320.3 107.1 333.6 117.3 346.9 127.4 360.1 137.4 373.2 147.3 386.2 157.2 399.0 167.0 411.8 176.7 424.4 186.3 436.9 195.8 449.3 205.2 461.6 214.4 473.7 223.6 485.6 232.7 497.4 241.6 508.9 250.4 520.3 259.1 531.6 267.6 542.6 276.0 553.4 284.3 563.9 292.3 574.1 300.0 584.0 307.6 593.8 315.0 603.3 322.2 612.6 329.2 621.7 336.2 630.7 343.0 639.5 349.7 648.1 356.2 656.5 362.6 664.7 368.8 672.6 374.8 680.2 380.6 687.6 386.1 694.7 391.5 701.6 396.7 708.3 401.7 714.8 406.6 721.1 411.4 727.1 416.0 732.9 420.4 738.5 424.7 743.9 428.8 749.1 432.8 754.2 436.6 759.0 440.3 763.6 443.8 768.0 447.2 772.3 450.5 776.5 453.7 780.5 456.7 784.3 459.6 788.0 462.4 791.6 465.0 795.0 467.6 798.3 470.1 801.5 472.6 804.6 474.9 807.6 477.1 810.4 479.3 813.2 481.4 815.9 483.5 818.5 485.5 821.1 487.4 823.5 489.3 825.9 491.2 828.2 492.9 830.5 494.7 832.7 496.3 834.8 497.9 836.8 499.5 838.8 501.0 840.7 502.4 842.5 503.8 844.3 505.1 846.0 506.4 847.6 507.6 849.2 508.8 850.7 509.9 852.1 510.9 853.5 512.0 854.7 512.9 856.0 513.9 857.1 514.8 858.2 515.6 859.3 516.4 860.3 517.2 861.3 518.0 862.3 518.7 863.1 519.4 864.0 520.0 864.8 520.6 865.6 521.2 866.3 521.7 866.9 522.2 867.5 522.7 868.2 523.2 868.9 523.7 869.7 524.3 870.5 525.0 871.3 525.6 872.2 526.3 873.0 526.9 873.7 527.4 874.3 527.9 874.9 528.4 875.5 528.8 876.0 529.2 876.5 529.6 877.1 530.0 877.6 530.4 878.2 530.9 878.8 531.3 879.4 531.7 879.8 532.1 880.2 532.4Z')">
<div style="left:0;top:0px;width:249px;height:2px;background:linear-gradient(90deg,#439900 0px,#679900 90px,#939900 184px)"></div>
<div style="left:0;top:2px;width:249px;height:2px;background:linear-gradient(90deg,#439900 0px,#959900 187px)"></div>
<div style="left:0;top:4px;width:249px;height:2px;background:linear-gradient(90deg,#449900 0px,#669900 85px,#979900 190px)"></div>
<div style="left:0;top:6px;width:249px;height:2px;background:linear-gradient(90deg,#449900 0px,#6b9900 95px,#999900 192px)"></div>
<div style="left:0;top:8px;width:249px;height:2px;background:linear-gradient(90deg,#449900 0px,#999700 195px)"></div>
<div style="left:0;top:10px;width:249px;height:2px;background:linear-gradient(90deg,#459900 0px,#6e9900 99px,#999900 188px,#999500 197px)"></div>
<div style="left:0;top:12px;width:249px;height:2px;background:linear-gradient(90deg,#459900 0px,#709900 102px,#999900 186px,#999300 200px)"></div>
<div style="left:0;top:14px;width:249px;height:2px;background:linear-gradient(90deg,#469900 0px,#999900 186px,#999000 203px)"></div>
<div style="left:0;top:16px;width:249px;height:2px;background:linear-gradient(90deg,#469900 0px,#999900 184px,#998f00 205px)"></div>
<div style="left:0;top:18px;width:249px;height:2px;background:linear-gradient(90deg,#479900 0px,#999900 183px,#998d00 208px)"></div>
<div style="left:0;top:20px;width:249px;height:2px;background:linear-gradient(90deg,#479900 0px,#999900 180px,#998b00 211px)"></div>
<div style="left:0;top:22px;width:249px;height:2px;background:linear-gradient(90deg,#489901 0px,#6b9900 84px,#999900 179px,#998900 213px)"></div>
<div style="left:0;top:24px;width:249px;height:2px;background:linear-gradient(90deg,#489901 0px,#999900 178px,#998700 216px)"></div>
<div style="left:0;top:26px;width:249px;height:2px;background:linear-gradient(90deg,#499901 0px,#749900 101px,#999900 175px,#998500 219px)"></div>
<div style="left:0;top:28px;width:249px;height:2px;background:linear-gradient(90deg,#499902 0px,#999900 174px,#998400 221px)"></div>
<div style="left:0;top:30px;width:249px;height:2px;background:linear-gradient(90deg,#4a9902 0px,#6d9900 83px,#999900 172px,#998200 224px)"></div>
<div style="left:0;top:32px;width:249px;height:2px;background:linear-gradient(90deg,#4a9902 0px,#999900 171px,#998000 227px)"></div>
<div style="left:0;top:34px;width:249px;height:2px;background:linear-gradient(90deg,#4b9903 0px,#999900 169px,#997e00 229px)"></div>
<div style="left:0;top:36px;width:249px;height:2px;background:linear-gradient(90deg,#4b9903 0px,#999900 167px,#997d00 232px)"></div>
<div style="left:0;top:38px;width:249px;height:2px;background:linear-gradient(90deg,#4c9903 0px,#999900 166px,#997b00 234px)"></div>
<div style="left:0;top:40px;width:249px;height:2px;background:linear-gradient(90deg,#4c9904 0px,#5a9900 33px,#999900 164px,#997900 237px)"></div>
<div style="left:0;top:42px;width:249px;height:2px;background:linear-gradient(90deg,#4d9904 0px,#5c9900 36px,#999900 163px,#997800 240px)"></div>
<div style="left:0;top:44px;width:249px;height:2px;background:linear-gradient(90deg,#4d9904 0px,#5e9900 39px,#999900 161px,#997600 242px)"></div>
<div style="left:0;top:46px;width:249px;height:2px;background:linear-gradient(90deg,#4e9905 0px,#609900 43px,#999900 160px,#997500 245px)"></div>
<div style="left:0;top:48px;width:249px;height:2px;background:linear-gradient(90deg,#4e9905 0px,#629900 46px,#999900 158px,#997300 248px)"></div>
<div style="left:0;top:50px;width:249px;height:2px;background:linear-gradient(90deg,#4f9905 0px,#649900 49px,#999900 156px,#997200 249px)"></div>
<div style="left:0;top:52px;width:249px;height:2px;background:linear-gradient(90deg,#4f9906 0px,#679900 53px,#999900 155px,#997100 249px)"></div>
<div style="left:0;top:54px;width:249px;height:2px;background:linear-gradient(90deg,#509906 0px,#699900 56px,#999900 153px,#997100 249px)"></div>
<div style="left:0;top:56px;width:249px;height:2px;background:linear-gradient(90deg,#509906 0px,#6b9900 59px,#999900 152px,#997000 249px)"></div>
<div style="left:0;top:58px;width:249px;height:2px;background:linear-gradient(90deg,#519907 0px,#6d9900 63px,#999900 150px,#998000 203px,#997000 249px)"></div>
<div style="left:0;top:60px;width:249px;height:2px;background:linear-gradient(90deg,#519907 0px,#6f9900 66px,#999900 148px,#996f00 249px)"></div>
<div style="left:0;top:62px;width:249px;height:2px;background:linear-gradient(90deg,#529907 0px,#719900 69px,#999900 147px,#996e00 249px)"></div>
<div style="left:0;top:64px;width:249px;height:2px;background:linear-gradient(90deg,#529908 0px,#749900 73px,#999900 145px,#998000 198px,#996e00 249px)"></div>
<div style="left:0;top:66px;width:249px;height:2px;background:linear-gradient(90deg,#539908 0px,#769900 76px,#999900 144px,#998300 189px,#996d00 249px)"></div>
<div style="left:0;top:68px;width:249px;height:2px;background:linear-gradient(90deg,#539909 0px,#789900 79px,#999900 142px,#997f00 197px,#996d00 249px)"></div>
<div style="left:0;top:70px;width:249px;height:2px;background:linear-gradient(90deg,#549909 0px,#7a9900 82px,#999900 141px,#998200 188px,#996c00 249px)"></div>
<div style="left:0;top:72px;width:249px;height:2px;background:linear-gradient(90deg,#559909 0px,#7d9900 86px,#999900 139px,#998300 184px,#996b00 249px)"></div>
<div style="left:0;top:74px;width:249px;height:2px;background:linear-gradient(90deg,#55990a 0px,#7f9900 89px,#999900 137px,#998100 187px,#996b00 249px)"></div>
<div style="left:0;top:76px;width:249px;height:2px;background:linear-gradient(90deg,#56990a 0px,#829900 92px,#999900 136px,#997d00 195px,#996a00 249px)"></div>
<div style="left:0;top:78px;width:249px;height:2px;background:linear-gradient(90deg,#56990a 0px,#999900 134px,#998000 186px,#996a00 249px)"></div>
<div style="left:0;top:80px;width:249px;height:2px;background:linear-gradient(90deg,#57990b 0px,#999900 133px,#997c00 194px,#996900 249px)"></div>
<div style="left:0;top:82px;width:249px;height:2px;background:linear-gradient(90deg,#57990b 0px,#999900 131px,#997f00 185px,#996900 249px)"></div>
<div style="left:0;top:84px;width:249px;height:2px;background:linear-gradient(90deg,#58990c 0px,#999900 129px,#998000 181px,#996800 249px)"></div>
<div style="left:0;top:86px;width:249px;height:2px;background:linear-gradient(90deg,#59990c 0px,#999900 128px,#997e00 184px,#996700 249px)"></div>
<div style="left:0;top:88px;width:249px;height:2px;background:linear-gradient(90deg,#59990c 0px,#999900 126px,#998100 175px,#996700 249px)"></div>
<div style="left:0;top:90px;width:249px;height:2px;background:linear-gradient(90deg,#5a990d 0px,#999900 125px,#997f00 178px,#996600 249px)"></div>
<div style="left:0;top:92px;width:249px;height:2px;background:linear-gradient(90deg,#5a990d 0px,#999900 123px,#998000 174px,#996600 249px)"></div>
<div style="left:0;top:94px;width:249px;height:2px;background:linear-gradient(90deg,#5b990e 0px,#999901 121px,#997e00 177px,#996500 249px)"></div>
<div style="left:0;top:96px;width:249px;height:2px;background:linear-gradient(90deg,#5c990e 0px,#999901 120px,#997f00 173px,#996500 249px)"></div>
<div style="left:0;top:98px;width:249px;height:2px;background:linear-gradient(90deg,#5c990e 0px,#999902 118px,#997d00 176px,#996400 249px)"></div>
<div style="left:0;top:100px;width:249px;height:2px;background:linear-gradient(90deg,#5d990f 0px,#999902 117px,#997e00 172px,#996300 249px)"></div>
<div style="left:0;top:102px;width:249px;height:2px;background:linear-gradient(90deg,#5d990f 0px,#999903 115px,#997c00 175px,#996300 249px)"></div>
<div style="left:0;top:104px;width:249px;height:2px;background:linear-gradient(90deg,#5e9910 0px,#999903 114px,#997f00 166px,#996200 249px)"></div>
<div style="left:0;top:106px;width:249px;height:2px;background:linear-gradient(90deg,#5f9910 0px,#999904 112px,#997b00 174px,#996200 249px)"></div>
<div style="left:0;top:108px;width:249px;height:2px;background:linear-gradient(90deg,#5f9910 0px,#999905 110px,#997e00 165px,#996100 249px)"></div>
<div style="left:0;top:110px;width:249px;height:2px;background:linear-gradient(90deg,#609911 0px,#999905 109px,#997a00 173px,#996100 249px)"></div>
<div style="left:0;top:112px;width:249px;height:2px;background:linear-gradient(90deg,#619911 0px,#999906 107px,#997d00 164px,#996000 249px)"></div>
<div style="left:0;top:114px;width:249px;height:2px;background:linear-gradient(90deg,#619912 0px,#999906 106px,#997b00 167px,#995f00 249px)"></div>
<div style="left:0;top:116px;width:249px;height:2px;background:linear-gradient(90deg,#629912 0px,#999907 104px,#997c00 163px,#995f00 249px)"></div>
<div style="left:0;top:118px;width:249px;height:2px;background:linear-gradient(90deg,#629913 0px,#999908 102px,#997a00 166px,#995e00 249px)"></div>
<div style="left:0;top:120px;width:249px;height:2px;background:linear-gradient(90deg,#639913 0px,#999908 101px,#997300 182px,#995e00 249px)"></div>
<div style="left:0;top:122px;width:249px;height:2px;background:linear-gradient(90deg,#649913 0px,#999909 99px,#997901 165px,#995d00 249px)"></div>
<div style="left:0;top:124px;width:249px;height:2px;background:linear-gradient(90deg,#649914 0px,#999909 98px,#997400 176px,#995d00 249px)"></div>
<div style="left:0;top:126px;width:249px;height:2px;background:linear-gradient(90deg,#659914 0px,#99990a 96px,#997401 174px,#995c00 249px)"></div>
<div style="left:0;top:128px;width:249px;height:2px;background:linear-gradient(90deg,#669915 0px,#99990b 95px,#997301 175px,#995c00 249px)"></div>
<div style="left:0;top:130px;width:249px;height:2px;background:linear-gradient(90deg,#669915 0px,#99990b 93px,#997502 168px,#995b00 249px)"></div>
<div style="left:0;top:132px;width:249px;height:2px;background:linear-gradient(90deg,#679916 0px,#99990c 91px,#997703 161px,#995b00 249px)"></div>
<div style="left:0;top:134px;width:249px;height:2px;background:linear-gradient(90deg,#689916 0px,#99990d 90px,#997403 167px,#995a00 249px)"></div>
<div style="left:0;top:136px;width:249px;height:2px;background:linear-gradient(90deg,#689917 0px,#99990d 88px,#997604 160px,#995a00 249px)"></div>
<div style="left:0;top:138px;width:249px;height:2px;background:linear-gradient(90deg,#699917 0px,#99990e 87px,#997303 166px,#995900 249px)"></div>
<div style="left:0;top:140px;width:249px;height:2px;background:linear-gradient(90deg,#6a9918 0px,#99990f 85px,#997504 159px,#995800 249px)"></div>
<div style="left:0;top:142px;width:249px;height:2px;background:linear-gradient(90deg,#6b9918 0px,#99990f 83px,#997204 165px,#995800 249px)"></div>
<div style="left:0;top:144px;width:249px;height:2px;background:linear-gradient(90deg,#6b9918 0px,#999910 82px,#997405 158px,#995700 249px)"></div>
<div style="left:0;top:146px;width:249px;height:2px;background:linear-gradient(90deg,#6c9919 0px,#999911 80px,#997105 164px,#995700 249px)"></div>
<div style="left:0;top:148px;width:249px;height:2px;background:linear-gradient(90deg,#6d9919 0px,#999911 79px,#997306 157px,#995600 249px)"></div>
<div style="left:0;top:150px;width:249px;height:2px;background:linear-gradient(90deg,#6d991a 0px,#999912 77px,#997006 163px,#995600 249px)"></div>
<div style="left:0;top:152px;width:249px;height:2px;background:linear-gradient(90deg,#6e991a 0px,#999912 76px,#997207 156px,#995500 249px)"></div>
<div style="left:0;top:154px;width:249px;height:2px;background:linear-gradient(90deg,#6f991b 0px,#999913 74px,#997408 149px,#995500 249px)"></div>
<div style="left:0;top:156px;width:249px;height:2px;background:linear-gradient(90deg,#70991b 0px,#999914 72px,#997107 155px,#995400 249px)"></div>
<div style="left:0;top:158px;width:249px;height:2px;background:linear-gradient(90deg,#70991c 0px,#999915 71px,#997309 148px,#995400 249px)"></div>
<div style="left:0;top:160px;width:249px;height:2px;background:linear-gradient(90deg,#71991c 0px,#999915 69px,#997008 154px,#995300 249px)"></div>
<div style="left:0;top:162px;width:249px;height:2px;background:linear-gradient(90deg,#72991d 0px,#999916 68px,#997209 147px,#995300 249px)"></div>
<div style="left:0;top:164px;width:249px;height:2px;background:linear-gradient(90deg,#73991d 0px,#999917 66px,#996f09 153px,#995200 249px)"></div>
<div style="left:0;top:166px;width:249px;height:2px;background:linear-gradient(90deg,#73991e 0px,#999917 64px,#99710a 146px,#995200 249px)"></div>
<div style="left:0;top:168px;width:249px;height:2px;background:linear-gradient(90deg,#74991e 0px,#999918 63px,#99730b 139px,#995100 249px)"></div>
<div style="left:0;top:170px;width:249px;height:2px;background:linear-gradient(90deg,#75991f 0px,#999919 61px,#99700b 145px,#995100 249px)"></div>
<div style="left:0;top:172px;width:249px;height:2px;background:linear-gradient(90deg,#769920 0px,#999919 60px,#99720c 138px,#995000 249px)"></div>
<div style="left:0;top:174px;width:249px;height:2px;background:linear-gradient(90deg,#779920 0px,#99991a 58px,#996f0c 144px,#995001 249px)"></div>
<div style="left:0;top:176px;width:249px;height:2px;background:linear-gradient(90deg,#779921 0px,#99991b 57px,#996f0c 142px,#994f01 249px)"></div>
<div style="left:0;top:178px;width:249px;height:2px;background:linear-gradient(90deg,#789921 0px,#99991b 55px,#996e0c 143px,#994f01 249px)"></div>
<div style="left:0;top:180px;width:249px;height:2px;background:linear-gradient(90deg,#799922 0px,#99991c 53px,#996e0d 141px,#994e02 249px)"></div>
<div style="left:0;top:182px;width:249px;height:2px;background:linear-gradient(90deg,#7a9922 0px,#99991d 52px,#99700e 134px,#994e02 249px)"></div>
<div style="left:0;top:184px;width:249px;height:2px;background:linear-gradient(90deg,#7b9923 0px,#99991e 50px,#996d0e 140px,#994d02 249px)"></div>
<div style="left:0;top:186px;width:249px;height:2px;background:linear-gradient(90deg,#7c9923 0px,#99991e 49px,#996f0f 133px,#994d02 249px)"></div>
<div style="left:0;top:188px;width:249px;height:2px;background:linear-gradient(90deg,#7c9924 0px,#99991f 47px,#997f16 94px,#996c0f 139px,#994c03 249px)"></div>
</div>
<div style="left:0px;top:0px;width:249px;height:189px;clip-path:path('M652.9 413.9 -163.1 -80.2 -523.1 908.0Z')">
<div style="left:0;top:16px;width:249px;height:2px;background:linear-gradient(90deg,#75ff00 0px,#76ff00 1px)"></div>
<div style="left:0;top:18px;width:249px;height:2px;background:linear-gradient(90deg,#76ff00 0px,#79ff00 5px)"></div>
<div style="left:0;top:20px;width:249px;height:2px;background:linear-gradient(90deg,#77ff01 0px,#7cff00 8px)"></div>
<div style="left:0;top:22px;width:249px;height:2px;background:linear-gradient(90deg,#78ff01 0px,#7fff00 11px)"></div>
<div style="left:0;top:24px;width:249px;height:2px;background:linear-gradient(90deg,#78ff02 0px,#83ff00 15px)"></div>
<div style="left:0;top:26px;width:249px;height:2px;background:linear-gradient(90deg,#79ff02 0px,#85ff00 18px)"></div>
<div style="left:0;top:28px;width:249px;height:2px;background:linear-gradient(90deg,#7aff03 0px,#88ff00 21px)"></div>
<div style="left:0;top:30px;width:249px;height:2px;background:linear-gradient(90deg,#7bff03 0px,#8cff00 25px)"></div>
<div style="left:0;top:32px;width:249px;height:2px;background:linear-gradient(90deg,#7cff04 0px,#8fff00 28px)"></div>
<div style="left:0;top:34px;width:249px;height:2px;background:linear-gradient(90deg,#7cff04 0px,#92ff00 31px)"></div>
<div style="left:0;top:36px;width:249px;height:2px;background:linear-gradient(90deg,#7dff05 0px,#96ff00 35px)"></div>
<div style="left:0;top:38px;width:249px;height:2px;background:linear-gradient(90deg,#7eff06 0px,#99ff00 38px)"></div>
<div style="left:0;top:40px;width:249px;height:2px;background:linear-gradient(90deg,#7fff06 0px,#9cff00 41px)"></div>
<div style="left:0;top:42px;width:249px;height:2px;background:linear-gradient(90deg,#80ff07 0px,#9fff00 44px)"></div>
<div style="left:0;top:44px;width:249px;height:2px;background:linear-gradient(90deg,#81ff07 0px,#a3ff00 48px)"></div>
<div style="left:0;top:46px;width:249px;height:2px;background:linear-gradient(90deg,#81ff08 0px,#a7ff00 51px)"></div>
<div style="left:0;top:48px;width:249px;height:2px;background:linear-gradient(90deg,#82ff08 0px,#aaff00 54px)"></div>
<div style="left:0;top:50px;width:249px;height:2px;background:linear-gradient(90deg,#83ff09 0px,#aeff00 58px)"></div>
<div style="left:0;top:52px;width:249px;height:2px;background:linear-gradient(90deg,#84ff09 0px,#b1ff00 61px)"></div>
<div style="left:0;top:54px;width:249px;height:2px;background:linear-gradient(90deg,#85ff0a 0px,#b5ff00 64px)"></div>
<div style="left:0;top:56px;width:249px;height:2px;background:linear-gradient(90deg,#86ff0b 0px,#b9ff00 68px)"></div>
<div style="left:0;top:58px;width:249px;height:2px;background:linear-gradient(90deg,#87ff0b 0px,#bcff00 71px)"></div>
<div style="left:0;top:60px;width:249px;height:2px;background:linear-gradient(90deg,#88ff0c 0px,#c0ff00 74px)"></div>
<div style="left:0;top:62px;width:249px;height:2px;background:linear-gradient(90deg,#88ff0c 0px,#c3ff00 77px)"></div>
<div style="left:0;top:64px;width:249px;height:2px;background:linear-gradient(90deg,#89ff0d 0px,#c8ff00 81px)"></div>
<div style="left:0;top:66px;width:249px;height:2px;background:linear-gradient(90deg,#8aff0e 0px,#cbff00 84px)"></div>
<div style="left:0;top:68px;width:249px;height:2px;background:linear-gradient(90deg,#8bff0e 0px,#cfff00 87px)"></div>
<div style="left:0;top:70px;width:249px;height:2px;background:linear-gradient(90deg,#8cff0f 0px,#d4ff00 91px)"></div>
<div style="left:0;top:72px;width:249px;height:2px;background:linear-gradient(90deg,#8dff10 0px,#d7ff00 94px)"></div>
<div style="left:0;top:74px;width:249px;height:2px;background:linear-gradient(90deg,#8eff10 0px,#dbff00 97px)"></div>
<div style="left:0;top:76px;width:249px;height:2px;background:linear-gradient(90deg,#8fff11 0px,#e0ff00 101px)"></div>
<div style="left:0;top:78px;width:249px;height:2px;background:linear-gradient(90deg,#90ff11 0px,#e4ff00 104px)"></div>
<div style="left:0;top:80px;width:249px;height:2px;background:linear-gradient(90deg,#91ff12 0px,#e8ff00 107px)"></div>
<div style="left:0;top:82px;width:249px;height:2px;background:linear-gradient(90deg,#92ff13 0px,#ecff00 110px)"></div>
<div style="left:0;top:84px;width:249px;height:2px;background:linear-gradient(90deg,#93ff13 0px,#f1ff00 114px)"></div>
<div style="left:0;top:86px;width:249px;height:2px;background:linear-gradient(90deg,#94ff14 0px,#f5ff00 117px)"></div>
<div style="left:0;top:88px;width:249px;height:2px;background:linear-gradient(90deg,#95ff15 0px,#f9ff00 120px)"></div>
<div style="left:0;top:90px;width:249px;height:2px;background:linear-gradient(90deg,#96ff15 0px,#ccff0a 68px,#feff00 124px)"></div>
<div style="left:0;top:92px;width:249px;height:2px;background:linear-gradient(90deg,#97ff16 0px,#c9ff0b 63px,#ffff00 123px,#fffc00 127px)"></div>
<div style="left:0;top:94px;width:249px;height:2px;background:linear-gradient(90deg,#98ff17 0px,#ffff01 122px,#fff800 130px)"></div>
<div style="left:0;top:96px;width:249px;height:2px;background:linear-gradient(90deg,#99ff17 0px,#ceff0c 66px,#ffff02 120px,#fff300 134px)"></div>
<div style="left:0;top:98px;width:249px;height:2px;background:linear-gradient(90deg,#9aff18 0px,#ffff03 119px,#ffef00 137px)"></div>
<div style="left:0;top:100px;width:249px;height:2px;background:linear-gradient(90deg,#9bff19 0px,#ffff04 117px,#ffeb00 140px)"></div>
<div style="left:0;top:102px;width:249px;height:2px;background:linear-gradient(90deg,#9cff19 0px,#ffff05 116px,#ffe600 144px)"></div>
<div style="left:0;top:104px;width:249px;height:2px;background:linear-gradient(90deg,#9dff1a 0px,#ffff06 114px,#ffe300 147px)"></div>
<div style="left:0;top:106px;width:249px;height:2px;background:linear-gradient(90deg,#9eff1b 0px,#ffff07 112px,#ffdf00 150px)"></div>
<div style="left:0;top:108px;width:249px;height:2px;background:linear-gradient(90deg,#9fff1b 0px,#ffff08 111px,#ffdb00 153px)"></div>
<div style="left:0;top:110px;width:249px;height:2px;background:linear-gradient(90deg,#a0ff1c 0px,#ffff09 109px,#ffd700 157px)"></div>
<div style="left:0;top:112px;width:249px;height:2px;background:linear-gradient(90deg,#a1ff1d 0px,#ffff0a 108px,#ffd400 160px)"></div>
<div style="left:0;top:114px;width:249px;height:2px;background:linear-gradient(90deg,#a2ff1d 0px,#ffff0b 106px,#ffd100 163px)"></div>
<div style="left:0;top:116px;width:249px;height:2px;background:linear-gradient(90deg,#a3ff1e 0px,#ffff0c 104px,#ffcd00 167px)"></div>
<div style="left:0;top:118px;width:249px;height:2px;background:linear-gradient(90deg,#a4ff1f 0px,#ffff0d 103px,#ffc900 170px)"></div>
<div style="left:0;top:120px;width:249px;height:2px;background:linear-gradient(90deg,#a5ff20 0px,#ffff0e 101px,#ffc600 173px)"></div>
<div style="left:0;top:122px;width:249px;height:2px;background:linear-gradient(90deg,#a6ff20 0px,#ffff0f 100px,#ffdf07 136px,#ffc300 177px)"></div>
<div style="left:0;top:124px;width:249px;height:2px;background:linear-gradient(90deg,#a7ff21 0px,#ffff10 98px,#ffdd07 137px,#ffc000 180px)"></div>
<div style="left:0;top:126px;width:249px;height:2px;background:linear-gradient(90deg,#a8ff22 0px,#ffff11 96px,#ffde08 134px,#ffbd00 183px)"></div>
<div style="left:0;top:128px;width:249px;height:2px;background:linear-gradient(90deg,#aaff23 0px,#ffff12 95px,#ffdf09 131px,#ffba00 186px)"></div>
<div style="left:0;top:130px;width:249px;height:2px;background:linear-gradient(90deg,#abff23 0px,#ffff13 93px,#ffd909 137px,#ffb600 190px)"></div>
<div style="left:0;top:132px;width:249px;height:2px;background:linear-gradient(90deg,#acff24 0px,#ffff14 92px,#ffda0a 134px,#ffb300 193px)"></div>
<div style="left:0;top:134px;width:249px;height:2px;background:linear-gradient(90deg,#adff25 0px,#ffff15 90px,#ffd209 143px,#ffb100 196px)"></div>
<div style="left:0;top:136px;width:249px;height:2px;background:linear-gradient(90deg,#aeff26 0px,#ffff16 89px,#ffd30a 140px,#ffad00 200px)"></div>
<div style="left:0;top:138px;width:249px;height:2px;background:linear-gradient(90deg,#afff26 0px,#ffff17 87px,#ffd10a 141px,#ffab00 203px)"></div>
<div style="left:0;top:140px;width:249px;height:2px;background:linear-gradient(90deg,#b0ff27 0px,#ffff18 85px,#ffcf0b 142px,#ffa800 206px)"></div>
<div style="left:0;top:142px;width:249px;height:2px;background:linear-gradient(90deg,#b2ff28 0px,#ffff19 84px,#ffcb0a 146px,#ffa500 210px)"></div>
<div style="left:0;top:144px;width:249px;height:2px;background:linear-gradient(90deg,#b3ff29 0px,#ffff1a 82px,#ffc90b 147px,#ffa300 213px)"></div>
<div style="left:0;top:146px;width:249px;height:2px;background:linear-gradient(90deg,#b4ff2a 0px,#ffff1b 81px,#ffcc0d 141px,#ffa000 216px)"></div>
<div style="left:0;top:148px;width:249px;height:2px;background:linear-gradient(90deg,#b5ff2a 0px,#ffff1d 79px,#ffc80c 145px,#ff9e00 219px)"></div>
<div style="left:0;top:150px;width:249px;height:2px;background:linear-gradient(90deg,#b6ff2b 0px,#ffff1e 77px,#ffcb0e 139px,#ff9b00 223px)"></div>
<div style="left:0;top:152px;width:249px;height:2px;background:linear-gradient(90deg,#b8ff2c 0px,#ffff1f 76px,#ffc90e 140px,#ff9800 226px)"></div>
<div style="left:0;top:154px;width:249px;height:2px;background:linear-gradient(90deg,#b9ff2d 0px,#ffff20 74px,#ffe016 108px,#ffc30e 147px,#ff9600 229px)"></div>
<div style="left:0;top:156px;width:249px;height:2px;background:linear-gradient(90deg,#baff2e 0px,#ffff21 73px,#ffc810 138px,#ff9300 233px)"></div>
<div style="left:0;top:158px;width:249px;height:2px;background:linear-gradient(90deg,#bbff2f 0px,#ffff22 71px,#ffde18 107px,#ffc410 142px,#ff9100 236px)"></div>
<div style="left:0;top:160px;width:249px;height:2px;background:linear-gradient(90deg,#bdff2f 0px,#ffff23 70px,#ffdb18 109px,#ffbb0e 154px,#ff8f00 239px)"></div>
<div style="left:0;top:162px;width:249px;height:2px;background:linear-gradient(90deg,#beff30 0px,#ffff24 68px,#ffe11b 100px,#ffbd0f 149px,#ff8c00 243px)"></div>
<div style="left:0;top:164px;width:249px;height:2px;background:linear-gradient(90deg,#bfff31 0px,#ffff26 66px,#ffde1b 102px,#ffba0f 152px,#ff8a00 246px)"></div>
<div style="left:0;top:166px;width:249px;height:2px;background:linear-gradient(90deg,#c0ff32 0px,#ffff27 65px,#ffdb1b 104px,#ffbc11 147px,#ffa308 190px,#ff8800 249px)"></div>
<div style="left:0;top:168px;width:249px;height:2px;background:linear-gradient(90deg,#c2ff33 0px,#ffff28 63px,#ffdc1c 101px,#ffc013 139px,#ffa209 190px,#ff8700 249px)"></div>
<div style="left:0;top:170px;width:249px;height:2px;background:linear-gradient(90deg,#c3ff34 0px,#ffff29 62px,#ffd91c 103px,#ffb912 148px,#ff8600 249px)"></div>
<div style="left:0;top:172px;width:249px;height:2px;background:linear-gradient(90deg,#c4ff35 0px,#ffff2a 60px,#ffdf1f 94px,#ffbd14 140px,#ffa10a 188px,#ff8601 249px)"></div>
<div style="left:0;top:174px;width:249px;height:2px;background:linear-gradient(90deg,#c6ff35 0px,#ffff2b 58px,#ffdc1f 96px,#ffb813 146px,#ff9908 202px,#ff8501 249px)"></div>
<div style="left:0;top:176px;width:249px;height:2px;background:linear-gradient(90deg,#c7ff36 0px,#ffff2d 57px,#ffd91f 98px,#ffba15 141px,#ff9f0b 188px,#ff8402 249px)"></div>
<div style="left:0;top:178px;width:249px;height:2px;background:linear-gradient(90deg,#c8ff37 0px,#ffff2e 55px,#ffda21 95px,#ffb715 144px,#ff990a 198px,#ff8302 249px)"></div>
<div style="left:0;top:180px;width:249px;height:2px;background:linear-gradient(90deg,#caff38 0px,#ffff2f 54px,#ffd721 97px,#ffb916 139px,#ff9d0c 188px,#ff8203 249px)"></div>
<div style="left:0;top:182px;width:249px;height:2px;background:linear-gradient(90deg,#cbff39 0px,#ffff30 52px,#ffdd24 88px,#ffbb18 134px,#ff9b0c 190px,#ff8103 249px)"></div>
<div style="left:0;top:184px;width:249px;height:2px;background:linear-gradient(90deg,#ccff3a 0px,#fffe31 51px,#ffda24 90px,#ffb617 140px,#ff910a 209px,#ff8103 249px)"></div>
<div style="left:0;top:186px;width:249px;height:2px;background:linear-gradient(90deg,#ceff3b 0px,#ffff33 49px,#ffdb26 87px,#ffb819 135px,#ff910a 207px,#ff8004 249px)"></div>
<div style="left:0;top:188px;width:249px;height:2px;background:linear-gradient(90deg,#cfff3c 0px,#ffff34 47px,#ffd826 89px,#ffb519 138px,#ff910b 205px,#ff7f04 249px)"></div>
</div>
<svg style="left:0;top:0" width="249" height="189" viewBox="1650 164 249 189"><rect x="1661.3" y="272.2" width="16" height="15" fill="none" stroke="#fff" stroke-width="1.5"/><rect x="1831.7" y="306.9" width="16" height="15" fill="none" stroke="#fff" stroke-width="1.5"/><rect x="1764.5" y="250.2" width="16" height="15" fill="none" stroke="#fff" stroke-width="1.5"/><ellipse cx="1666.9" cy="153.4" rx="5" ry="4.500" fill="rgb(160, 188, 78)" stroke="#000" stroke-width="1.200"/><ellipse cx="1894.9" cy="274.2" rx="5" ry="4.500" fill="rgb(238, 200, 32)" stroke="#000" stroke-width="1.200"/><ellipse cx="1772.5" cy="171.7" rx="5" ry="4.500" fill="rgb(255, 255, 0)" stroke="#000" stroke-width="1.200"/></svg></div>
<div style="left:1614px;top:630px;width:289px;height:28px;background:#333"></div>
<span class="t" style="left:1614.00px;top:634.38px;font-size:22px;color:#f4f4f4;transform:scaleX(1.0338);">RGB Triplet: 255, 255, 0</span>
<div style="left:370px;top:717px;width:1487px;height:27.5px;background:linear-gradient(180deg,#2e2e2e 0%,#222 48%,#050505 52%,#181818 100%)"></div>
<div style="left:370px;top:717px;width:9px;height:27.5px;background:#000"></div>
<span class="t" style="left:451.00px;top:722.11px;font-size:17px;color:#f0f0f0;transform:scaleX(0.5751);">White</span>
<span class="t" style="left:492.30px;top:722.11px;font-size:17px;color:#f0f0f0;transform:scaleX(0.5406);">Gray 80</span>
<span class="t" style="left:534.00px;top:722.11px;font-size:17px;color:#f0f0f0;transform:scaleX(0.5406);">Gray 65</span>
<span class="t" style="left:575.70px;top:722.11px;font-size:17px;color:#f0f0f0;transform:scaleX(0.5406);">Gray 50</span>
<span class="t" style="left:617.30px;top:722.11px;font-size:17px;color:#f0f0f0;transform:scaleX(0.5406);">Gray 35</span>
<span class="t" style="left:659.30px;top:722.11px;font-size:17px;color:#f0f0f0;transform:scaleX(0.5363);">Black</span>
<span class="t" style="left:690.00px;top:722.11px;font-size:17px;color:#f0f0f0;transform:scaleX(0.5293);">Dark Skin</span>
<span class="t" style="left:734.30px;top:722.11px;font-size:17px;color:#f0f0f0;transform:scaleX(0.5317);">Light Skin</span>
<span class="t" style="left:779.30px;top:722.11px;font-size:17px;color:#f0f0f0;transform:scaleX(0.5217);">Blue Sky</span>
<span class="t" style="left:819.30px;top:722.11px;font-size:17px;color:#f0f0f0;transform:scaleX(0.5380);">Foliage</span>
<span class="t" style="left:855.70px;top:722.11px;font-size:17px;color:#f0f0f0;transform:scaleX(0.5492);">Blue Flower</span>
<span class="t" style="left:910.00px;top:722.11px;font-size:17px;color:#f0f0f0;transform:scaleX(0.5423);">Bluish Green</span>
<span class="t" style="left:968.70px;top:722.11px;font-size:17px;color:#f0f0f0;transform:scaleX(0.5414);">Orange</span>
<span class="t" style="left:1010.00px;top:722.11px;font-size:17px;color:#f0f0f0;transform:scaleX(0.5491);">Purplish Blue</span>
<span class="t" style="left:1070.50px;top:722.11px;font-size:17px;color:#f0f0f0;transform:scaleX(0.5523);">Moderate Red</span>
<span class="t" style="left:1135.50px;top:722.11px;font-size:17px;color:#f0f0f0;transform:scaleX(0.5494);">Purple</span>
<span class="t" style="left:1171.50px;top:722.11px;font-size:17px;color:#f0f0f0;transform:scaleX(0.5448);">Yellow Green</span>
<span class="t" style="left:1231.75px;top:722.11px;font-size:17px;color:#f0f0f0;transform:scaleX(0.5427);">Orange Yellow</span>
<span class="t" style="left:1296.75px;top:722.11px;font-size:17px;color:#f0f0f0;transform:scaleX(0.5363);">Blue</span>
<span class="t" style="left:1332.50px;top:722.11px;font-size:17px;color:#f0f0f0;transform:scaleX(0.5450);">Green</span>
<span class="t" style="left:1374.25px;top:722.11px;font-size:17px;color:#f0f0f0;transform:scaleX(0.5291);">Red</span>
<span class="t" style="left:1410.50px;top:722.11px;font-size:17px;color:#f0f0f0;transform:scaleX(0.5563);">Yellow</span>
<span class="t" style="left:1452.00px;top:722.11px;font-size:17px;color:#f0f0f0;transform:scaleX(0.5629);">Magenta</span>
<span class="t" style="left:1494.50px;top:722.11px;font-size:17px;color:#f0f0f0;transform:scaleX(0.5165);">Cyan</span>
<span class="t" style="left:1530.75px;top:722.11px;font-size:17px;color:#f0f0f0;transform:scaleX(0.5196);">100% Red</span>
<span class="t" style="left:1577.50px;top:722.11px;font-size:17px;color:#f0f0f0;transform:scaleX(0.5317);">100% Green</span>
<span class="t" style="left:1633.75px;top:722.11px;font-size:17px;color:#f0f0f0;transform:scaleX(0.5320);">100% Blue</span>
<span class="t" style="left:1682.50px;top:722.11px;font-size:17px;color:#f0f0f0;transform:scaleX(0.5205);">100% Cyan</span>
<span class="t" style="left:1733.75px;top:722.11px;font-size:17px;color:#f0f0f0;transform:scaleX(0.5464);">100% Magenta</span>
<span class="t" style="left:1801.75px;top:722.11px;font-size:17px;color:#f0f0f0;transform:scaleX(0.5445);">100% Yellow</span>
<div style="left:370px;top:744px;width:1487px;height:27px;background:#404040"></div>
<div style="left:370px;top:744px;width:9px;height:27px;background:#2c2c2c"></div>
<span class="t" style="left:381.00px;top:749.91px;font-size:17px;color:#e4e4e4;transform:scaleX(0.5322);">x: CIE31</span>
<span class="t" style="left:451.00px;top:749.91px;font-size:17px;color:#f0f0f0;transform:scaleX(0.5750);">0,285</span>
<span class="t" style="left:492.30px;top:749.91px;font-size:17px;color:#f0f0f0;transform:scaleX(0.5750);">0,283</span>
<span class="t" style="left:534.00px;top:749.91px;font-size:17px;color:#f0f0f0;transform:scaleX(0.5750);">0,282</span>
<span class="t" style="left:575.70px;top:749.91px;font-size:17px;color:#f0f0f0;transform:scaleX(0.5750);">0,281</span>
<span class="t" style="left:617.30px;top:749.91px;font-size:17px;color:#f0f0f0;transform:scaleX(0.5750);">0,280</span>
<span class="t" style="left:659.30px;top:749.91px;font-size:17px;color:#f0f0f0;transform:scaleX(0.5750);">0,259</span>
<span class="t" style="left:690.00px;top:749.91px;font-size:17px;color:#f0f0f0;transform:scaleX(0.5750);">0,374</span>
<span class="t" style="left:734.30px;top:749.91px;font-size:17px;color:#f0f0f0;transform:scaleX(0.5750);">0,370</span>
<span class="t" style="left:779.30px;top:749.91px;font-size:17px;color:#f0f0f0;transform:scaleX(0.5750);">0,211</span>
<span class="t" style="left:819.30px;top:749.91px;font-size:17px;color:#f0f0f0;transform:scaleX(0.5750);">0,317</span>
<span class="t" style="left:855.70px;top:749.91px;font-size:17px;color:#f0f0f0;transform:scaleX(0.5750);">0,227</span>
<span class="t" style="left:910.00px;top:749.91px;font-size:17px;color:#f0f0f0;transform:scaleX(0.5750);">0,239</span>
<span class="t" style="left:968.70px;top:749.91px;font-size:17px;color:#f0f0f0;transform:scaleX(0.5750);">0,560</span>
<span class="t" style="left:1010.00px;top:749.91px;font-size:17px;color:#f0f0f0;transform:scaleX(0.5750);">0,184</span>
<span class="t" style="left:1070.50px;top:749.91px;font-size:17px;color:#f0f0f0;transform:scaleX(0.5750);">0,479</span>
<span class="t" style="left:1135.50px;top:749.91px;font-size:17px;color:#f0f0f0;transform:scaleX(0.5750);">0,245</span>
<span class="t" style="left:1171.50px;top:749.91px;font-size:17px;color:#f0f0f0;transform:scaleX(0.5750);">0,375</span>
<span class="t" style="left:1231.75px;top:749.91px;font-size:17px;color:#f0f0f0;transform:scaleX(0.5750);">0,513</span>
<span class="t" style="left:1296.75px;top:749.91px;font-size:17px;color:#f0f0f0;transform:scaleX(0.5750);">0,170</span>
<span class="t" style="left:1332.50px;top:749.91px;font-size:17px;color:#f0f0f0;transform:scaleX(0.5750);">0,298</span>
<span class="t" style="left:1374.25px;top:749.91px;font-size:17px;color:#f0f0f0;transform:scaleX(0.5750);">0,556</span>
<span class="t" style="left:1410.50px;top:749.91px;font-size:17px;color:#f0f0f0;transform:scaleX(0.5750);">0,470</span>
<span class="t" style="left:1452.00px;top:749.91px;font-size:17px;color:#f0f0f0;transform:scaleX(0.5750);">0,339</span>
<span class="t" style="left:1494.50px;top:749.91px;font-size:17px;color:#f0f0f0;transform:scaleX(0.5750);">0,186</span>
<span class="t" style="left:1530.75px;top:749.91px;font-size:17px;color:#f0f0f0;transform:scaleX(0.5750);">0,647</span>
<span class="t" style="left:1577.50px;top:749.91px;font-size:17px;color:#f0f0f0;transform:scaleX(0.5750);">0,315</span>
<span class="t" style="left:1633.75px;top:749.91px;font-size:17px;color:#f0f0f0;transform:scaleX(0.5750);">0,151</span>
<span class="t" style="left:1682.50px;top:749.91px;font-size:17px;color:#f0f0f0;transform:scaleX(0.5750);">0,210</span>
<span class="t" style="left:1733.75px;top:749.91px;font-size:17px;color:#f0f0f0;transform:scaleX(0.5750);">0,269</span>
<span class="t" style="left:1801.75px;top:749.91px;font-size:17px;color:#f0f0f0;transform:scaleX(0.5750);">0,419</span>
<div style="left:370px;top:771px;width:1487px;height:27px;background:#808080"></div>
<div style="left:370px;top:771px;width:9px;height:27px;background:#5a5a5a"></div>
<span class="t" style="left:381.00px;top:776.56px;font-size:17px;color:#e4e4e4;transform:scaleX(0.5322);">y: CIE31</span>
<span class="t" style="left:451.00px;top:776.56px;font-size:17px;color:#f0f0f0;transform:scaleX(0.5750);">0,283</span>
<span class="t" style="left:492.30px;top:776.56px;font-size:17px;color:#f0f0f0;transform:scaleX(0.5750);">0,280</span>
<span class="t" style="left:534.00px;top:776.56px;font-size:17px;color:#f0f0f0;transform:scaleX(0.5750);">0,278</span>
<span class="t" style="left:575.70px;top:776.56px;font-size:17px;color:#f0f0f0;transform:scaleX(0.5750);">0,276</span>
<span class="t" style="left:617.30px;top:776.56px;font-size:17px;color:#f0f0f0;transform:scaleX(0.5750);">0,273</span>
<span class="t" style="left:659.30px;top:776.56px;font-size:17px;color:#f0f0f0;transform:scaleX(0.5750);">0,232</span>
<span class="t" style="left:690.00px;top:776.56px;font-size:17px;color:#f0f0f0;transform:scaleX(0.5750);">0,326</span>
<span class="t" style="left:734.30px;top:776.56px;font-size:17px;color:#f0f0f0;transform:scaleX(0.5750);">0,324</span>
<span class="t" style="left:779.30px;top:776.56px;font-size:17px;color:#f0f0f0;transform:scaleX(0.5750);">0,181</span>
<span class="t" style="left:819.30px;top:776.56px;font-size:17px;color:#f0f0f0;transform:scaleX(0.5750);">0,395</span>
<span class="t" style="left:855.70px;top:776.56px;font-size:17px;color:#f0f0f0;transform:scaleX(0.5750);">0,177</span>
<span class="t" style="left:910.00px;top:776.56px;font-size:17px;color:#f0f0f0;transform:scaleX(0.5750);">0,310</span>
<span class="t" style="left:968.70px;top:776.56px;font-size:17px;color:#f0f0f0;transform:scaleX(0.5750);">0,402</span>
<span class="t" style="left:1010.00px;top:776.56px;font-size:17px;color:#f0f0f0;transform:scaleX(0.5750);">0,114</span>
<span class="t" style="left:1070.50px;top:776.56px;font-size:17px;color:#f0f0f0;transform:scaleX(0.5750);">0,291</span>
<span class="t" style="left:1135.50px;top:776.56px;font-size:17px;color:#f0f0f0;transform:scaleX(0.5750);">0,160</span>
<span class="t" style="left:1171.50px;top:776.56px;font-size:17px;color:#f0f0f0;transform:scaleX(0.5750);">0,562</span>
<span class="t" style="left:1231.75px;top:776.56px;font-size:17px;color:#f0f0f0;transform:scaleX(0.5750);">0,444</span>
<span class="t" style="left:1296.75px;top:776.56px;font-size:17px;color:#f0f0f0;transform:scaleX(0.5750);">0,085</span>
<span class="t" style="left:1332.50px;top:776.56px;font-size:17px;color:#f0f0f0;transform:scaleX(0.5750);">0,504</span>
<span class="t" style="left:1374.25px;top:776.56px;font-size:17px;color:#f0f0f0;transform:scaleX(0.5750);">0,308</span>
<span class="t" style="left:1410.50px;top:776.56px;font-size:17px;color:#f0f0f0;transform:scaleX(0.5750);">0,496</span>
<span class="t" style="left:1452.00px;top:776.56px;font-size:17px;color:#f0f0f0;transform:scaleX(0.5750);">0,195</span>
<span class="t" style="left:1494.50px;top:776.56px;font-size:17px;color:#f0f0f0;transform:scaleX(0.5750);">0,175</span>
<span class="t" style="left:1530.75px;top:776.56px;font-size:17px;color:#f0f0f0;transform:scaleX(0.5750);">0,340</span>
<span class="t" style="left:1577.50px;top:776.56px;font-size:17px;color:#f0f0f0;transform:scaleX(0.5750);">0,646</span>
<span class="t" style="left:1633.75px;top:776.56px;font-size:17px;color:#f0f0f0;transform:scaleX(0.5750);">0,047</span>
<span class="t" style="left:1682.50px;top:776.56px;font-size:17px;color:#f0f0f0;transform:scaleX(0.5750);">0,264</span>
<span class="t" style="left:1733.75px;top:776.56px;font-size:17px;color:#f0f0f0;transform:scaleX(0.5750);">0,117</span>
<span class="t" style="left:1801.75px;top:776.56px;font-size:17px;color:#f0f0f0;transform:scaleX(0.5750);">0,552</span>
<div style="left:370px;top:798px;width:1487px;height:26px;background:#404040"></div>
<div style="left:370px;top:798px;width:9px;height:26px;background:#2c2c2c"></div>
<span class="t" style="left:381.00px;top:803.21px;font-size:17px;color:#e4e4e4;transform:scaleX(0.4848);">Y</span>
<span class="t" style="left:451.00px;top:803.21px;font-size:17px;color:#f0f0f0;transform:scaleX(0.5750);">484,375</span>
<span class="t" style="left:492.30px;top:803.21px;font-size:17px;color:#f0f0f0;transform:scaleX(0.5750);">336,289</span>
<span class="t" style="left:534.00px;top:803.21px;font-size:17px;color:#f0f0f0;transform:scaleX(0.5750);">248,313</span>
<span class="t" style="left:575.70px;top:803.21px;font-size:17px;color:#f0f0f0;transform:scaleX(0.5750);">173,033</span>
<span class="t" style="left:617.30px;top:803.21px;font-size:17px;color:#f0f0f0;transform:scaleX(0.5750);">108,022</span>
<span class="t" style="left:659.30px;top:803.21px;font-size:17px;color:#f0f0f0;transform:scaleX(0.5750);">0,419</span>
<span class="t" style="left:690.00px;top:803.21px;font-size:17px;color:#f0f0f0;transform:scaleX(0.5750);">25,858</span>
<span class="t" style="left:734.30px;top:803.21px;font-size:17px;color:#f0f0f0;transform:scaleX(0.5750);">110,331</span>
<span class="t" style="left:779.30px;top:803.21px;font-size:17px;color:#f0f0f0;transform:scaleX(0.5750);">53,774</span>
<span class="t" style="left:819.30px;top:803.21px;font-size:17px;color:#f0f0f0;transform:scaleX(0.5750);">34,267</span>
<span class="t" style="left:855.70px;top:803.21px;font-size:17px;color:#f0f0f0;transform:scaleX(0.5750);">69,620</span>
<span class="t" style="left:910.00px;top:803.21px;font-size:17px;color:#f0f0f0;transform:scaleX(0.5750);">147,440</span>
<span class="t" style="left:968.70px;top:803.21px;font-size:17px;color:#f0f0f0;transform:scaleX(0.5750);">95,919</span>
<span class="t" style="left:1010.00px;top:803.21px;font-size:17px;color:#f0f0f0;transform:scaleX(0.5750);">34,575</span>
<span class="t" style="left:1070.50px;top:803.21px;font-size:17px;color:#f0f0f0;transform:scaleX(0.5750);">62,496</span>
<span class="t" style="left:1135.50px;top:803.21px;font-size:17px;color:#f0f0f0;transform:scaleX(0.5750);">17,204</span>
<span class="t" style="left:1171.50px;top:803.21px;font-size:17px;color:#f0f0f0;transform:scaleX(0.5750);">157,282</span>
<span class="t" style="left:1231.75px;top:803.21px;font-size:17px;color:#f0f0f0;transform:scaleX(0.5750);">148,678</span>
<span class="t" style="left:1296.75px;top:803.21px;font-size:17px;color:#f0f0f0;transform:scaleX(0.5750);">18,804</span>
<span class="t" style="left:1332.50px;top:803.21px;font-size:17px;color:#f0f0f0;transform:scaleX(0.5750);">71,847</span>
<span class="t" style="left:1374.25px;top:803.21px;font-size:17px;color:#f0f0f0;transform:scaleX(0.5750);">39,652</span>
<span class="t" style="left:1410.50px;top:803.21px;font-size:17px;color:#f0f0f0;transform:scaleX(0.5750);">224,205</span>
<span class="t" style="left:1452.00px;top:803.21px;font-size:17px;color:#f0f0f0;transform:scaleX(0.5750);">60,068</span>
<span class="t" style="left:1494.50px;top:803.21px;font-size:17px;color:#f0f0f0;transform:scaleX(0.5750);">62,273</span>
<span class="t" style="left:1530.75px;top:803.21px;font-size:17px;color:#f0f0f0;transform:scaleX(0.5750);">94,392</span>
<span class="t" style="left:1577.50px;top:803.21px;font-size:17px;color:#f0f0f0;transform:scaleX(0.5750);">344,758</span>
<span class="t" style="left:1633.75px;top:803.21px;font-size:17px;color:#f0f0f0;transform:scaleX(0.5750);">41,204</span>
<span class="t" style="left:1682.50px;top:803.21px;font-size:17px;color:#f0f0f0;transform:scaleX(0.5750);">366,466</span>
<span class="t" style="left:1733.75px;top:803.21px;font-size:17px;color:#f0f0f0;transform:scaleX(0.5750);">136,208</span>
<span class="t" style="left:1801.75px;top:803.21px;font-size:17px;color:#f0f0f0;transform:scaleX(0.5750);">425,638</span>
<div style="left:370px;top:824px;width:1487px;height:27px;background:#808080"></div>
<div style="left:370px;top:824px;width:9px;height:27px;background:#5a5a5a"></div>
<span class="t" style="left:381.00px;top:829.86px;font-size:17px;color:#e4e4e4;transform:scaleX(0.5602);">Target x:CIE31</span>
<span class="t" style="left:451.00px;top:829.86px;font-size:17px;color:#f0f0f0;transform:scaleX(0.5750);">0,313</span>
<span class="t" style="left:492.30px;top:829.86px;font-size:17px;color:#f0f0f0;transform:scaleX(0.5750);">0,313</span>
<span class="t" style="left:534.00px;top:829.86px;font-size:17px;color:#f0f0f0;transform:scaleX(0.5750);">0,313</span>
<span class="t" style="left:575.70px;top:829.86px;font-size:17px;color:#f0f0f0;transform:scaleX(0.5750);">0,313</span>
<span class="t" style="left:617.30px;top:829.86px;font-size:17px;color:#f0f0f0;transform:scaleX(0.5750);">0,313</span>
<span class="t" style="left:659.30px;top:829.86px;font-size:17px;color:#f0f0f0;transform:scaleX(0.5750);">0,313</span>
<span class="t" style="left:690.00px;top:829.86px;font-size:17px;color:#f0f0f0;transform:scaleX(0.5750);">0,400</span>
<span class="t" style="left:734.30px;top:829.86px;font-size:17px;color:#f0f0f0;transform:scaleX(0.5750);">0,380</span>
<span class="t" style="left:779.30px;top:829.86px;font-size:17px;color:#f0f0f0;transform:scaleX(0.5750);">0,250</span>
<span class="t" style="left:819.30px;top:829.86px;font-size:17px;color:#f0f0f0;transform:scaleX(0.5750);">0,340</span>
<span class="t" style="left:855.70px;top:829.86px;font-size:17px;color:#f0f0f0;transform:scaleX(0.5750);">0,268</span>
<span class="t" style="left:910.00px;top:829.86px;font-size:17px;color:#f0f0f0;transform:scaleX(0.5750);">0,263</span>
<span class="t" style="left:968.70px;top:829.86px;font-size:17px;color:#f0f0f0;transform:scaleX(0.5750);">0,512</span>
<span class="t" style="left:1010.00px;top:829.86px;font-size:17px;color:#f0f0f0;transform:scaleX(0.5750);">0,217</span>
<span class="t" style="left:1070.50px;top:829.86px;font-size:17px;color:#f0f0f0;transform:scaleX(0.5750);">0,462</span>
<span class="t" style="left:1135.50px;top:829.86px;font-size:17px;color:#f0f0f0;transform:scaleX(0.5750);">0,290</span>
<span class="t" style="left:1171.50px;top:829.86px;font-size:17px;color:#f0f0f0;transform:scaleX(0.5750);">0,376</span>
<span class="t" style="left:1231.75px;top:829.86px;font-size:17px;color:#f0f0f0;transform:scaleX(0.5750);">0,474</span>
<span class="t" style="left:1296.75px;top:829.86px;font-size:17px;color:#f0f0f0;transform:scaleX(0.5750);">0,192</span>
<span class="t" style="left:1332.50px;top:829.86px;font-size:17px;color:#f0f0f0;transform:scaleX(0.5750);">0,305</span>
<span class="t" style="left:1374.25px;top:829.86px;font-size:17px;color:#f0f0f0;transform:scaleX(0.5750);">0,537</span>
<span class="t" style="left:1410.50px;top:829.86px;font-size:17px;color:#f0f0f0;transform:scaleX(0.5750);">0,447</span>
<span class="t" style="left:1452.00px;top:829.86px;font-size:17px;color:#f0f0f0;transform:scaleX(0.5750);">0,374</span>
<span class="t" style="left:1494.50px;top:829.86px;font-size:17px;color:#f0f0f0;transform:scaleX(0.5750);">0,208</span>
<span class="t" style="left:1530.75px;top:829.86px;font-size:17px;color:#f0f0f0;transform:scaleX(0.5750);">0,640</span>
<span class="t" style="left:1577.50px;top:829.86px;font-size:17px;color:#f0f0f0;transform:scaleX(0.5750);">0,300</span>
<span class="t" style="left:1633.75px;top:829.86px;font-size:17px;color:#f0f0f0;transform:scaleX(0.5750);">0,150</span>
<span class="t" style="left:1682.50px;top:829.86px;font-size:17px;color:#f0f0f0;transform:scaleX(0.5750);">0,225</span>
<span class="t" style="left:1733.75px;top:829.86px;font-size:17px;color:#f0f0f0;transform:scaleX(0.5750);">0,321</span>
<span class="t" style="left:1801.75px;top:829.86px;font-size:17px;color:#f0f0f0;transform:scaleX(0.5750);">0,419</span>
<div style="left:370px;top:851px;width:1487px;height:27px;background:#404040"></div>
<div style="left:370px;top:851px;width:9px;height:27px;background:#2c2c2c"></div>
<span class="t" style="left:381.00px;top:856.51px;font-size:17px;color:#e4e4e4;transform:scaleX(0.5602);">Target y:CIE31</span>
<span class="t" style="left:451.00px;top:856.51px;font-size:17px;color:#f0f0f0;transform:scaleX(0.5750);">0,329</span>
<span class="t" style="left:492.30px;top:856.51px;font-size:17px;color:#f0f0f0;transform:scaleX(0.5750);">0,329</span>
<span class="t" style="left:534.00px;top:856.51px;font-size:17px;color:#f0f0f0;transform:scaleX(0.5750);">0,329</span>
<span class="t" style="left:575.70px;top:856.51px;font-size:17px;color:#f0f0f0;transform:scaleX(0.5750);">0,329</span>
<span class="t" style="left:617.30px;top:856.51px;font-size:17px;color:#f0f0f0;transform:scaleX(0.5750);">0,329</span>
<span class="t" style="left:659.30px;top:856.51px;font-size:17px;color:#f0f0f0;transform:scaleX(0.5750);">0,329</span>
<span class="t" style="left:690.00px;top:856.51px;font-size:17px;color:#f0f0f0;transform:scaleX(0.5750);">0,364</span>
<span class="t" style="left:734.30px;top:856.51px;font-size:17px;color:#f0f0f0;transform:scaleX(0.5750);">0,356</span>
<span class="t" style="left:779.30px;top:856.51px;font-size:17px;color:#f0f0f0;transform:scaleX(0.5750);">0,266</span>
<span class="t" style="left:819.30px;top:856.51px;font-size:17px;color:#f0f0f0;transform:scaleX(0.5750);">0,427</span>
<span class="t" style="left:855.70px;top:856.51px;font-size:17px;color:#f0f0f0;transform:scaleX(0.5750);">0,253</span>
<span class="t" style="left:910.00px;top:856.51px;font-size:17px;color:#f0f0f0;transform:scaleX(0.5750);">0,362</span>
<span class="t" style="left:968.70px;top:856.51px;font-size:17px;color:#f0f0f0;transform:scaleX(0.5750);">0,406</span>
<span class="t" style="left:1010.00px;top:856.51px;font-size:17px;color:#f0f0f0;transform:scaleX(0.5750);">0,192</span>
<span class="t" style="left:1070.50px;top:856.51px;font-size:17px;color:#f0f0f0;transform:scaleX(0.5750);">0,313</span>
<span class="t" style="left:1135.50px;top:856.51px;font-size:17px;color:#f0f0f0;transform:scaleX(0.5750);">0,221</span>
<span class="t" style="left:1171.50px;top:856.51px;font-size:17px;color:#f0f0f0;transform:scaleX(0.5750);">0,493</span>
<span class="t" style="left:1231.75px;top:856.51px;font-size:17px;color:#f0f0f0;transform:scaleX(0.5750);">0,439</span>
<span class="t" style="left:1296.75px;top:856.51px;font-size:17px;color:#f0f0f0;transform:scaleX(0.5750);">0,141</span>
<span class="t" style="left:1332.50px;top:856.51px;font-size:17px;color:#f0f0f0;transform:scaleX(0.5750);">0,489</span>
<span class="t" style="left:1374.25px;top:856.51px;font-size:17px;color:#f0f0f0;transform:scaleX(0.5750);">0,317</span>
<span class="t" style="left:1410.50px;top:856.51px;font-size:17px;color:#f0f0f0;transform:scaleX(0.5750);">0,474</span>
<span class="t" style="left:1452.00px;top:856.51px;font-size:17px;color:#f0f0f0;transform:scaleX(0.5750);">0,247</span>
<span class="t" style="left:1494.50px;top:856.51px;font-size:17px;color:#f0f0f0;transform:scaleX(0.5750);">0,270</span>
<span class="t" style="left:1530.75px;top:856.51px;font-size:17px;color:#f0f0f0;transform:scaleX(0.5750);">0,330</span>
<span class="t" style="left:1577.50px;top:856.51px;font-size:17px;color:#f0f0f0;transform:scaleX(0.5750);">0,600</span>
<span class="t" style="left:1633.75px;top:856.51px;font-size:17px;color:#f0f0f0;transform:scaleX(0.5750);">0,060</span>
<span class="t" style="left:1682.50px;top:856.51px;font-size:17px;color:#f0f0f0;transform:scaleX(0.5750);">0,329</span>
<span class="t" style="left:1733.75px;top:856.51px;font-size:17px;color:#f0f0f0;transform:scaleX(0.5750);">0,154</span>
<span class="t" style="left:1801.75px;top:856.51px;font-size:17px;color:#f0f0f0;transform:scaleX(0.5750);">0,505</span>
<div style="left:370px;top:878px;width:1487px;height:26px;background:#808080"></div>
<div style="left:370px;top:878px;width:9px;height:26px;background:#5a5a5a"></div>
<span class="t" style="left:381.00px;top:883.16px;font-size:17px;color:#e4e4e4;transform:scaleX(0.5760);">Target Y</span>
<span class="t" style="left:451.00px;top:883.16px;font-size:17px;color:#f0f0f0;transform:scaleX(0.5750);">484,375</span>
<span class="t" style="left:492.30px;top:883.16px;font-size:17px;color:#f0f0f0;transform:scaleX(0.5750);">383,285</span>
<span class="t" style="left:534.00px;top:883.16px;font-size:17px;color:#f0f0f0;transform:scaleX(0.5750);">308,836</span>
<span class="t" style="left:575.70px;top:883.16px;font-size:17px;color:#f0f0f0;transform:scaleX(0.5750);">237,838</span>
<span class="t" style="left:617.30px;top:883.16px;font-size:17px;color:#f0f0f0;transform:scaleX(0.5750);">165,615</span>
<span class="t" style="left:659.30px;top:883.16px;font-size:17px;color:#f0f0f0;transform:scaleX(0.5750);">0,000</span>
<span class="t" style="left:690.00px;top:883.16px;font-size:17px;color:#f0f0f0;transform:scaleX(0.5750);">48,793</span>
<span class="t" style="left:734.30px;top:883.16px;font-size:17px;color:#f0f0f0;transform:scaleX(0.5750);">169,023</span>
<span class="t" style="left:779.30px;top:883.16px;font-size:17px;color:#f0f0f0;transform:scaleX(0.5750);">90,570</span>
<span class="t" style="left:819.30px;top:883.16px;font-size:17px;color:#f0f0f0;transform:scaleX(0.5750);">63,126</span>
<span class="t" style="left:855.70px;top:883.16px;font-size:17px;color:#f0f0f0;transform:scaleX(0.5750);">112,949</span>
<span class="t" style="left:910.00px;top:883.16px;font-size:17px;color:#f0f0f0;transform:scaleX(0.5750);">202,822</span>
<span class="t" style="left:968.70px;top:883.16px;font-size:17px;color:#f0f0f0;transform:scaleX(0.5750);">137,310</span>
<span class="t" style="left:1010.00px;top:883.16px;font-size:17px;color:#f0f0f0;transform:scaleX(0.5750);">56,933</span>
<span class="t" style="left:1070.50px;top:883.16px;font-size:17px;color:#f0f0f0;transform:scaleX(0.5750);">90,460</span>
<span class="t" style="left:1135.50px;top:883.16px;font-size:17px;color:#f0f0f0;transform:scaleX(0.5750);">32,330</span>
<span class="t" style="left:1171.50px;top:883.16px;font-size:17px;color:#f0f0f0;transform:scaleX(0.5750);">207,104</span>
<span class="t" style="left:1231.75px;top:883.16px;font-size:17px;color:#f0f0f0;transform:scaleX(0.5750);">205,922</span>
<span class="t" style="left:1296.75px;top:883.16px;font-size:17px;color:#f0f0f0;transform:scaleX(0.5750);">30,239</span>
<span class="t" style="left:1332.50px;top:883.16px;font-size:17px;color:#f0f0f0;transform:scaleX(0.5750);">111,277</span>
<span class="t" style="left:1374.25px;top:883.16px;font-size:17px;color:#f0f0f0;transform:scaleX(0.5750);">56,488</span>
<span class="t" style="left:1410.50px;top:883.16px;font-size:17px;color:#f0f0f0;transform:scaleX(0.5750);">285,605</span>
<span class="t" style="left:1452.00px;top:883.16px;font-size:17px;color:#f0f0f0;transform:scaleX(0.5750);">91,189</span>
<span class="t" style="left:1494.50px;top:883.16px;font-size:17px;color:#f0f0f0;transform:scaleX(0.5750);">94,055</span>
<span class="t" style="left:1530.75px;top:883.16px;font-size:17px;color:#f0f0f0;transform:scaleX(0.5750);">103,005</span>
<span class="t" style="left:1577.50px;top:883.16px;font-size:17px;color:#f0f0f0;transform:scaleX(0.5750);">346,405</span>
<span class="t" style="left:1633.75px;top:883.16px;font-size:17px;color:#f0f0f0;transform:scaleX(0.5750);">34,965</span>
<span class="t" style="left:1682.50px;top:883.16px;font-size:17px;color:#f0f0f0;transform:scaleX(0.5750);">381,370</span>
<span class="t" style="left:1733.75px;top:883.16px;font-size:17px;color:#f0f0f0;transform:scaleX(0.5750);">137,970</span>
<span class="t" style="left:1801.75px;top:883.16px;font-size:17px;color:#f0f0f0;transform:scaleX(0.5750);">449,410</span>
<div style="left:370px;top:904px;width:1487px;height:27px;background:#404040"></div>
<div style="left:370px;top:904px;width:9px;height:27px;background:#2c2c2c"></div>
<span class="t" style="left:381.00px;top:909.81px;font-size:17px;color:#e4e4e4;transform:scaleX(0.5716);">ΔE 2000</span>
<span class="t" style="left:451.00px;top:909.81px;font-size:17px;color:#f0f0f0;transform:scaleX(0.5750);">16,972</span>
<span class="t" style="left:492.30px;top:909.81px;font-size:17px;color:#f0f0f0;transform:scaleX(0.5750);">16,753</span>
<span class="t" style="left:534.00px;top:909.81px;font-size:17px;color:#f0f0f0;transform:scaleX(0.5750);">16,685</span>
<span class="t" style="left:575.70px;top:909.81px;font-size:17px;color:#f0f0f0;transform:scaleX(0.5750);">16,796</span>
<span class="t" style="left:617.30px;top:909.81px;font-size:17px;color:#f0f0f0;transform:scaleX(0.5750);">17,160</span>
<span class="t" style="left:659.30px;top:909.81px;font-size:17px;color:#f0f0f0;transform:scaleX(0.5750);">1,625</span>
<span class="t" style="left:690.00px;top:909.81px;font-size:17px;color:#f0f0f0;transform:scaleX(0.5750);">11,588</span>
<span class="t" style="left:734.30px;top:909.81px;font-size:17px;color:#f0f0f0;transform:scaleX(0.5750);">13,987</span>
<span class="t" style="left:779.30px;top:909.81px;font-size:17px;color:#f0f0f0;transform:scaleX(0.5750);">17,984</span>
<span class="t" style="left:819.30px;top:909.81px;font-size:17px;color:#f0f0f0;transform:scaleX(0.5750);">11,000</span>
<span class="t" style="left:855.70px;top:909.81px;font-size:17px;color:#f0f0f0;transform:scaleX(0.5750);">14,661</span>
<span class="t" style="left:910.00px;top:909.81px;font-size:17px;color:#f0f0f0;transform:scaleX(0.5750);">14,431</span>
<span class="t" style="left:968.70px;top:909.81px;font-size:17px;color:#f0f0f0;transform:scaleX(0.5750);">8,499</span>
<span class="t" style="left:1010.00px;top:909.81px;font-size:17px;color:#f0f0f0;transform:scaleX(0.5750);">14,527</span>
<span class="t" style="left:1070.50px;top:909.81px;font-size:17px;color:#f0f0f0;transform:scaleX(0.5750);">8,235</span>
<span class="t" style="left:1135.50px;top:909.81px;font-size:17px;color:#f0f0f0;transform:scaleX(0.5750);">8,511</span>
<span class="t" style="left:1171.50px;top:909.81px;font-size:17px;color:#f0f0f0;transform:scaleX(0.5750);">7,807</span>
<span class="t" style="left:1231.75px;top:909.81px;font-size:17px;color:#f0f0f0;transform:scaleX(0.5750);">7,980</span>
<span class="t" style="left:1296.75px;top:909.81px;font-size:17px;color:#f0f0f0;transform:scaleX(0.5750);">10,518</span>
<span class="t" style="left:1332.50px;top:909.81px;font-size:17px;color:#f0f0f0;transform:scaleX(0.5750);">9,699</span>
<span class="t" style="left:1374.25px;top:909.81px;font-size:17px;color:#f0f0f0;transform:scaleX(0.5750);">5,444</span>
<span class="t" style="left:1410.50px;top:909.81px;font-size:17px;color:#f0f0f0;transform:scaleX(0.5750);">6,239</span>
<span class="t" style="left:1452.00px;top:909.81px;font-size:17px;color:#f0f0f0;transform:scaleX(0.5750);">10,599</span>
<span class="t" style="left:1494.50px;top:909.81px;font-size:17px;color:#f0f0f0;transform:scaleX(0.5750);">22,144</span>
<span class="t" style="left:1530.75px;top:909.81px;font-size:17px;color:#f0f0f0;transform:scaleX(0.5750);">5,569</span>
<span class="t" style="left:1577.50px;top:909.81px;font-size:17px;color:#f0f0f0;transform:scaleX(0.5750);">5,690</span>
<span class="t" style="left:1633.75px;top:909.81px;font-size:17px;color:#f0f0f0;transform:scaleX(0.5750);">6,555</span>
<span class="t" style="left:1682.50px;top:909.81px;font-size:17px;color:#f0f0f0;transform:scaleX(0.5750);">17,329</span>
<span class="t" style="left:1733.75px;top:909.81px;font-size:17px;color:#f0f0f0;transform:scaleX(0.5750);">6,492</span>
<span class="t" style="left:1801.75px;top:909.81px;font-size:17px;color:#f0f0f0;transform:scaleX(0.5750);">5,674</span>
<div style="left:370px;top:931px;width:1487px;height:2px;background:#2a2a2a"></div>
<div style="left:0px;top:952px;width:1515px;height:62px;background:#505050"></div>
<div style="left:0;top:952px;width:1515px;height:62px;overflow:hidden">
<div style="left:-45.0px;top:.5px;width:62.500px;height:60.500px;border-radius:5px;background:linear-gradient(180deg,#a8a8a8 0%,#8e8e8e 50%,#707070 100%)"></div>
<div style="left:-38.5px;top:6.500px;width:50px;height:30px;border-radius:5px;background:rgb(115, 82, 68);box-shadow:inset 1.500px 1.500px 0 rgb(92, 65, 54)"></div>
<div style="left:20.0px;top:.5px;width:62.500px;height:60.500px;border-radius:5px;background:linear-gradient(180deg,#a8a8a8 0%,#8e8e8e 50%,#707070 100%)"></div>
<div style="left:26.5px;top:6.500px;width:50px;height:30px;border-radius:5px;background:rgb(196, 150, 130);box-shadow:inset 1.500px 1.500px 0 rgb(156, 120, 104)"></div>
<div style="left:85.0px;top:.5px;width:62.500px;height:60.500px;border-radius:5px;background:linear-gradient(180deg,#a8a8a8 0%,#8e8e8e 50%,#707070 100%)"></div>
<div style="left:91.5px;top:6.500px;width:50px;height:30px;border-radius:5px;background:rgb(93, 122, 160);box-shadow:inset 1.500px 1.500px 0 rgb(74, 97, 128)"></div>
<div style="left:150.0px;top:.5px;width:62.500px;height:60.500px;border-radius:5px;background:linear-gradient(180deg,#a8a8a8 0%,#8e8e8e 50%,#707070 100%)"></div>
<div style="left:156.5px;top:6.500px;width:50px;height:30px;border-radius:5px;background:rgb(90, 108, 66);box-shadow:inset 1.500px 1.500px 0 rgb(72, 86, 52)"></div>
<div style="left:215.0px;top:.5px;width:62.500px;height:60.500px;border-radius:5px;background:linear-gradient(180deg,#a8a8a8 0%,#8e8e8e 50%,#707070 100%)"></div>
<div style="left:221.5px;top:6.500px;width:50px;height:15px;border-radius:5px;background:rgb(132, 128, 176);box-shadow:inset 1.500px 1.500px 0 rgb(105, 102, 140)"></div>
<div style="left:280.0px;top:.5px;width:62.500px;height:60.500px;border-radius:5px;background:linear-gradient(180deg,#a8a8a8 0%,#8e8e8e 50%,#707070 100%)"></div>
<div style="left:286.5px;top:6.500px;width:50px;height:15px;border-radius:5px;background:rgb(100, 189, 170);box-shadow:inset 1.500px 1.500px 0 rgb(80, 151, 136)"></div>
<div style="left:345.0px;top:.5px;width:62.500px;height:60.500px;border-radius:5px;background:linear-gradient(180deg,#a8a8a8 0%,#8e8e8e 50%,#707070 100%)"></div>
<div style="left:351.5px;top:6.500px;width:50px;height:30px;border-radius:5px;background:rgb(217, 122, 50);box-shadow:inset 1.500px 1.500px 0 rgb(173, 97, 40)"></div>
<div style="left:410.0px;top:.5px;width:62.500px;height:60.500px;border-radius:5px;background:linear-gradient(180deg,#a8a8a8 0%,#8e8e8e 50%,#707070 100%)"></div>
<div style="left:416.5px;top:6.500px;width:50px;height:15px;border-radius:5px;background:rgb(76, 91, 166);box-shadow:inset 1.500px 1.500px 0 rgb(60, 72, 132)"></div>
<div style="left:475.0px;top:.5px;width:62.500px;height:60.500px;border-radius:5px;background:linear-gradient(180deg,#a8a8a8 0%,#8e8e8e 50%,#707070 100%)"></div>
<div style="left:481.5px;top:6.500px;width:50px;height:15px;border-radius:5px;background:rgb(196, 84, 98);box-shadow:inset 1.500px 1.500px 0 rgb(156, 67, 78)"></div>
<div style="left:540.0px;top:.5px;width:62.500px;height:60.500px;border-radius:5px;background:linear-gradient(180deg,#a8a8a8 0%,#8e8e8e 50%,#707070 100%)"></div>
<div style="left:546.5px;top:6.500px;width:50px;height:30px;border-radius:5px;background:rgb(94, 60, 110);box-shadow:inset 1.500px 1.500px 0 rgb(75, 48, 88)"></div>
<div style="left:605.0px;top:.5px;width:62.500px;height:60.500px;border-radius:5px;background:linear-gradient(180deg,#a8a8a8 0%,#8e8e8e 50%,#707070 100%)"></div>
<div style="left:611.5px;top:6.500px;width:50px;height:15px;border-radius:5px;background:rgb(160, 188, 78);box-shadow:inset 1.500px 1.500px 0 rgb(128, 150, 62)"></div>
<div style="left:670.0px;top:.5px;width:62.500px;height:60.500px;border-radius:5px;background:linear-gradient(180deg,#a8a8a8 0%,#8e8e8e 50%,#707070 100%)"></div>
<div style="left:676.5px;top:6.500px;width:50px;height:15px;border-radius:5px;background:rgb(228, 163, 56);box-shadow:inset 1.500px 1.500px 0 rgb(182, 130, 44)"></div>
<div style="left:735.0px;top:.5px;width:62.500px;height:60.500px;border-radius:5px;background:linear-gradient(180deg,#a8a8a8 0%,#8e8e8e 50%,#707070 100%)"></div>
<div style="left:741.5px;top:6.500px;width:50px;height:30px;border-radius:5px;background:rgb(52, 60, 150);box-shadow:inset 1.500px 1.500px 0 rgb(41, 48, 120)"></div>
<div style="left:800.0px;top:.5px;width:62.500px;height:60.500px;border-radius:5px;background:linear-gradient(180deg,#a8a8a8 0%,#8e8e8e 50%,#707070 100%)"></div>
<div style="left:806.5px;top:6.500px;width:50px;height:30px;border-radius:5px;background:rgb(70, 148, 76);box-shadow:inset 1.500px 1.500px 0 rgb(56, 118, 60)"></div>
<div style="left:865.0px;top:.5px;width:62.500px;height:60.500px;border-radius:5px;background:linear-gradient(180deg,#a8a8a8 0%,#8e8e8e 50%,#707070 100%)"></div>
<div style="left:871.5px;top:6.500px;width:50px;height:30px;border-radius:5px;background:rgb(176, 48, 58);box-shadow:inset 1.500px 1.500px 0 rgb(140, 38, 46)"></div>
<div style="left:930.0px;top:.5px;width:62.500px;height:60.500px;border-radius:5px;background:linear-gradient(180deg,#a8a8a8 0%,#8e8e8e 50%,#707070 100%)"></div>
<div style="left:936.5px;top:6.500px;width:50px;height:30px;border-radius:5px;background:rgb(238, 200, 32);box-shadow:inset 1.500px 1.500px 0 rgb(190, 160, 25)"></div>
<div style="left:995.0px;top:.5px;width:62.500px;height:60.500px;border-radius:5px;background:linear-gradient(180deg,#a8a8a8 0%,#8e8e8e 50%,#707070 100%)"></div>
<div style="left:1001.5px;top:6.500px;width:50px;height:30px;border-radius:5px;background:rgb(188, 84, 150);box-shadow:inset 1.500px 1.500px 0 rgb(150, 67, 120)"></div>
<div style="left:1060.0px;top:.5px;width:62.500px;height:60.500px;border-radius:5px;background:linear-gradient(180deg,#a8a8a8 0%,#8e8e8e 50%,#707070 100%)"></div>
<div style="left:1066.5px;top:6.500px;width:50px;height:30px;border-radius:5px;background:rgb(0, 136, 168);box-shadow:inset 1.500px 1.500px 0 rgb(0, 108, 134)"></div>
<div style="left:1125.0px;top:.5px;width:62.500px;height:60.500px;border-radius:5px;background:linear-gradient(180deg,#a8a8a8 0%,#8e8e8e 50%,#707070 100%)"></div>
<div style="left:1131.5px;top:6.500px;width:50px;height:30px;border-radius:5px;background:rgb(255, 0, 0);box-shadow:inset 1.500px 1.500px 0 rgb(204, 0, 0)"></div>
<div style="left:1190.0px;top:.5px;width:62.500px;height:60.500px;border-radius:5px;background:linear-gradient(180deg,#a8a8a8 0%,#8e8e8e 50%,#707070 100%)"></div>
<div style="left:1196.5px;top:6.500px;width:50px;height:15px;border-radius:5px;background:rgb(0, 255, 0);box-shadow:inset 1.500px 1.500px 0 rgb(0, 204, 0)"></div>
<div style="left:1255.0px;top:.5px;width:62.500px;height:60.500px;border-radius:5px;background:linear-gradient(180deg,#a8a8a8 0%,#8e8e8e 50%,#707070 100%)"></div>
<div style="left:1261.5px;top:6.500px;width:50px;height:15px;border-radius:5px;background:rgb(0, 0, 255);box-shadow:inset 1.500px 1.500px 0 rgb(0, 0, 204)"></div>
<div style="left:1320.0px;top:.5px;width:62.500px;height:60.500px;border-radius:5px;background:linear-gradient(180deg,#a8a8a8 0%,#8e8e8e 50%,#707070 100%)"></div>
<div style="left:1326.5px;top:6.500px;width:50px;height:15px;border-radius:5px;background:rgb(0, 255, 255);box-shadow:inset 1.500px 1.500px 0 rgb(0, 204, 204)"></div>
<div style="left:1385.0px;top:.5px;width:62.500px;height:60.500px;border-radius:5px;background:linear-gradient(180deg,#a8a8a8 0%,#8e8e8e 50%,#707070 100%)"></div>
<div style="left:1391.5px;top:6.500px;width:50px;height:15px;border-radius:5px;background:rgb(255, 0, 255);box-shadow:inset 1.500px 1.500px 0 rgb(204, 0, 204)"></div>
<div style="left:1450.0px;top:.5px;width:62.500px;height:60.500px;border-radius:5px;background:linear-gradient(180deg,#1e1e1e,#3a3a3a)"></div>
<div style="left:1456.5px;top:6.500px;width:50px;height:15px;border-radius:5px;background:rgb(255, 255, 0);box-shadow:inset 1.500px 1.500px 0 rgb(204, 204, 0)"></div>
</div>
<span class="t" style="left:-2.52px;top:995.73px;font-size:14.5px;color:#2c2c36;font-weight:700;transform:scaleX(0.8600);">kin</span>
<span class="t" style="left:21.36px;top:995.73px;font-size:14.5px;color:#2c2c36;font-weight:700;transform:scaleX(0.8600);">Light Skin</span>
<span class="t" style="left:90.16px;top:995.73px;font-size:14.5px;color:#2c2c36;font-weight:700;transform:scaleX(0.8600);">Blue Sky</span>
<span class="t" style="left:159.67px;top:995.73px;font-size:14.5px;color:#2c2c36;font-weight:700;transform:scaleX(0.8600);">Foliage</span>
<span class="t" style="left:225.00px;top:980.73px;font-size:14.5px;color:#2c2c36;font-weight:700;transform:scaleX(0.8600);">Blue</span>
<span class="t" style="left:225.00px;top:995.73px;font-size:14.5px;color:#2c2c36;font-weight:700;transform:scaleX(0.8600);">Flower</span>
<span class="t" style="left:292.30px;top:980.73px;font-size:14.5px;color:#2c2c36;font-weight:700;transform:scaleX(0.8600);">Bluish</span>
<span class="t" style="left:292.30px;top:995.73px;font-size:14.5px;color:#2c2c36;font-weight:700;transform:scaleX(0.8600);">Green</span>
<span class="t" style="left:354.67px;top:995.73px;font-size:14.5px;color:#2c2c36;font-weight:700;transform:scaleX(0.8600);">Orange</span>
<span class="t" style="left:416.00px;top:980.73px;font-size:14.5px;color:#2c2c36;font-weight:700;transform:scaleX(0.8600);">Purplish</span>
<span class="t" style="left:416.00px;top:995.73px;font-size:14.5px;color:#2c2c36;font-weight:700;transform:scaleX(0.8600);">Blue</span>
<span class="t" style="left:476.00px;top:980.73px;font-size:14.5px;color:#2c2c36;font-weight:700;transform:scaleX(0.8600);">Moderate</span>
<span class="t" style="left:476.00px;top:995.73px;font-size:14.5px;color:#2c2c36;font-weight:700;transform:scaleX(0.8600);">Red</span>
<span class="t" style="left:552.10px;top:995.73px;font-size:14.5px;color:#2c2c36;font-weight:700;transform:scaleX(0.8600);">Purple</span>
<span class="t" style="left:615.50px;top:980.73px;font-size:14.5px;color:#2c2c36;font-weight:700;transform:scaleX(0.8600);">Yellow</span>
<span class="t" style="left:615.50px;top:995.73px;font-size:14.5px;color:#2c2c36;font-weight:700;transform:scaleX(0.8600);">Green</span>
<span class="t" style="left:678.70px;top:980.73px;font-size:14.5px;color:#2c2c36;font-weight:700;transform:scaleX(0.8600);">Orange</span>
<span class="t" style="left:678.70px;top:995.73px;font-size:14.5px;color:#2c2c36;font-weight:700;transform:scaleX(0.8600);">Yellow</span>
<span class="t" style="left:752.99px;top:995.73px;font-size:14.5px;color:#2c2c36;font-weight:700;transform:scaleX(0.8600);">Blue</span>
<span class="t" style="left:813.47px;top:995.73px;font-size:14.5px;color:#2c2c36;font-weight:700;transform:scaleX(0.8600);">Green</span>
<span class="t" style="left:884.72px;top:995.73px;font-size:14.5px;color:#2c2c36;font-weight:700;transform:scaleX(0.8600);">Red</span>
<span class="t" style="left:942.09px;top:995.73px;font-size:14.5px;color:#2c2c36;font-weight:700;transform:scaleX(0.8600);">Yellow</span>
<span class="t" style="left:1001.20px;top:995.73px;font-size:14.5px;color:#2c2c36;font-weight:700;transform:scaleX(0.8600);">Magenta</span>
<span class="t" style="left:1076.25px;top:995.73px;font-size:14.5px;color:#2c2c36;font-weight:700;transform:scaleX(0.8600);">Cyan</span>
<span class="t" style="left:1127.04px;top:995.73px;font-size:14.5px;color:#2c2c36;font-weight:700;transform:scaleX(0.8600);">100% Red</span>
<span class="t" style="left:1202.70px;top:980.73px;font-size:14.5px;color:#2c2c36;font-weight:700;transform:scaleX(0.8600);">100%</span>
<span class="t" style="left:1202.70px;top:995.73px;font-size:14.5px;color:#2c2c36;font-weight:700;transform:scaleX(0.8600);">Green</span>
<span class="t" style="left:1269.50px;top:980.73px;font-size:14.5px;color:#2c2c36;font-weight:700;transform:scaleX(0.8600);">100%</span>
<span class="t" style="left:1269.50px;top:995.73px;font-size:14.5px;color:#2c2c36;font-weight:700;transform:scaleX(0.8600);">Blue</span>
<span class="t" style="left:1334.30px;top:980.73px;font-size:14.5px;color:#2c2c36;font-weight:700;transform:scaleX(0.8600);">100%</span>
<span class="t" style="left:1334.30px;top:995.73px;font-size:14.5px;color:#2c2c36;font-weight:700;transform:scaleX(0.8600);">Cyan</span>
<span class="t" style="left:1389.00px;top:980.73px;font-size:14.5px;color:#2c2c36;font-weight:700;transform:scaleX(0.8600);">100%</span>
<span class="t" style="left:1389.00px;top:995.73px;font-size:14.5px;color:#2c2c36;font-weight:700;transform:scaleX(0.8600);">Magenta</span>
<span class="t" style="left:1461.00px;top:980.73px;font-size:14.5px;color:#fff;font-weight:700;transform:scaleX(0.8600);">100%</span>
<span class="t" style="left:1461.00px;top:995.73px;font-size:14.5px;color:#fff;font-weight:700;transform:scaleX(0.8600);">Yellow</span>
<div style="left:0px;top:1014px;width:1515px;height:16px;background:#696969"></div>
<div style="left:350px;top:1015px;width:1149px;height:14px;background:#444;border-radius:7px"></div>
<div style="left:3px;top:1015px;width:12px;height:14px;background:#8a8a8a;border:1px solid #777;border-radius:2px"></div>
<div style="left:1501px;top:1015px;width:13px;height:14px;background:#8a8a8a;border:1px solid #777;border-radius:2px"></div>
<svg style="left:6px;top:1017px" width="6" height="10"><path d="M6 0v10l-6-5z" fill="#444"/></svg>
<svg style="left:1505px;top:1017px" width="6" height="10"><path d="M0 0v10l6-5z" fill="#444"/></svg>
<div style="left:1515px;top:952px;width:403px;height:78px;background:#444"></div>
<div style="left:1516px;top:952.5px;width:60px;height:22.5px;background:linear-gradient(180deg,#a0a0a0,#888);border-radius:5px 5px 0 0"></div>
<div style="left:1516px;top:976px;width:60px;height:53px;background:linear-gradient(180deg,#8c8c8c,#5a5a5a);border-radius:0 0 4px 4px"></div>
<div style="left:1537px;top:954px;width:19px;height:19px;border-radius:50%;background:linear-gradient(180deg,#777,#999)"></div>
<svg style="left:1540px;top:959px" width="13" height="7"><path d="M0 7h13l-6.500-7z" fill="#333"/></svg>
<div style="left:1526px;top:983px;width:40px;height:39px;border:2.500px solid #222;border-radius:6px;background:linear-gradient(180deg,#aaa 0,#a2a2a2 50%,#8a8a8a 50%,#808080 100%)"></div>
<div style="left:1538px;top:994px;width:17px;height:17px;background:linear-gradient(180deg,#222 0,#1a1a1a 50%,#000 50%)"></div>
<div style="left:1577px;top:952px;width:58px;height:38px;background:linear-gradient(180deg,#a8a8a8 0%,#8e8e8e 50%,#727272 100%);border-radius:5px 0 0 0;"></div>
<div style="left:1593.0px;top:959px;width:26px;height:26px;border-radius:50%;background:linear-gradient(180deg,#757575,#a4a4a4)"></div>
<div style="left:1636px;top:952px;width:55px;height:38px;background:linear-gradient(180deg,#a8a8a8 0%,#8e8e8e 50%,#727272 100%);"></div>
<div style="left:1650.5px;top:959px;width:26px;height:26px;border-radius:50%;background:linear-gradient(180deg,#757575,#a4a4a4)"></div>
<div style="left:1692px;top:952px;width:55px;height:38px;background:linear-gradient(180deg,#a8a8a8 0%,#8e8e8e 50%,#727272 100%);"></div>
<div style="left:1706.5px;top:959px;width:26px;height:26px;border-radius:50%;background:linear-gradient(180deg,#757575,#a4a4a4)"></div>
<div style="left:1748px;top:952px;width:55px;height:38px;background:linear-gradient(180deg,#a8a8a8 0%,#8e8e8e 50%,#727272 100%);"></div>
<div style="left:1762.5px;top:959px;width:26px;height:26px;border-radius:50%;background:linear-gradient(180deg,#757575,#a4a4a4)"></div>
<div style="left:1804px;top:952px;width:56px;height:38px;background:linear-gradient(180deg,#3c3c3c,#2a2a2a);"></div>
<div style="left:1819.0px;top:959px;width:26px;height:26px;border-radius:50%;background:linear-gradient(180deg,#222,#383838)"></div>
<div style="left:1861px;top:952px;width:56px;height:38px;background:linear-gradient(180deg,#3c3c3c,#2a2a2a);"></div>
<div style="left:1876.0px;top:959px;width:26px;height:26px;border-radius:50%;background:linear-gradient(180deg,#222,#383838)"></div>
<svg style="left:1577px;top:953px" width="340" height="38"><rect x="23.500" y="13.500" width="10" height="10" fill="#333"/><path d="M82 11.500v15l12-7.500z" fill="#333"/><g fill="none" stroke="#333" stroke-width="2.600"><path d="M139.500 12.500h-3v13h3M146 12.500h3v13h-3"/></g><circle cx="141" cy="19" r="1" fill="#333"/><circle cx="144.500" cy="19" r="1" fill="#333"/><path d="M199 19c-2-4-7-4-7 0s5 4 7 0c2-4 7-4 7 0s-5 4-7 0z" fill="none" stroke="#333" stroke-width="2"/><g fill="none" stroke="#1c1c1c" stroke-width="2.500"><path d="M249 17a6.500 6.500 0 0 1 12-2M261 21a6.500 6.500 0 0 1-12 2"/></g><path d="M262 11v5h-5zM248 27v-5h5z" fill="#1c1c1c"/></svg>
<div style="left:1577px;top:991px;width:170px;height:39px;background:linear-gradient(180deg,#a8a8a8 0%,#8e8e8e 50%,#727272 100%);border-radius:5px 0 0 0"></div>
<div style="left:1748px;top:991px;width:170px;height:39px;background:linear-gradient(180deg,#a8a8a8 0%,#8e8e8e 50%,#727272 100%);border-radius:0 5px 0 0"></div>
<div style="left:1603px;top:998px;width:26px;height:26px;border-radius:50%;background:linear-gradient(180deg,#757575,#a4a4a4)"></div>
<div style="left:1869px;top:998px;width:26px;height:26px;border-radius:50%;background:linear-gradient(180deg,#757575,#a4a4a4)"></div>
<span class="t" style="left:1648.00px;top:996.95px;font-size:29px;color:#333;transform:scaleX(0.9925);-webkit-text-stroke:.6px #333;">Back</span>
<span class="t" style="left:1782.00px;top:996.95px;font-size:29px;color:#333;transform:scaleX(1.0899);-webkit-text-stroke:.6px #333;">Next</span>
<svg style="left:1609px;top:1004px" width="14" height="14"><path d="M6.500 1l-5 6 5 6M12.500 1l-5 6 5 6" fill="none" stroke="#333" stroke-width="2"/></svg>
<svg style="left:1875px;top:1004px" width="14" height="14"><path d="M1.500 1l5 6-5 6M7.500 1l5 6-5 6" fill="none" stroke="#333" stroke-width="2"/></svg>
</body></html>
